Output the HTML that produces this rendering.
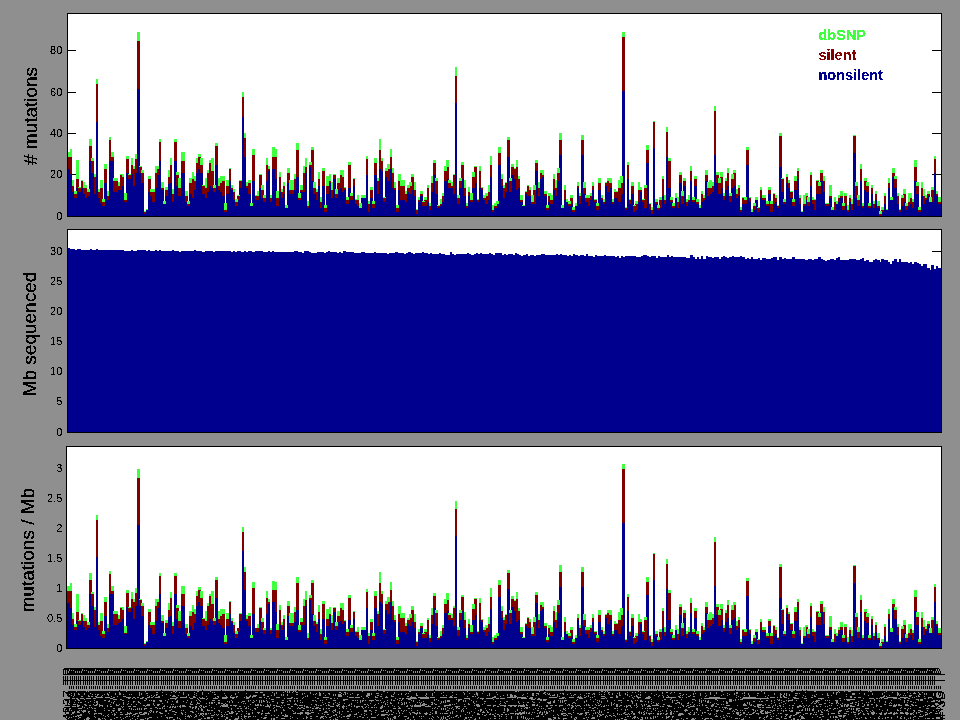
<!DOCTYPE html><html><head><meta charset="utf-8"><title>Mutation rates</title>
<style>html,body{margin:0;padding:0;background:#8f8f8f}svg{display:block}text{font-family:"Liberation Sans", sans-serif;fill:#000}</style></head><body>
<svg width="960" height="720" viewBox="0 0 960 720" shape-rendering="crispEdges">
<rect width="960" height="720" fill="#8f8f8f"/>
<defs><filter id="bin" filterUnits="userSpaceOnUse" x="0" y="0" width="960" height="720" color-interpolation-filters="sRGB"><feComponentTransfer><feFuncA type="discrete" tableValues="0 0 1 1 1"/></feComponentTransfer></filter><filter id="b5" filterUnits="userSpaceOnUse" x="0" y="0" width="70" height="720" color-interpolation-filters="sRGB"><feComponentTransfer><feFuncA type="discrete" tableValues="0 0 0 0 0 0 0 0 0 1 1 1 1 1 1 1 1 1 1 1"/></feComponentTransfer></filter><filter id="b2" filterUnits="userSpaceOnUse" x="0" y="656" width="960" height="64" color-interpolation-filters="sRGB"><feComponentTransfer><feFuncA type="discrete" tableValues="0 0 0 0 0 0 0 0 0 0 0 0 1 1 1 1 1 1 1 1"/></feComponentTransfer></filter></defs>
<rect x="67" y="13" width="875" height="204" fill="#fff"/>
<path fill="#000" d="M68 174h8v1h-8zM932 174h9v1h-9zM68 133h8v1h-8zM932 133h9v1h-9zM68 92h8v1h-8zM932 92h9v1h-9zM68 50h8v1h-8zM932 50h9v1h-9z"/>
<path fill="#00008f" d="M68 169h2V216h-2zM70 174h2V216h-2zM72 192h2V216h-2zM74 198h3V216h-3zM76 188h3V216h-3zM78 192h3V216h-3zM81 188h2V216h-2zM83 194h2V216h-2zM85 198h2V216h-2zM87 196h3V216h-3zM89 161h3V216h-3zM91 173h3V216h-3zM94 194h2V216h-2zM96 122h2V216h-2zM98 198h2V216h-2zM100 203h3V216h-3zM102 206h3V216h-3zM104 183h3V216h-3zM107 200h2V216h-2zM109 161h2V216h-2zM111 161h3V216h-3zM113 192h5V216h-5zM118 190h2V216h-2zM120 190h2V216h-2zM122 186h2V216h-2zM124 202h3V216h-3zM126 173h3V216h-3zM128 179h3V216h-3zM131 174h2V216h-2zM133 186h2V216h-2zM135 173h2V216h-2zM137 89h3V216h-3zM139 173h3V216h-3zM141 183h3V216h-3zM144 214h2V216h-2zM146 210h2V216h-2zM148 192h3V216h-3zM150 196h3V216h-3zM152 202h3V216h-3zM155 188h2V216h-2zM157 175h2V216h-2zM159 161h2V216h-2zM161 190h3V216h-3zM163 204h3V216h-3zM165 196h3V216h-3zM168 184h2V216h-2zM170 183h2V216h-2zM172 202h2V216h-2zM174 161h3V216h-3zM176 186h3V216h-3zM178 196h3V216h-3zM181 173h4V216h-4zM185 202h3V216h-3zM187 206h3V216h-3zM189 194h3V216h-3zM192 198h2V216h-2zM194 190h2V216h-2zM196 173h2V216h-2zM198 169h3V216h-3zM200 173h3V216h-3zM202 194h3V216h-3zM205 198h2V216h-2zM207 192h2V216h-2zM209 186h2V216h-2zM211 188h3V216h-3zM213 192h3V216h-3zM215 165h3V216h-3zM218 190h2V216h-2zM220 192h2V216h-2zM222 196h3V216h-3zM224 212h3V216h-3zM226 194h3V216h-3zM229 181h2V216h-2zM231 190h2V216h-2zM233 200h2V216h-2zM235 206h3V216h-3zM237 200h3V216h-3zM239 188h3V216h-3zM242 117h2V216h-2zM244 157h2V216h-2zM246 188h2V216h-2zM248 194h3V216h-3zM250 206h3V216h-3zM252 181h3V216h-3zM255 200h2V216h-2zM257 200h2V216h-2zM259 188h3V216h-3zM261 198h3V216h-3zM263 202h3V216h-3zM266 181h2V216h-2zM268 171h2V216h-2zM270 202h2V216h-2zM272 169h3V216h-3zM275 179h2V216h-2zM276 206h3V216h-3zM279 192h2V216h-2zM281 198h2V216h-2zM283 194h2V216h-2zM285 208h3V216h-3zM287 183h3V216h-3zM289 194h5V216h-5zM294 190h2V216h-2zM296 177h3V216h-3zM298 200h3V216h-3zM300 192h3V216h-3zM303 192h2V216h-2zM305 173h2V216h-2zM307 208h2V216h-2zM309 167h3V216h-3zM311 181h3V216h-3zM313 194h3V216h-3zM316 200h2V216h-2zM318 186h2V216h-2zM320 208h2V216h-2zM322 186h3V216h-3zM324 212h3V216h-3zM326 194h3V216h-3zM329 183h2V216h-2zM331 198h2V216h-2zM333 179h3V216h-3zM335 198h3V216h-3zM337 190h3V216h-3zM340 188h2V216h-2zM342 192h2V216h-2zM344 190h2V216h-2zM346 204h3V216h-3zM348 188h3V216h-3zM350 200h3V216h-3zM353 186h2V216h-2zM355 204h2V216h-2zM357 206h2V216h-2zM359 208h3V216h-3zM361 198h5V216h-5zM366 175h2V216h-2zM368 212h2V216h-2zM370 198h3V216h-3zM372 208h3V216h-3zM374 175h3V216h-3zM377 194h2V216h-2zM379 169h2V216h-2zM381 171h2V216h-2zM383 202h3V216h-3zM385 177h3V216h-3zM387 181h3V216h-3zM390 169h2V216h-2zM392 188h2V216h-2zM394 190h2V216h-2zM396 212h3V216h-3zM398 190h3V216h-3zM400 200h5V216h-5zM405 202h2V216h-2zM407 192h3V216h-3zM409 194h3V216h-3zM411 190h3V216h-3zM414 196h2V216h-2zM416 214h2V216h-2zM418 202h2V216h-2zM420 196h3V216h-3zM422 206h3V216h-3zM424 206h3V216h-3zM427 202h2V216h-2zM429 210h2V216h-2zM431 192h2V216h-2zM433 175h3V216h-3zM435 194h3V216h-3zM437 208h3V216h-3zM440 206h2V216h-2zM442 202h2V216h-2zM444 181h3V216h-3zM446 179h3V216h-3zM448 188h3V216h-3zM451 188h2V216h-2zM453 194h2V216h-2zM455 103h2V216h-2zM457 204h3V216h-3zM459 188h3V216h-3zM461 179h3V216h-3zM464 196h2V216h-2zM466 208h2V216h-2zM468 196h2V216h-2zM470 202h3V216h-3zM472 188h3V216h-3zM474 183h3V216h-3zM477 202h2V216h-2zM479 188h2V216h-2zM481 190h2V216h-2zM483 200h3V216h-3zM485 204h3V216h-3zM488 200h2V216h-2zM490 177h2V216h-2zM492 212h2V216h-2zM494 208h3V216h-3zM496 204h3V216h-3zM498 165h3V216h-3zM501 186h2V216h-2zM503 198h2V216h-2zM505 192h2V216h-2zM507 157h3V216h-3zM509 192h3V216h-3zM511 175h3V216h-3zM514 179h2V216h-2zM516 190h2V216h-2zM518 188h2V216h-2zM520 202h3V216h-3zM522 206h3V216h-3zM525 194h2V216h-2zM527 196h2V216h-2zM529 196h2V216h-2zM531 204h3V216h-3zM533 204h3V216h-3zM535 171h3V216h-3zM538 196h2V216h-2zM540 179h2V216h-2zM542 177h2V216h-2zM544 196h3V216h-3zM546 210h3V216h-3zM548 202h3V216h-3zM550 204h3V216h-3zM553 190h2V216h-2zM555 196h2V216h-2zM557 181h3V216h-3zM559 155h3V216h-3zM561 208h3V216h-3zM564 200h2V216h-2zM566 202h2V216h-2zM568 206h3V216h-3zM570 204h3V216h-3zM572 212h3V216h-3zM575 206h2V216h-2zM577 188h2V216h-2zM579 204h2V216h-2zM581 155h3V216h-3zM583 194h3V216h-3zM585 202h3V216h-3zM588 206h2V216h-2zM590 200h2V216h-2zM592 190h2V216h-2zM594 202h3V216h-3zM596 210h3V216h-3zM598 190h3V216h-3zM601 200h2V216h-2zM603 204h2V216h-2zM605 186h2V216h-2zM607 192h3V216h-3zM609 188h3V216h-3zM612 204h2V216h-2zM614 198h2V216h-2zM616 198h2V216h-2zM618 202h3V216h-3zM620 194h3V216h-3zM622 91h3V216h-3zM625 210h2V216h-2zM627 179h2V216h-2zM629 204h2V216h-2zM631 194h3V216h-3zM633 212h3V216h-3zM635 210h3V216h-3zM638 202h2V216h-2zM639 192h3V216h-3zM642 202h3V216h-3zM644 208h3V216h-3zM646 163h3V216h-3zM649 210h2V216h-2zM651 214h2V216h-2zM653 148h2V216h-2zM655 204h3V216h-3zM657 210h3V216h-3zM659 208h3V216h-3zM662 196h2V216h-2zM664 204h2V216h-2zM666 157h2V216h-2zM668 188h3V216h-3zM670 202h3V216h-3zM672 208h3V216h-3zM675 198h2V216h-2zM677 208h2V216h-2zM679 183h3V216h-3zM681 204h3V216h-3zM683 186h3V216h-3zM686 206h2V216h-2zM688 202h2V216h-2zM690 181h2V216h-2zM692 202h3V216h-3zM694 186h3V216h-3zM696 204h3V216h-3zM699 208h2V216h-2zM701 202h2V216h-2zM703 200h2V216h-2zM705 181h3V216h-3zM707 196h3V216h-3zM709 194h3V216h-3zM712 192h2V216h-2zM714 155h2V216h-2zM716 183h3V216h-3zM718 194h3V216h-3zM720 188h3V216h-3zM723 200h2V216h-2zM725 190h2V216h-2zM727 186h2V216h-2zM729 202h3V216h-3zM731 188h3V216h-3zM733 186h3V216h-3zM736 198h2V216h-2zM738 196h2V216h-2zM740 212h2V216h-2zM742 204h3V216h-3zM744 204h3V216h-3zM746 165h3V216h-3zM749 202h2V216h-2zM751 212h2V216h-2zM753 210h3V216h-3zM755 200h3V216h-3zM757 212h3V216h-3zM760 198h2V216h-2zM762 200h4V216h-4zM766 206h3V216h-3zM768 194h3V216h-3zM770 212h3V216h-3zM773 204h2V216h-2zM775 202h2V216h-2zM777 208h2V216h-2zM779 167h3V216h-3zM781 192h3V216h-3zM783 204h3V216h-3zM786 183h2V216h-2zM788 188h2V216h-2zM790 198h3V216h-3zM792 206h3V216h-3zM794 190h3V216h-3zM797 179h2V216h-2zM799 204h2V216h-2zM801 212h2V216h-2zM803 206h3V216h-3zM805 200h3V216h-3zM807 206h3V216h-3zM810 186h2V216h-2zM812 204h2V216h-2zM814 210h2V216h-2zM816 194h3V216h-3zM818 194h3V216h-3zM820 181h3V216h-3zM823 192h2V216h-2zM825 206h4V216h-4zM829 198h3V216h-3zM831 210h3V216h-3zM834 210h2V216h-2zM836 204h2V216h-2zM838 202h2V216h-2zM840 198h3V216h-3zM842 210h3V216h-3zM844 206h3V216h-3zM847 212h2V216h-2zM849 202h2V216h-2zM851 210h2V216h-2zM853 153h3V216h-3zM855 198h3V216h-3zM857 206h3V216h-3zM860 181h2V216h-2zM862 208h2V216h-2zM864 190h3V216h-3zM866 192h3V216h-3zM868 208h3V216h-3zM871 194h2V216h-2zM873 208h2V216h-2zM875 200h2V216h-2zM877 208h3V216h-3zM881 212h3V216h-3zM884 204h2V216h-2zM886 210h2V216h-2zM888 188h2V216h-2zM890 200h3V216h-3zM892 177h3V216h-3zM894 188h3V216h-3zM897 204h2V216h-2zM899 212h2V216h-2zM901 206h3V216h-3zM903 202h3V216h-3zM905 210h3V216h-3zM908 206h2V216h-2zM910 204h2V216h-2zM912 208h2V216h-2zM914 181h3V216h-3zM916 194h3V216h-3zM918 212h3V216h-3zM921 196h2V216h-2zM923 204h2V216h-2zM925 200h2V216h-2zM927 196h3V216h-3zM929 202h3V216h-3zM931 202h3V216h-3zM934 173h2V216h-2zM936 196h2V216h-2zM938 204h3V216h-3z"/>
<path fill="#800000" d="M68 157h2V169h-2zM70 157h2V174h-2zM72 186h2V192h-2zM74 194h3V198h-3zM76 179h3V188h-3zM78 188h3V192h-3zM81 181h2V188h-2zM83 188h2V194h-2zM85 188h2V198h-2zM87 192h3V196h-3zM89 146h3V161h-3zM91 161h3V173h-3zM94 177h2V194h-2zM96 84h2V122h-2zM98 192h2V198h-2zM100 188h3V203h-3zM102 202h3V206h-3zM104 169h3V183h-3zM107 196h2V200h-2zM109 140h2V161h-2zM111 157h3V161h-3zM113 181h5V192h-5zM118 186h2V190h-2zM120 175h2V190h-2zM122 177h2V186h-2zM124 200h3V202h-3zM126 159h3V173h-3zM128 175h3V179h-3zM131 165h2V174h-2zM133 169h2V186h-2zM135 159h2V173h-2zM137 41h3V89h-3zM139 167h3V173h-3zM141 173h3V183h-3zM144 212h2V214h-2zM148 179h3V192h-3zM150 192h3V196h-3zM152 192h3V202h-3zM155 173h2V188h-2zM157 169h2V175h-2zM159 142h2V161h-2zM161 188h3V190h-3zM165 190h3V196h-3zM168 177h2V184h-2zM170 165h2V183h-2zM172 194h2V202h-2zM174 142h3V161h-3zM176 175h3V186h-3zM178 188h3V196h-3zM181 161h4V173h-4zM185 196h3V202h-3zM187 204h3V206h-3zM189 183h3V194h-3zM192 179h2V198h-2zM194 181h2V190h-2zM196 163h2V173h-2zM198 157h3V169h-3zM200 165h3V173h-3zM202 186h3V194h-3zM205 188h2V198h-2zM207 173h2V192h-2zM209 163h2V186h-2zM211 171h3V188h-3zM213 188h3V192h-3zM215 146h3V165h-3zM218 186h2V190h-2zM220 183h2V192h-2zM222 181h3V196h-3zM224 210h3V212h-3zM226 186h3V194h-3zM229 169h2V181h-2zM231 188h2V190h-2zM233 192h2V200h-2zM235 202h3V206h-3zM237 196h3V200h-3zM239 181h3V188h-3zM242 97h2V117h-2zM244 138h2V157h-2zM246 186h2V188h-2zM248 183h3V194h-3zM252 155h3V181h-3zM255 196h2V200h-2zM257 196h2V200h-2zM259 175h3V188h-3zM261 190h3V198h-3zM263 198h3V202h-3zM266 165h2V181h-2zM268 169h2V171h-2zM270 198h2V202h-2zM272 157h3V169h-3zM275 157h2V179h-2zM276 198h3V206h-3zM279 177h2V192h-2zM281 192h2V198h-2zM283 186h2V194h-2zM287 173h3V183h-3zM289 190h5V194h-5zM294 179h2V190h-2zM296 150h3V177h-3zM298 198h3V200h-3zM300 190h3V192h-3zM303 173h2V192h-2zM305 167h2V173h-2zM307 206h2V208h-2zM309 165h3V167h-3zM311 150h3V181h-3zM313 188h3V194h-3zM316 192h2V200h-2zM318 179h2V186h-2zM320 202h2V208h-2zM322 171h3V186h-3zM324 208h3V212h-3zM326 186h3V194h-3zM329 181h2V183h-2zM331 190h2V198h-2zM333 175h3V179h-3zM335 194h3V198h-3zM337 183h3V190h-3zM340 175h2V188h-2zM342 177h2V192h-2zM344 188h2V190h-2zM346 200h3V204h-3zM348 165h3V188h-3zM350 196h3V200h-3zM353 179h2V186h-2zM355 200h2V204h-2zM357 200h2V206h-2zM366 159h2V175h-2zM368 204h2V212h-2zM370 190h3V198h-3zM372 204h3V208h-3zM374 163h3V175h-3zM377 181h2V194h-2zM379 150h2V169h-2zM381 161h2V171h-2zM383 198h3V202h-3zM385 171h3V177h-3zM387 169h3V181h-3zM390 157h2V169h-2zM392 173h2V188h-2zM394 188h2V190h-2zM396 208h3V212h-3zM398 181h3V190h-3zM400 186h5V200h-5zM405 194h2V202h-2zM407 188h3V192h-3zM409 186h3V194h-3zM411 177h3V190h-3zM414 190h2V196h-2zM416 210h2V214h-2zM418 200h2V202h-2zM420 194h3V196h-3zM422 202h3V206h-3zM424 200h3V206h-3zM427 188h2V202h-2zM429 206h2V210h-2zM431 183h2V192h-2zM433 163h3V175h-3zM435 181h3V194h-3zM437 206h3V208h-3zM440 204h2V206h-2zM442 196h2V202h-2zM444 171h3V181h-3zM446 167h3V179h-3zM448 183h3V188h-3zM451 186h2V188h-2zM453 175h2V194h-2zM455 76h2V103h-2zM457 198h3V204h-3zM459 181h3V188h-3zM461 165h3V179h-3zM464 188h2V196h-2zM466 206h2V208h-2zM468 192h2V196h-2zM470 200h3V202h-3zM472 177h3V188h-3zM474 167h3V183h-3zM477 200h2V202h-2zM479 171h2V188h-2zM481 188h2V190h-2zM483 198h3V200h-3zM485 196h3V204h-3zM488 192h2V200h-2zM490 165h2V177h-2zM492 210h2V212h-2zM494 206h3V208h-3zM498 153h3V165h-3zM501 179h2V186h-2zM503 188h2V198h-2zM505 183h2V192h-2zM507 140h3V157h-3zM509 181h3V192h-3zM511 167h3V175h-3zM514 169h2V179h-2zM516 167h2V190h-2zM518 179h2V188h-2zM520 200h3V202h-3zM525 192h2V194h-2zM527 186h2V196h-2zM529 190h2V196h-2zM531 202h3V204h-3zM533 190h3V204h-3zM535 163h3V171h-3zM538 188h2V196h-2zM540 173h2V179h-2zM542 175h2V177h-2zM544 194h3V196h-3zM546 208h3V210h-3zM548 196h3V202h-3zM550 200h3V204h-3zM553 179h2V190h-2zM555 188h2V196h-2zM557 173h3V181h-3zM559 140h3V155h-3zM564 190h2V200h-2zM568 204h3V206h-3zM570 198h3V204h-3zM572 210h3V212h-3zM577 186h2V188h-2zM579 196h2V204h-2zM581 140h3V155h-3zM583 188h3V194h-3zM585 198h3V202h-3zM588 198h2V206h-2zM590 196h2V200h-2zM592 186h2V190h-2zM594 200h3V202h-3zM596 206h3V210h-3zM598 183h3V190h-3zM601 198h2V200h-2zM603 202h2V204h-2zM605 183h2V186h-2zM607 181h3V192h-3zM609 183h3V188h-3zM612 202h2V204h-2zM614 192h2V198h-2zM616 192h2V198h-2zM618 188h3V202h-3zM620 183h3V194h-3zM622 37h3V91h-3zM625 208h2V210h-2zM627 165h2V179h-2zM629 200h2V204h-2zM631 186h3V194h-3zM633 206h3V212h-3zM635 204h3V210h-3zM638 190h2V202h-2zM639 190h3V192h-3zM642 200h3V202h-3zM644 188h3V208h-3zM646 150h3V163h-3zM649 204h2V210h-2zM651 210h2V214h-2zM653 122h2V148h-2zM655 202h3V204h-3zM657 208h3V210h-3zM659 200h3V208h-3zM662 179h2V196h-2zM664 200h2V204h-2zM666 132h2V157h-2zM668 161h3V188h-3zM670 200h3V202h-3zM672 206h3V208h-3zM677 202h2V208h-2zM679 175h3V183h-3zM681 196h3V204h-3zM683 181h3V186h-3zM686 202h2V206h-2zM688 200h2V202h-2zM690 171h2V181h-2zM692 200h3V202h-3zM694 179h3V186h-3zM696 202h3V204h-3zM701 194h2V202h-2zM703 198h2V200h-2zM705 175h3V181h-3zM707 188h3V196h-3zM709 188h3V194h-3zM712 186h2V192h-2zM714 111h2V155h-2zM716 175h3V183h-3zM718 183h3V194h-3zM720 177h3V188h-3zM723 196h2V200h-2zM725 181h2V190h-2zM727 173h2V186h-2zM729 196h3V202h-3zM731 179h3V188h-3zM733 173h3V186h-3zM736 194h2V198h-2zM738 188h2V196h-2zM740 210h2V212h-2zM742 198h3V204h-3zM744 200h3V204h-3zM746 150h3V165h-3zM749 198h2V202h-2zM753 206h3V210h-3zM757 208h3V212h-3zM760 190h2V198h-2zM762 198h4V200h-4zM766 204h3V206h-3zM768 190h3V194h-3zM770 204h3V212h-3zM773 194h2V204h-2zM775 198h2V202h-2zM777 206h2V208h-2zM779 136h3V167h-3zM781 179h3V192h-3zM783 202h3V204h-3zM786 177h2V183h-2zM788 183h2V188h-2zM790 192h3V198h-3zM792 202h3V206h-3zM794 181h3V190h-3zM797 171h2V179h-2zM799 198h2V204h-2zM803 204h3V206h-3zM805 196h3V200h-3zM807 202h3V206h-3zM810 175h2V186h-2zM812 200h2V204h-2zM814 200h2V210h-2zM816 181h3V194h-3zM818 186h3V194h-3zM820 173h3V181h-3zM823 181h2V192h-2zM825 204h4V206h-4zM829 196h3V198h-3zM834 202h2V210h-2zM838 198h2V202h-2zM840 196h3V198h-3zM842 206h3V210h-3zM844 196h3V206h-3zM847 210h2V212h-2zM849 198h2V202h-2zM851 204h2V210h-2zM853 136h3V153h-3zM855 186h3V198h-3zM857 200h3V206h-3zM860 169h2V181h-2zM862 206h2V208h-2zM864 181h3V190h-3zM866 186h3V192h-3zM868 206h3V208h-3zM871 188h2V194h-2zM873 204h2V208h-2zM875 194h2V200h-2zM877 206h3V208h-3zM879 214h3V216h-3zM881 210h3V212h-3zM884 196h2V204h-2zM888 183h2V188h-2zM892 173h3V177h-3zM894 179h3V188h-3zM897 196h2V204h-2zM899 210h2V212h-2zM901 198h3V206h-3zM903 194h3V202h-3zM905 206h3V210h-3zM908 202h2V206h-2zM910 198h2V204h-2zM912 202h2V208h-2zM914 167h3V181h-3zM916 186h3V194h-3zM918 210h3V212h-3zM921 188h2V196h-2zM923 196h2V204h-2zM925 198h2V200h-2zM927 194h3V196h-3zM931 190h3V202h-3zM934 159h2V173h-2zM936 194h2V196h-2zM938 202h3V204h-3z"/>
<path fill="#40ff40" d="M68 152h2V157h-2zM70 149h2V157h-2zM72 180h2V186h-2zM74 191h3V194h-3zM76 160h3V179h-3zM78 187h3V188h-3zM81 180h2V181h-2zM83 182h2V188h-2zM85 185h2V188h-2zM87 189h3V192h-3zM89 139h3V146h-3zM91 158h3V161h-3zM94 174h2V177h-2zM96 79h2V84h-2zM98 189h2V192h-2zM100 180h3V188h-3zM102 199h3V202h-3zM104 164h3V169h-3zM107 191h2V196h-2zM109 137h2V140h-2zM111 152h3V157h-3zM113 178h5V181h-5zM118 182h2V186h-2zM120 174h2V175h-2zM122 174h2V177h-2zM124 193h3V200h-3zM126 156h3V159h-3zM128 174h3V175h-3zM131 158h2V165h-2zM133 166h2V169h-2zM135 154h2V159h-2zM137 32h3V41h-3zM139 166h3V167h-3zM141 170h3V173h-3zM144 211h2V212h-2zM146 209h2V210h-2zM148 176h3V179h-3zM150 189h3V192h-3zM152 189h3V192h-3zM155 166h2V173h-2zM157 166h2V169h-2zM159 139h2V142h-2zM161 182h3V188h-3zM163 201h3V204h-3zM165 187h3V190h-3zM168 170h2V177h-2zM170 158h2V165h-2zM172 189h2V194h-2zM174 139h3V142h-3zM176 172h3V175h-3zM178 178h3V188h-3zM181 152h4V161h-4zM185 191h3V196h-3zM187 201h3V204h-3zM189 178h3V183h-3zM192 172h2V179h-2zM194 176h2V181h-2zM196 158h2V163h-2zM198 154h3V157h-3zM200 158h3V165h-3zM202 185h3V186h-3zM205 178h2V188h-2zM207 170h2V173h-2zM209 160h2V163h-2zM211 158h3V171h-3zM213 185h3V188h-3zM215 143h3V146h-3zM218 178h2V186h-2zM220 176h2V183h-2zM222 176h3V181h-3zM224 203h3V210h-3zM226 180h3V186h-3zM229 168h2V169h-2zM231 185h2V188h-2zM233 189h2V192h-2zM235 199h3V202h-3zM237 195h3V196h-3zM239 180h3V181h-3zM242 92h2V97h-2zM244 133h2V138h-2zM246 182h2V186h-2zM248 180h3V183h-3zM250 203h3V206h-3zM252 149h3V155h-3zM255 195h2V196h-2zM257 191h2V196h-2zM259 174h3V175h-3zM261 185h3V190h-3zM263 195h3V198h-3zM266 158h2V165h-2zM268 166h2V169h-2zM270 195h2V198h-2zM272 147h3V157h-3zM275 149h2V157h-2zM276 191h3V198h-3zM279 172h2V177h-2zM281 189h2V192h-2zM283 182h2V186h-2zM285 205h3V208h-3zM287 168h3V173h-3zM289 180h5V190h-5zM294 174h2V179h-2zM296 143h3V150h-3zM298 193h3V198h-3zM300 185h3V190h-3zM303 166h2V173h-2zM305 158h2V167h-2zM307 201h2V206h-2zM309 162h3V165h-3zM311 147h3V150h-3zM313 182h3V188h-3zM316 189h2V192h-2zM318 172h2V179h-2zM320 197h2V202h-2zM322 168h3V171h-3zM324 205h3V208h-3zM326 176h3V186h-3zM329 174h2V181h-2zM331 182h2V190h-2zM333 174h3V175h-3zM335 189h3V194h-3zM337 178h3V183h-3zM340 170h2V175h-2zM342 170h2V177h-2zM344 187h2V188h-2zM346 197h3V200h-3zM348 162h3V165h-3zM350 193h3V196h-3zM353 178h2V179h-2zM355 199h2V200h-2zM357 195h2V200h-2zM359 203h3V208h-3zM361 195h5V198h-5zM366 156h2V159h-2zM368 201h2V204h-2zM370 187h3V190h-3zM372 201h3V204h-3zM374 158h3V163h-3zM377 178h2V181h-2zM379 139h2V150h-2zM381 158h2V161h-2zM383 197h3V198h-3zM385 168h3V171h-3zM387 164h3V169h-3zM390 149h2V157h-2zM392 168h2V173h-2zM394 182h2V188h-2zM396 205h3V208h-3zM398 174h3V181h-3zM400 180h5V186h-5zM405 191h2V194h-2zM407 185h3V188h-3zM409 182h3V186h-3zM411 174h3V177h-3zM414 182h2V190h-2zM416 209h2V210h-2zM418 197h2V200h-2zM420 191h3V194h-3zM422 201h3V202h-3zM424 197h3V200h-3zM427 185h2V188h-2zM429 203h2V206h-2zM431 176h2V183h-2zM433 160h3V163h-3zM435 178h3V181h-3zM437 205h3V206h-3zM440 199h2V204h-2zM442 193h2V196h-2zM444 166h3V171h-3zM446 160h3V167h-3zM448 180h3V183h-3zM451 182h2V186h-2zM453 174h2V175h-2zM455 67h2V76h-2zM457 195h3V198h-3zM459 178h3V181h-3zM461 162h3V165h-3zM464 180h2V188h-2zM466 203h2V206h-2zM468 187h2V192h-2zM470 193h3V200h-3zM472 172h3V177h-3zM474 166h3V167h-3zM477 199h2V200h-2zM479 166h2V171h-2zM481 187h2V188h-2zM483 195h3V198h-3zM485 193h3V196h-3zM488 185h2V192h-2zM490 156h2V165h-2zM492 205h2V210h-2zM494 203h3V206h-3zM496 201h3V204h-3zM498 147h3V153h-3zM501 174h2V179h-2zM503 185h2V188h-2zM505 182h2V183h-2zM507 137h3V140h-3zM509 178h3V181h-3zM511 164h3V167h-3zM514 168h2V169h-2zM516 160h2V167h-2zM518 176h2V179h-2zM520 195h3V200h-3zM522 205h3V206h-3zM525 191h2V192h-2zM527 185h2V186h-2zM529 187h2V190h-2zM531 195h3V202h-3zM533 185h3V190h-3zM535 160h3V163h-3zM538 182h2V188h-2zM540 170h2V173h-2zM542 170h2V175h-2zM544 191h3V194h-3zM546 205h3V208h-3zM548 193h3V196h-3zM550 195h3V200h-3zM553 174h2V179h-2zM555 180h2V188h-2zM557 168h3V173h-3zM559 133h3V140h-3zM561 205h3V208h-3zM564 185h2V190h-2zM566 199h2V202h-2zM568 201h3V204h-3zM570 195h3V198h-3zM572 207h3V210h-3zM575 203h2V206h-2zM577 182h2V186h-2zM579 193h2V196h-2zM581 135h3V140h-3zM583 182h3V188h-3zM585 195h3V198h-3zM588 195h2V198h-2zM590 193h2V196h-2zM592 182h2V186h-2zM594 199h3V200h-3zM596 203h3V206h-3zM598 178h3V183h-3zM601 195h2V198h-2zM603 199h2V202h-2zM605 182h2V183h-2zM607 178h3V181h-3zM609 178h3V183h-3zM612 199h2V202h-2zM614 189h2V192h-2zM616 191h2V192h-2zM618 180h3V188h-3zM620 176h3V183h-3zM622 32h3V37h-3zM625 207h2V208h-2zM627 162h2V165h-2zM629 199h2V200h-2zM631 182h3V186h-3zM633 205h3V206h-3zM635 201h3V204h-3zM638 182h2V190h-2zM639 187h3V190h-3zM642 199h3V200h-3zM644 185h3V188h-3zM646 145h3V150h-3zM649 203h2V204h-2zM651 207h2V210h-2zM653 121h2V122h-2zM655 199h3V202h-3zM657 205h3V208h-3zM659 197h3V200h-3zM662 176h2V179h-2zM664 195h2V200h-2zM666 127h2V132h-2zM668 158h3V161h-3zM670 197h3V200h-3zM672 203h3V206h-3zM675 193h2V198h-2zM677 197h2V202h-2zM679 172h3V175h-3zM681 191h3V196h-3zM683 178h3V181h-3zM686 199h2V202h-2zM688 195h2V200h-2zM690 166h2V171h-2zM692 197h3V200h-3zM694 176h3V179h-3zM696 199h3V202h-3zM699 205h2V208h-2zM701 191h2V194h-2zM703 195h2V198h-2zM705 170h3V175h-3zM707 182h3V188h-3zM709 180h3V188h-3zM712 182h2V186h-2zM714 106h2V111h-2zM716 172h3V175h-3zM718 178h3V183h-3zM720 172h3V177h-3zM723 193h2V196h-2zM725 178h2V181h-2zM727 168h2V173h-2zM729 193h3V196h-3zM731 174h3V179h-3zM733 170h3V173h-3zM736 189h2V194h-2zM738 185h2V188h-2zM740 207h2V210h-2zM742 197h3V198h-3zM744 197h3V200h-3zM746 147h3V150h-3zM749 197h2V198h-2zM751 209h2V212h-2zM753 203h3V206h-3zM755 197h3V200h-3zM757 207h3V208h-3zM760 187h2V190h-2zM762 195h4V198h-4zM766 201h3V204h-3zM768 187h3V190h-3zM770 201h3V204h-3zM773 193h2V194h-2zM775 195h2V198h-2zM777 205h2V206h-2zM779 133h3V136h-3zM781 178h3V179h-3zM783 199h3V202h-3zM786 174h2V177h-2zM788 180h2V183h-2zM790 191h3V192h-3zM792 199h3V202h-3zM794 176h3V181h-3zM797 168h2V171h-2zM799 195h2V198h-2zM801 211h2V212h-2zM803 195h3V204h-3zM805 193h3V196h-3zM807 197h3V202h-3zM810 172h2V175h-2zM812 197h2V200h-2zM814 199h2V200h-2zM816 180h3V181h-3zM818 182h3V186h-3zM820 170h3V173h-3zM823 176h2V181h-2zM825 203h4V204h-4zM829 185h3V196h-3zM831 207h3V210h-3zM834 197h2V202h-2zM836 201h2V204h-2zM838 195h2V198h-2zM840 191h3V196h-3zM842 203h3V206h-3zM844 193h3V196h-3zM847 205h2V210h-2zM849 195h2V198h-2zM851 199h2V204h-2zM853 135h3V136h-3zM855 182h3V186h-3zM857 195h3V200h-3zM860 164h2V169h-2zM862 203h2V206h-2zM864 178h3V181h-3zM866 182h3V186h-3zM868 203h3V206h-3zM871 185h2V188h-2zM873 201h2V204h-2zM875 191h2V194h-2zM877 201h3V206h-3zM879 211h3V214h-3zM881 207h3V210h-3zM884 193h2V196h-2zM886 209h2V210h-2zM888 178h2V183h-2zM890 197h3V200h-3zM892 168h3V173h-3zM894 176h3V179h-3zM897 193h2V196h-2zM899 209h2V210h-2zM901 195h3V198h-3zM903 189h3V194h-3zM905 203h3V206h-3zM908 193h2V202h-2zM910 193h2V198h-2zM912 199h2V202h-2zM914 160h3V167h-3zM916 182h3V186h-3zM918 207h3V210h-3zM921 182h2V188h-2zM923 189h2V196h-2zM925 195h2V198h-2zM927 191h3V194h-3zM929 197h3V202h-3zM931 187h3V190h-3zM934 156h2V159h-2zM936 191h2V194h-2zM938 197h3V202h-3z"/>
<path fill="#000" d="M67 13h875v1h-875zM67 216h875v1h-875zM67 13h1v204h-1zM941 13h1v204h-1z"/>
<rect x="67" y="229" width="875" height="204" fill="#fff"/>
<path fill="#000" d="M68 401h8v1h-8zM932 401h9v1h-9zM68 371h8v1h-8zM932 371h9v1h-9zM68 341h8v1h-8zM932 341h9v1h-9zM68 311h8v1h-8zM932 311h9v1h-9zM68 281h8v1h-8zM932 281h9v1h-9zM68 251h8v1h-8zM932 251h9v1h-9z"/>
<path fill="#00008f" d="M68 248h2V432h-2zM70 249h5V432h-5zM75 250h2V432h-2zM77 249h4V432h-4zM81 250h9V432h-9zM90 249h2V432h-2zM92 250h4V432h-4zM96 249h2V432h-2zM98 250h26V432h-26zM124 251h7V432h-7zM131 250h2V432h-2zM133 251h4V432h-4zM137 250h9V432h-9zM146 251h2V432h-2zM148 250h2V432h-2zM150 251h5V432h-5zM155 250h2V432h-2zM157 251h2V432h-2zM159 250h2V432h-2zM161 251h11V432h-11zM172 250h2V432h-2zM174 251h5V432h-5zM179 252h2V432h-2zM181 251h13V432h-13zM194 250h2V432h-2zM196 251h6V432h-6zM202 252h3V432h-3zM205 251h8V432h-8zM213 252h2V432h-2zM215 251h16V432h-16zM231 252h2V432h-2zM233 251h2V432h-2zM235 252h2V432h-2zM237 251h4V432h-4zM241 252h3V432h-3zM244 251h2V432h-2zM246 252h2V432h-2zM248 251h4V432h-4zM252 252h3V432h-3zM255 251h8V432h-8zM263 252h5V432h-5zM268 251h2V432h-2zM270 252h2V432h-2zM272 251h2V432h-2zM274 252h20V432h-20zM294 251h4V432h-4zM298 252h4V432h-4zM302 253h2V432h-2zM304 251h5V432h-5zM309 252h2V432h-2zM311 253h6V432h-6zM317 252h7V432h-7zM324 253h2V432h-2zM326 252h2V432h-2zM328 251h2V432h-2zM330 252h7V432h-7zM337 253h2V432h-2zM339 252h2V432h-2zM341 253h2V432h-2zM343 251h3V432h-3zM346 252h8V432h-8zM354 253h7V432h-7zM361 252h4V432h-4zM365 253h9V432h-9zM374 252h2V432h-2zM376 253h11V432h-11zM387 254h2V432h-2zM389 253h6V432h-6zM395 252h3V432h-3zM398 253h6V432h-6zM404 254h2V432h-2zM406 253h2V432h-2zM408 252h3V432h-3zM411 253h2V432h-2zM413 254h2V432h-2zM415 253h7V432h-7zM422 252h2V432h-2zM424 253h4V432h-4zM428 254h2V432h-2zM430 253h2V432h-2zM432 254h7V432h-7zM439 253h2V432h-2zM441 254h4V432h-4zM445 255h5V432h-5zM450 252h2V432h-2zM452 254h2V432h-2zM454 255h2V432h-2zM456 254h11V432h-11zM467 253h2V432h-2zM469 254h2V432h-2zM471 255h3V432h-3zM474 254h2V432h-2zM476 253h2V432h-2zM478 254h2V432h-2zM480 253h2V432h-2zM482 254h7V432h-7zM489 253h2V432h-2zM491 254h2V432h-2zM493 255h2V432h-2zM495 253h7V432h-7zM502 255h2V432h-2zM504 254h2V432h-2zM506 255h2V432h-2zM508 254h5V432h-5zM513 255h2V432h-2zM515 253h2V432h-2zM517 254h2V432h-2zM519 255h2V432h-2zM521 256h2V432h-2zM523 255h3V432h-3zM526 254h2V432h-2zM528 256h2V432h-2zM530 255h4V432h-4zM534 256h2V432h-2zM536 255h5V432h-5zM541 254h4V432h-4zM545 255h11V432h-11zM556 254h2V432h-2zM558 255h2V432h-2zM560 254h2V432h-2zM562 255h5V432h-5zM567 256h2V432h-2zM569 255h2V432h-2zM571 256h2V432h-2zM573 254h2V432h-2zM575 255h3V432h-3zM578 256h2V432h-2zM580 255h4V432h-4zM584 256h2V432h-2zM586 254h2V432h-2zM588 256h5V432h-5zM593 257h2V432h-2zM595 255h2V432h-2zM597 256h7V432h-7zM604 255h2V432h-2zM606 256h9V432h-9zM615 257h2V432h-2zM617 256h2V432h-2zM619 258h2V432h-2zM621 256h2V432h-2zM623 257h2V432h-2zM625 256h11V432h-11zM636 257h5V432h-5zM641 256h2V432h-2zM643 255h4V432h-4zM647 256h2V432h-2zM649 257h2V432h-2zM651 256h5V432h-5zM656 258h2V432h-2zM658 256h2V432h-2zM660 257h7V432h-7zM667 255h2V432h-2zM669 257h2V432h-2zM671 256h2V432h-2zM673 257h13V432h-13zM686 258h4V432h-4zM690 255h3V432h-3zM693 257h2V432h-2zM695 259h2V432h-2zM697 257h2V432h-2zM699 259h2V432h-2zM701 256h2V432h-2zM703 259h3V432h-3zM706 256h2V432h-2zM708 257h4V432h-4zM712 258h2V432h-2zM714 257h5V432h-5zM719 259h2V432h-2zM721 257h2V432h-2zM723 256h2V432h-2zM725 257h2V432h-2zM727 258h2V432h-2zM729 257h3V432h-3zM732 256h2V432h-2zM734 257h6V432h-6zM740 256h2V432h-2zM742 257h3V432h-3zM745 259h2V432h-2zM747 258h2V432h-2zM749 259h2V432h-2zM751 257h2V432h-2zM753 259h5V432h-5zM758 258h2V432h-2zM760 260h2V432h-2zM762 258h4V432h-4zM766 259h5V432h-5zM771 258h2V432h-2zM773 257h4V432h-4zM777 260h2V432h-2zM779 257h3V432h-3zM782 259h2V432h-2zM784 258h2V432h-2zM786 259h6V432h-6zM792 257h3V432h-3zM795 259h10V432h-10zM805 260h3V432h-3zM808 259h4V432h-4zM812 260h2V432h-2zM814 259h4V432h-4zM818 257h3V432h-3zM821 259h2V432h-2zM823 260h2V432h-2zM825 261h2V432h-2zM827 260h3V432h-3zM830 259h4V432h-4zM834 260h2V432h-2zM836 258h2V432h-2zM838 257h2V432h-2zM840 260h9V432h-9zM849 259h7V432h-7zM856 260h4V432h-4zM860 259h2V432h-2zM862 258h2V432h-2zM864 261h2V432h-2zM866 260h3V432h-3zM869 262h4V432h-4zM873 260h2V432h-2zM875 259h2V432h-2zM877 260h3V432h-3zM880 262h1V432h-1zM881 259h3V432h-3zM884 260h4V432h-4zM888 262h2V432h-2zM890 264h2V432h-2zM892 261h2V432h-2zM894 259h3V432h-3zM897 262h2V432h-2zM899 259h2V432h-2zM901 262h7V432h-7zM908 263h2V432h-2zM910 262h2V432h-2zM912 264h2V432h-2zM914 262h3V432h-3zM917 263h2V432h-2zM919 264h2V432h-2zM921 266h2V432h-2zM923 264h4V432h-4zM927 268h3V432h-3zM930 270h1V432h-1zM931 265h3V432h-3zM934 269h2V432h-2zM936 266h2V432h-2zM938 268h3V432h-3z"/>
<path fill="#000" d="M67 229h875v1h-875zM67 432h875v1h-875zM67 229h1v204h-1zM941 229h1v204h-1z"/>
<rect x="66" y="446" width="876" height="203" fill="#fff"/>
<path fill="#00008f" d="M67 603h3V648h-3zM70 608h2V648h-2zM72 625h2V648h-2zM74 630h3V648h-3zM76 621h3V648h-3zM78 625h3V648h-3zM81 621h2V648h-2zM83 627h2V648h-2zM85 630h2V648h-2zM87 628h3V648h-3zM89 594h3V648h-3zM91 606h3V648h-3zM94 627h2V648h-2zM96 557h2V648h-2zM98 630h2V648h-2zM100 636h3V648h-3zM102 638h3V648h-3zM104 616h3V648h-3zM107 632h2V648h-2zM109 594h2V648h-2zM111 594h3V648h-3zM113 625h5V648h-5zM118 623h2V648h-2zM120 622h2V648h-2zM122 619h2V648h-2zM124 634h3V648h-3zM126 607h3V648h-3zM128 612h3V648h-3zM131 608h2V648h-2zM133 619h2V648h-2zM135 606h2V648h-2zM137 525h3V648h-3zM139 606h3V648h-3zM141 616h3V648h-3zM144 646h2V648h-2zM146 642h2V648h-2zM148 625h3V648h-3zM150 628h3V648h-3zM152 634h3V648h-3zM155 621h2V648h-2zM157 608h2V648h-2zM159 594h2V648h-2zM161 623h3V648h-3zM163 636h3V648h-3zM165 628h3V648h-3zM168 617h2V648h-2zM170 616h2V648h-2zM172 634h2V648h-2zM174 594h3V648h-3zM176 619h3V648h-3zM178 628h3V648h-3zM181 606h4V648h-4zM185 634h3V648h-3zM187 638h3V648h-3zM189 626h3V648h-3zM192 630h2V648h-2zM194 623h2V648h-2zM196 606h2V648h-2zM198 602h3V648h-3zM200 606h3V648h-3zM202 626h3V648h-3zM205 630h2V648h-2zM207 625h2V648h-2zM209 619h2V648h-2zM211 621h3V648h-3zM213 625h3V648h-3zM215 598h3V648h-3zM218 623h2V648h-2zM220 625h2V648h-2zM222 628h3V648h-3zM224 644h3V648h-3zM226 626h3V648h-3zM229 614h2V648h-2zM231 623h2V648h-2zM233 633h2V648h-2zM235 638h3V648h-3zM237 632h3V648h-3zM239 621h3V648h-3zM242 551h2V648h-2zM244 590h2V648h-2zM246 621h2V648h-2zM248 626h3V648h-3zM250 638h3V648h-3zM252 614h3V648h-3zM255 632h2V648h-2zM257 632h2V648h-2zM259 621h3V648h-3zM261 630h3V648h-3zM263 634h3V648h-3zM266 614h2V648h-2zM268 604h2V648h-2zM270 634h2V648h-2zM272 602h3V648h-3zM275 612h2V648h-2zM276 638h3V648h-3zM279 625h2V648h-2zM281 630h2V648h-2zM283 626h2V648h-2zM285 640h3V648h-3zM287 616h3V648h-3zM289 626h5V648h-5zM294 622h2V648h-2zM296 610h3V648h-3zM298 632h3V648h-3zM300 625h3V648h-3zM303 625h2V648h-2zM305 606h2V648h-2zM307 640h2V648h-2zM309 600h3V648h-3zM311 614h3V648h-3zM313 626h3V648h-3zM316 632h2V648h-2zM318 619h2V648h-2zM320 640h2V648h-2zM322 619h3V648h-3zM324 644h3V648h-3zM326 626h3V648h-3zM329 616h2V648h-2zM331 630h2V648h-2zM333 612h3V648h-3zM335 630h3V648h-3zM337 622h3V648h-3zM340 621h2V648h-2zM342 624h2V648h-2zM344 622h2V648h-2zM346 636h3V648h-3zM348 620h3V648h-3zM350 632h3V648h-3zM353 619h2V648h-2zM355 636h2V648h-2zM357 638h2V648h-2zM359 640h3V648h-3zM361 630h5V648h-5zM366 608h2V648h-2zM368 644h2V648h-2zM370 630h3V648h-3zM372 640h3V648h-3zM374 608h3V648h-3zM377 626h2V648h-2zM379 602h2V648h-2zM381 604h2V648h-2zM383 634h3V648h-3zM385 610h3V648h-3zM387 614h3V648h-3zM390 602h2V648h-2zM392 620h2V648h-2zM394 622h2V648h-2zM396 644h3V648h-3zM398 622h3V648h-3zM400 632h5V648h-5zM405 634h2V648h-2zM407 624h3V648h-3zM409 626h3V648h-3zM411 622h3V648h-3zM414 628h2V648h-2zM416 646h2V648h-2zM418 634h2V648h-2zM420 628h3V648h-3zM422 638h3V648h-3zM424 638h3V648h-3zM427 634h2V648h-2zM429 642h2V648h-2zM431 624h2V648h-2zM433 608h3V648h-3zM435 626h3V648h-3zM437 640h3V648h-3zM440 638h2V648h-2zM442 634h2V648h-2zM444 613h3V648h-3zM446 611h3V648h-3zM448 620h3V648h-3zM451 620h2V648h-2zM453 626h2V648h-2zM455 536h2V648h-2zM457 636h3V648h-3zM459 620h3V648h-3zM461 611h3V648h-3zM464 628h2V648h-2zM466 640h2V648h-2zM468 628h2V648h-2zM470 634h3V648h-3zM472 620h3V648h-3zM474 615h3V648h-3zM477 634h2V648h-2zM479 620h2V648h-2zM481 622h2V648h-2zM483 632h3V648h-3zM485 636h3V648h-3zM488 632h2V648h-2zM490 609h2V648h-2zM492 644h2V648h-2zM494 640h3V648h-3zM496 636h3V648h-3zM498 597h3V648h-3zM501 618h2V648h-2zM503 630h2V648h-2zM505 624h2V648h-2zM507 589h3V648h-3zM509 624h3V648h-3zM511 607h3V648h-3zM514 611h2V648h-2zM516 622h2V648h-2zM518 620h2V648h-2zM520 634h3V648h-3zM522 638h3V648h-3zM525 626h2V648h-2zM527 628h2V648h-2zM529 628h2V648h-2zM531 636h3V648h-3zM533 636h3V648h-3zM535 603h3V648h-3zM538 628h2V648h-2zM540 611h2V648h-2zM542 609h2V648h-2zM544 628h3V648h-3zM546 642h3V648h-3zM548 634h3V648h-3zM550 636h3V648h-3zM553 622h2V648h-2zM555 628h2V648h-2zM557 613h3V648h-3zM559 587h3V648h-3zM561 640h3V648h-3zM564 632h2V648h-2zM566 634h2V648h-2zM568 638h3V648h-3zM570 636h3V648h-3zM572 644h3V648h-3zM575 638h2V648h-2zM577 620h2V648h-2zM579 636h2V648h-2zM581 587h3V648h-3zM583 626h3V648h-3zM585 634h3V648h-3zM588 638h2V648h-2zM590 632h2V648h-2zM592 622h2V648h-2zM594 634h3V648h-3zM596 642h3V648h-3zM598 622h3V648h-3zM601 632h2V648h-2zM603 636h2V648h-2zM605 618h2V648h-2zM607 624h3V648h-3zM609 620h3V648h-3zM612 636h2V648h-2zM614 630h2V648h-2zM616 630h2V648h-2zM618 634h3V648h-3zM620 626h3V648h-3zM622 523h3V648h-3zM625 642h2V648h-2zM627 611h2V648h-2zM629 636h2V648h-2zM631 626h3V648h-3zM633 644h3V648h-3zM635 642h3V648h-3zM638 634h2V648h-2zM639 624h3V648h-3zM642 634h3V648h-3zM644 640h3V648h-3zM646 595h3V648h-3zM649 642h2V648h-2zM651 646h2V648h-2zM653 580h2V648h-2zM655 636h3V648h-3zM657 642h3V648h-3zM659 640h3V648h-3zM662 628h2V648h-2zM664 636h2V648h-2zM666 589h2V648h-2zM668 620h3V648h-3zM670 634h3V648h-3zM672 640h3V648h-3zM675 630h2V648h-2zM677 640h2V648h-2zM679 615h3V648h-3zM681 636h3V648h-3zM683 618h3V648h-3zM686 638h2V648h-2zM688 634h2V648h-2zM690 613h2V648h-2zM692 634h3V648h-3zM694 618h3V648h-3zM696 636h3V648h-3zM699 640h2V648h-2zM701 634h2V648h-2zM703 632h2V648h-2zM705 613h3V648h-3zM707 628h3V648h-3zM709 626h3V648h-3zM712 624h2V648h-2zM714 586h2V648h-2zM716 615h3V648h-3zM718 626h3V648h-3zM720 620h3V648h-3zM723 632h2V648h-2zM725 622h2V648h-2zM727 618h2V648h-2zM729 634h3V648h-3zM731 620h3V648h-3zM733 618h3V648h-3zM736 630h2V648h-2zM738 628h2V648h-2zM740 644h2V648h-2zM742 636h3V648h-3zM744 636h3V648h-3zM746 596h3V648h-3zM749 634h2V648h-2zM751 644h2V648h-2zM753 642h3V648h-3zM755 632h3V648h-3zM757 644h3V648h-3zM760 630h2V648h-2zM762 632h4V648h-4zM766 638h3V648h-3zM768 626h3V648h-3zM770 644h3V648h-3zM773 636h2V648h-2zM775 634h2V648h-2zM777 640h2V648h-2zM779 598h3V648h-3zM781 624h3V648h-3zM783 636h3V648h-3zM786 614h2V648h-2zM788 620h2V648h-2zM790 630h3V648h-3zM792 638h3V648h-3zM794 621h3V648h-3zM797 610h2V648h-2zM799 636h2V648h-2zM801 644h2V648h-2zM803 638h3V648h-3zM805 632h3V648h-3zM807 638h3V648h-3zM810 617h2V648h-2zM812 636h2V648h-2zM814 642h2V648h-2zM816 625h3V648h-3zM818 625h3V648h-3zM820 612h3V648h-3zM823 624h2V648h-2zM825 638h4V648h-4zM829 630h3V648h-3zM831 642h3V648h-3zM834 642h2V648h-2zM836 636h2V648h-2zM838 634h2V648h-2zM840 630h3V648h-3zM842 642h3V648h-3zM844 638h3V648h-3zM847 644h2V648h-2zM849 634h2V648h-2zM851 642h2V648h-2zM853 583h3V648h-3zM855 630h3V648h-3zM857 638h3V648h-3zM860 612h2V648h-2zM862 640h2V648h-2zM864 621h3V648h-3zM866 623h3V648h-3zM868 640h3V648h-3zM871 625h2V648h-2zM873 640h2V648h-2zM875 632h2V648h-2zM877 640h3V648h-3zM881 644h3V648h-3zM884 636h2V648h-2zM886 642h2V648h-2zM888 619h2V648h-2zM890 632h3V648h-3zM892 608h3V648h-3zM894 619h3V648h-3zM897 635h2V648h-2zM899 644h2V648h-2zM901 638h3V648h-3zM903 633h3V648h-3zM905 642h3V648h-3zM908 638h2V648h-2zM910 635h2V648h-2zM912 640h2V648h-2zM914 611h3V648h-3zM916 625h3V648h-3zM918 644h3V648h-3zM921 627h2V648h-2zM923 635h2V648h-2zM925 631h2V648h-2zM927 626h3V648h-3zM929 633h3V648h-3zM931 633h3V648h-3zM934 602h2V648h-2zM936 626h2V648h-2zM938 635h3V648h-3z"/>
<path fill="#800000" d="M67 591h3V603h-3zM70 591h2V608h-2zM72 619h2V625h-2zM74 627h3V630h-3zM76 612h3V621h-3zM78 621h3V625h-3zM81 614h2V621h-2zM83 621h2V627h-2zM85 621h2V630h-2zM87 625h3V628h-3zM89 580h3V594h-3zM91 594h3V606h-3zM94 610h2V627h-2zM96 520h2V557h-2zM98 625h2V630h-2zM100 621h3V636h-3zM102 634h3V638h-3zM104 602h3V616h-3zM107 628h2V632h-2zM109 574h2V594h-2zM111 591h3V594h-3zM113 614h5V625h-5zM118 619h2V623h-2zM120 608h2V622h-2zM122 610h2V619h-2zM124 633h3V634h-3zM126 593h3V607h-3zM128 608h3V612h-3zM131 599h2V608h-2zM133 602h2V619h-2zM135 593h2V606h-2zM137 478h3V525h-3zM139 600h3V606h-3zM141 606h3V616h-3zM144 644h2V646h-2zM148 612h3V625h-3zM150 625h3V628h-3zM152 625h3V634h-3zM155 606h2V621h-2zM157 602h2V608h-2zM159 576h2V594h-2zM161 621h3V623h-3zM165 623h3V628h-3zM168 610h2V617h-2zM170 598h2V616h-2zM172 626h2V634h-2zM174 576h3V594h-3zM176 608h3V619h-3zM178 621h3V628h-3zM181 594h4V606h-4zM185 628h3V634h-3zM187 636h3V638h-3zM189 616h3V626h-3zM192 612h2V630h-2zM194 614h2V623h-2zM196 596h2V606h-2zM198 590h3V602h-3zM200 598h3V606h-3zM202 619h3V626h-3zM205 621h2V630h-2zM207 606h2V625h-2zM209 596h2V619h-2zM211 604h3V621h-3zM213 621h3V625h-3zM215 580h3V598h-3zM218 619h2V623h-2zM220 616h2V625h-2zM222 614h3V628h-3zM224 642h3V644h-3zM226 619h3V626h-3zM229 602h2V614h-2zM231 621h2V623h-2zM233 625h2V633h-2zM235 634h3V638h-3zM237 628h3V632h-3zM239 614h3V621h-3zM242 532h2V551h-2zM244 572h2V590h-2zM246 619h2V621h-2zM248 616h3V626h-3zM252 588h3V614h-3zM255 628h2V632h-2zM257 628h2V632h-2zM259 608h3V621h-3zM261 622h3V630h-3zM263 630h3V634h-3zM266 598h2V614h-2zM268 602h2V604h-2zM270 630h2V634h-2zM272 590h3V602h-3zM275 590h2V612h-2zM276 630h3V638h-3zM279 610h2V625h-2zM281 625h2V630h-2zM283 619h2V626h-2zM287 606h3V616h-3zM289 623h5V626h-5zM294 612h2V622h-2zM296 583h3V610h-3zM298 630h3V632h-3zM300 622h3V625h-3zM303 606h2V625h-2zM305 600h2V606h-2zM307 638h2V640h-2zM309 598h3V600h-3zM311 583h3V614h-3zM313 621h3V626h-3zM316 624h2V632h-2zM318 612h2V619h-2zM320 634h2V640h-2zM322 604h3V619h-3zM324 640h3V644h-3zM326 619h3V626h-3zM329 614h2V616h-2zM331 623h2V630h-2zM333 608h3V612h-3zM335 626h3V630h-3zM337 616h3V622h-3zM340 608h2V621h-2zM342 610h2V624h-2zM344 621h2V622h-2zM346 632h3V636h-3zM348 598h3V620h-3zM350 628h3V632h-3zM353 612h2V619h-2zM355 632h2V636h-2zM357 632h2V638h-2zM366 592h2V608h-2zM368 636h2V644h-2zM370 622h3V630h-3zM372 636h3V640h-3zM374 596h3V608h-3zM377 614h2V626h-2zM379 583h2V602h-2zM381 594h2V604h-2zM383 630h3V634h-3zM385 604h3V610h-3zM387 602h3V614h-3zM390 590h2V602h-2zM392 606h2V620h-2zM394 620h2V622h-2zM396 640h3V644h-3zM398 614h3V622h-3zM400 618h5V632h-5zM405 626h2V634h-2zM407 620h3V624h-3zM409 618h3V626h-3zM411 610h3V622h-3zM414 622h2V628h-2zM416 642h2V646h-2zM418 632h2V634h-2zM420 626h3V628h-3zM422 634h3V638h-3zM424 632h3V638h-3zM427 620h2V634h-2zM429 638h2V642h-2zM431 615h2V624h-2zM433 596h3V608h-3zM435 613h3V626h-3zM437 638h3V640h-3zM440 636h2V638h-2zM442 628h2V634h-2zM444 604h3V613h-3zM446 600h3V611h-3zM448 615h3V620h-3zM451 618h2V620h-2zM453 608h2V626h-2zM455 509h2V536h-2zM457 630h3V636h-3zM459 613h3V620h-3zM461 597h3V611h-3zM464 620h2V628h-2zM466 638h2V640h-2zM468 624h2V628h-2zM470 632h3V634h-3zM472 609h3V620h-3zM474 599h3V615h-3zM477 632h2V634h-2zM479 603h2V620h-2zM481 620h2V622h-2zM483 630h3V632h-3zM485 628h3V636h-3zM488 624h2V632h-2zM490 597h2V609h-2zM492 642h2V644h-2zM494 638h3V640h-3zM498 585h3V597h-3zM501 611h2V618h-2zM503 620h2V630h-2zM505 615h2V624h-2zM507 573h3V589h-3zM509 613h3V624h-3zM511 599h3V607h-3zM514 601h2V611h-2zM516 599h2V622h-2zM518 611h2V620h-2zM520 632h3V634h-3zM525 624h2V626h-2zM527 618h2V628h-2zM529 622h2V628h-2zM531 634h3V636h-3zM533 622h3V636h-3zM535 595h3V603h-3zM538 620h2V628h-2zM540 605h2V611h-2zM542 607h2V609h-2zM544 626h3V628h-3zM546 640h3V642h-3zM548 628h3V634h-3zM550 632h3V636h-3zM553 611h2V622h-2zM555 620h2V628h-2zM557 605h3V613h-3zM559 572h3V587h-3zM564 622h2V632h-2zM568 636h3V638h-3zM570 630h3V636h-3zM572 642h3V644h-3zM577 618h2V620h-2zM579 628h2V636h-2zM581 572h3V587h-3zM583 620h3V626h-3zM585 630h3V634h-3zM588 630h2V638h-2zM590 628h2V632h-2zM592 618h2V622h-2zM594 632h3V634h-3zM596 638h3V642h-3zM598 615h3V622h-3zM601 630h2V632h-2zM603 634h2V636h-2zM605 615h2V618h-2zM607 613h3V624h-3zM609 615h3V620h-3zM612 634h2V636h-2zM614 624h2V630h-2zM616 624h2V630h-2zM618 620h3V634h-3zM620 615h3V626h-3zM622 469h3V523h-3zM625 640h2V642h-2zM627 597h2V611h-2zM629 632h2V636h-2zM631 618h3V626h-3zM633 638h3V644h-3zM635 636h3V642h-3zM638 622h2V634h-2zM639 622h3V624h-3zM642 632h3V634h-3zM644 620h3V640h-3zM646 582h3V595h-3zM649 636h2V642h-2zM651 642h2V646h-2zM653 554h2V580h-2zM655 634h3V636h-3zM657 640h3V642h-3zM659 632h3V640h-3zM662 611h2V628h-2zM664 632h2V636h-2zM666 564h2V589h-2zM668 593h3V620h-3zM670 632h3V634h-3zM672 638h3V640h-3zM677 634h2V640h-2zM679 607h3V615h-3zM681 628h3V636h-3zM683 613h3V618h-3zM686 634h2V638h-2zM688 632h2V634h-2zM690 603h2V613h-2zM692 632h3V634h-3zM694 611h3V618h-3zM696 634h3V636h-3zM701 626h2V634h-2zM703 630h2V632h-2zM705 607h3V613h-3zM707 620h3V628h-3zM709 620h3V626h-3zM712 618h2V624h-2zM714 542h2V586h-2zM716 607h3V615h-3zM718 615h3V626h-3zM720 609h3V620h-3zM723 628h2V632h-2zM725 613h2V622h-2zM727 605h2V618h-2zM729 628h3V634h-3zM731 610h3V620h-3zM733 605h3V618h-3zM736 626h2V630h-2zM738 620h2V628h-2zM740 642h2V644h-2zM742 630h3V636h-3zM744 632h3V636h-3zM746 581h3V596h-3zM749 630h2V634h-2zM753 638h3V642h-3zM757 640h3V644h-3zM760 622h2V630h-2zM762 630h4V632h-4zM766 636h3V638h-3zM768 621h3V626h-3zM770 636h3V644h-3zM773 626h2V636h-2zM775 630h2V634h-2zM777 638h2V640h-2zM779 567h3V598h-3zM781 610h3V624h-3zM783 634h3V636h-3zM786 608h2V614h-2zM788 614h2V620h-2zM790 624h3V630h-3zM792 634h3V638h-3zM794 612h3V621h-3zM797 602h2V610h-2zM799 630h2V636h-2zM803 636h3V638h-3zM805 627h3V632h-3zM807 634h3V638h-3zM810 606h2V617h-2zM812 632h2V636h-2zM814 632h2V642h-2zM816 612h3V625h-3zM818 617h3V625h-3zM820 604h3V612h-3zM823 612h2V624h-2zM825 636h4V638h-4zM829 627h3V630h-3zM834 634h2V642h-2zM838 630h2V634h-2zM840 627h3V630h-3zM842 638h3V642h-3zM844 627h3V638h-3zM847 642h2V644h-2zM849 630h2V634h-2zM851 636h2V642h-2zM853 566h3V583h-3zM855 617h3V630h-3zM857 632h3V638h-3zM860 600h2V612h-2zM862 638h2V640h-2zM864 612h3V621h-3zM866 617h3V623h-3zM868 638h3V640h-3zM871 619h2V625h-2zM873 636h2V640h-2zM875 625h2V632h-2zM877 638h3V640h-3zM879 646h3V648h-3zM881 642h3V644h-3zM884 627h2V636h-2zM888 614h2V619h-2zM892 604h3V608h-3zM894 610h3V619h-3zM897 627h2V635h-2zM899 642h2V644h-2zM901 629h3V638h-3zM903 625h3V633h-3zM905 638h3V642h-3zM908 633h2V638h-2zM910 629h2V635h-2zM912 633h2V640h-2zM914 597h3V611h-3zM916 617h3V625h-3zM918 642h3V644h-3zM921 618h2V627h-2zM923 627h2V635h-2zM925 629h2V631h-2zM927 624h3V626h-3zM931 620h3V633h-3zM934 587h2V602h-2zM936 624h2V626h-2zM938 633h3V635h-3z"/>
<path fill="#40ff40" d="M67 586h3V591h-3zM70 583h2V591h-2zM72 613h2V619h-2zM74 624h3V627h-3zM76 594h3V612h-3zM78 620h3V621h-3zM81 613h2V614h-2zM83 615h2V621h-2zM85 618h2V621h-2zM87 622h3V625h-3zM89 573h3V580h-3zM91 592h3V594h-3zM94 607h2V610h-2zM96 515h2V520h-2zM98 622h2V625h-2zM100 613h3V621h-3zM102 631h3V634h-3zM104 597h3V602h-3zM107 624h2V628h-2zM109 571h2V574h-2zM111 586h3V591h-3zM113 611h5V614h-5zM118 615h2V619h-2zM120 607h2V608h-2zM122 607h2V610h-2zM124 626h3V633h-3zM126 590h3V593h-3zM128 607h3V608h-3zM131 592h2V599h-2zM133 599h2V602h-2zM135 588h2V593h-2zM137 469h3V478h-3zM139 599h3V600h-3zM141 603h3V606h-3zM144 643h2V644h-2zM146 641h2V642h-2zM148 609h3V612h-3zM150 622h3V625h-3zM152 622h3V625h-3zM155 599h2V606h-2zM157 599h2V602h-2zM159 573h2V576h-2zM161 615h3V621h-3zM163 633h3V636h-3zM165 620h3V623h-3zM168 603h2V610h-2zM170 592h2V598h-2zM172 622h2V626h-2zM174 573h3V576h-3zM176 605h3V608h-3zM178 611h3V621h-3zM181 586h4V594h-4zM185 624h3V628h-3zM187 633h3V636h-3zM189 611h3V616h-3zM192 605h2V612h-2zM194 609h2V614h-2zM196 591h2V596h-2zM198 587h3V590h-3zM200 591h3V598h-3zM202 618h3V619h-3zM205 611h2V621h-2zM207 603h2V606h-2zM209 594h2V596h-2zM211 591h3V604h-3zM213 618h3V621h-3zM215 577h3V580h-3zM218 611h2V619h-2zM220 609h2V616h-2zM222 609h3V614h-3zM224 635h3V642h-3zM226 613h3V619h-3zM229 601h2V602h-2zM231 618h2V621h-2zM233 622h2V625h-2zM235 631h3V634h-3zM239 613h3V614h-3zM242 527h2V532h-2zM244 567h2V572h-2zM246 615h2V619h-2zM248 613h3V616h-3zM250 635h3V638h-3zM252 582h3V588h-3zM257 624h2V628h-2zM259 607h3V608h-3zM261 618h3V622h-3zM263 628h3V630h-3zM266 591h2V598h-2zM268 599h2V602h-2zM270 628h2V630h-2zM272 581h3V590h-3zM275 582h2V590h-2zM276 624h3V630h-3zM279 605h2V610h-2zM281 622h2V625h-2zM283 615h2V619h-2zM285 637h3V640h-3zM287 601h3V606h-3zM289 613h5V623h-5zM294 607h2V612h-2zM296 577h3V583h-3zM298 625h3V630h-3zM300 618h3V622h-3zM303 599h2V606h-2zM305 591h2V600h-2zM307 633h2V638h-2zM309 595h3V598h-3zM311 580h3V583h-3zM313 615h3V621h-3zM316 622h2V624h-2zM318 605h2V612h-2zM320 629h2V634h-2zM322 601h3V604h-3zM324 637h3V640h-3zM326 609h3V619h-3zM329 607h2V614h-2zM331 615h2V623h-2zM333 607h3V608h-3zM335 622h3V626h-3zM337 611h3V616h-3zM340 603h2V608h-2zM342 603h2V610h-2zM344 620h2V621h-2zM346 629h3V632h-3zM348 595h3V598h-3zM350 625h3V628h-3zM353 611h2V612h-2zM355 631h2V632h-2zM357 627h2V632h-2zM359 635h3V640h-3zM361 627h5V630h-5zM366 589h2V592h-2zM368 633h2V636h-2zM370 619h3V622h-3zM372 633h3V636h-3zM374 591h3V596h-3zM377 611h2V614h-2zM379 572h2V583h-2zM381 591h2V594h-2zM383 629h3V630h-3zM385 601h3V604h-3zM387 597h3V602h-3zM390 582h2V590h-2zM392 601h2V606h-2zM394 615h2V620h-2zM396 637h3V640h-3zM398 606h3V614h-3zM400 613h5V618h-5zM405 623h2V626h-2zM407 618h3V620h-3zM409 614h3V618h-3zM411 606h3V610h-3zM414 614h2V622h-2zM416 641h2V642h-2zM418 629h2V632h-2zM420 623h3V626h-3zM422 633h3V634h-3zM424 629h3V632h-3zM427 618h2V620h-2zM429 635h2V638h-2zM431 608h2V615h-2zM433 593h3V596h-3zM435 610h3V613h-3zM437 637h3V638h-3zM440 631h2V636h-2zM442 625h2V628h-2zM444 599h3V604h-3zM446 593h3V600h-3zM448 613h3V615h-3zM451 614h2V618h-2zM453 606h2V608h-2zM455 501h2V509h-2zM457 627h3V630h-3zM459 610h3V613h-3zM461 595h3V597h-3zM464 612h2V620h-2zM466 635h2V638h-2zM468 619h2V624h-2zM470 625h3V632h-3zM472 604h3V609h-3zM474 598h3V599h-3zM477 631h2V632h-2zM479 598h2V603h-2zM481 619h2V620h-2zM483 627h3V630h-3zM485 625h3V628h-3zM488 617h2V624h-2zM490 588h2V597h-2zM492 637h2V642h-2zM494 635h3V638h-3zM496 633h3V636h-3zM498 580h3V585h-3zM501 606h2V611h-2zM503 617h2V620h-2zM505 614h2V615h-2zM507 570h3V573h-3zM509 610h3V613h-3zM511 596h3V599h-3zM514 600h2V601h-2zM516 592h2V599h-2zM518 608h2V611h-2zM520 627h3V632h-3zM522 637h3V638h-3zM525 623h2V624h-2zM527 617h2V618h-2zM529 619h2V622h-2zM531 627h3V634h-3zM533 617h3V622h-3zM535 592h3V595h-3zM538 614h2V620h-2zM540 602h2V605h-2zM542 602h2V607h-2zM544 623h3V626h-3zM546 637h3V640h-3zM548 625h3V628h-3zM550 627h3V632h-3zM553 606h2V611h-2zM555 612h2V620h-2zM557 600h3V605h-3zM559 565h3V572h-3zM561 637h3V640h-3zM564 617h2V622h-2zM566 631h2V634h-2zM568 633h3V636h-3zM570 627h3V630h-3zM572 639h3V642h-3zM575 635h2V638h-2zM577 614h2V618h-2zM579 625h2V628h-2zM581 567h3V572h-3zM583 614h3V620h-3zM585 627h3V630h-3zM588 627h2V630h-2zM590 625h2V628h-2zM592 614h2V618h-2zM594 631h3V632h-3zM596 635h3V638h-3zM598 610h3V615h-3zM601 627h2V630h-2zM603 631h2V634h-2zM605 614h2V615h-2zM607 610h3V613h-3zM609 610h3V615h-3zM612 631h2V634h-2zM614 621h2V624h-2zM616 623h2V624h-2zM618 612h3V620h-3zM620 608h3V615h-3zM622 464h3V469h-3zM625 639h2V640h-2zM627 594h2V597h-2zM629 631h2V632h-2zM631 614h3V618h-3zM633 637h3V638h-3zM635 633h3V636h-3zM638 614h2V622h-2zM639 619h3V622h-3zM642 631h3V632h-3zM644 617h3V620h-3zM646 577h3V582h-3zM649 635h2V636h-2zM651 639h2V642h-2zM653 553h2V554h-2zM655 631h3V634h-3zM657 637h3V640h-3zM659 629h3V632h-3zM662 608h2V611h-2zM664 627h2V632h-2zM666 559h2V564h-2zM668 590h3V593h-3zM670 629h3V632h-3zM672 635h3V638h-3zM675 625h2V630h-2zM677 629h2V634h-2zM679 604h3V607h-3zM681 623h3V628h-3zM683 610h3V613h-3zM686 631h2V634h-2zM688 627h2V632h-2zM690 598h2V603h-2zM692 629h3V632h-3zM694 608h3V611h-3zM696 631h3V634h-3zM699 637h2V640h-2zM701 623h2V626h-2zM703 627h2V630h-2zM705 602h3V607h-3zM707 614h3V620h-3zM709 612h3V620h-3zM712 614h2V618h-2zM714 537h2V542h-2zM716 604h3V607h-3zM718 610h3V615h-3zM720 604h3V609h-3zM723 625h2V628h-2zM725 610h2V613h-2zM727 600h2V605h-2zM729 625h3V628h-3zM731 605h3V610h-3zM733 602h3V605h-3zM736 621h2V626h-2zM738 617h2V620h-2zM740 639h2V642h-2zM742 629h3V630h-3zM744 629h3V632h-3zM746 578h3V581h-3zM749 629h2V630h-2zM751 641h2V644h-2zM753 635h3V638h-3zM755 629h3V632h-3zM757 639h3V640h-3zM760 619h2V622h-2zM762 627h4V630h-4zM766 633h3V636h-3zM768 619h3V621h-3zM770 633h3V636h-3zM773 625h2V626h-2zM775 627h2V630h-2zM777 637h2V638h-2zM779 564h3V567h-3zM781 609h3V610h-3zM783 631h3V634h-3zM786 605h2V608h-2zM788 612h2V614h-2zM790 623h3V624h-3zM792 631h3V634h-3zM794 607h3V612h-3zM797 599h2V602h-2zM799 627h2V630h-2zM801 643h2V644h-2zM803 627h3V636h-3zM805 625h3V627h-3zM807 629h3V634h-3zM810 603h2V606h-2zM812 629h2V632h-2zM814 631h2V632h-2zM816 611h3V612h-3zM818 613h3V617h-3zM820 601h3V604h-3zM823 607h2V612h-2zM825 635h4V636h-4zM829 616h3V627h-3zM831 639h3V642h-3zM834 629h2V634h-2zM836 633h2V636h-2zM838 627h2V630h-2zM840 622h3V627h-3zM842 635h3V638h-3zM844 624h3V627h-3zM847 637h2V642h-2zM849 627h2V630h-2zM851 630h2V636h-2zM853 565h3V566h-3zM855 613h3V617h-3zM857 627h3V632h-3zM860 595h2V600h-2zM862 635h2V638h-2zM864 609h3V612h-3zM866 613h3V617h-3zM868 635h3V638h-3zM871 616h2V619h-2zM873 633h2V636h-2zM875 622h2V625h-2zM877 633h3V638h-3zM879 643h3V646h-3zM881 639h3V642h-3zM884 624h2V627h-2zM886 641h2V642h-2zM888 609h2V614h-2zM890 628h3V632h-3zM892 599h3V604h-3zM894 607h3V610h-3zM897 624h2V627h-2zM899 641h2V642h-2zM901 626h3V629h-3zM903 620h3V625h-3zM905 634h3V638h-3zM908 624h2V633h-2zM910 624h2V629h-2zM912 630h2V633h-2zM914 590h3V597h-3zM916 612h3V617h-3zM918 639h3V642h-3zM921 612h2V618h-2zM923 620h2V627h-2zM925 626h2V629h-2zM927 621h3V624h-3zM929 628h3V633h-3zM931 617h3V620h-3zM934 584h2V587h-2zM936 621h2V624h-2zM938 628h3V633h-3z"/>
<path fill="#000" d="M66 446h876v1h-876zM66 648h876v1h-876zM66 446h1v203h-1zM941 446h1v203h-1z"/>
<g filter="url(#b5)">
<text x="62.3" y="220" font-size="11" text-anchor="end">0</text><text x="62.3" y="178" font-size="11" text-anchor="end">20</text><text x="62.3" y="137" font-size="11" text-anchor="end">40</text><text x="62.3" y="96" font-size="11" text-anchor="end">60</text><text x="62.3" y="54" font-size="11" text-anchor="end">80</text><text x="62.3" y="436" font-size="11" text-anchor="end">0</text><text x="62.3" y="405" font-size="11" text-anchor="end">5</text><text x="62.3" y="375" font-size="11" text-anchor="end">10</text><text x="62.3" y="345" font-size="11" text-anchor="end">15</text><text x="62.3" y="315" font-size="11" text-anchor="end">20</text><text x="62.3" y="285" font-size="11" text-anchor="end">25</text><text x="62.3" y="255" font-size="11" text-anchor="end">30</text><text x="62.3" y="652" font-size="11" text-anchor="end">0</text><text x="62.3" y="622" font-size="11" text-anchor="end">0.5</text><text x="62.3" y="592" font-size="11" text-anchor="end">1</text><text x="62.3" y="562" font-size="11" text-anchor="end">1.5</text><text x="62.3" y="532" font-size="11" text-anchor="end">2</text><text x="62.3" y="502" font-size="11" text-anchor="end">2.5</text><text x="62.3" y="472" font-size="11" text-anchor="end">3</text>
</g>
<g filter="url(#bin)">
<text transform="translate(37 116) rotate(-90)" font-size="19" text-anchor="middle" stroke="#000" stroke-width="0.12"># mutations</text>
<text transform="translate(36.4 334) rotate(-90)" font-size="19" text-anchor="middle" stroke="#000" stroke-width="0.12">Mb sequenced</text>
<text transform="translate(33.8 550.2) rotate(-90)" font-size="19" text-anchor="middle" stroke="#000" stroke-width="0.12">mutations / Mb</text>
<text x="818.5" y="40" font-size="14.5" font-weight="bold" style="fill:#40ff40">dbSNP</text>
<text x="818.5" y="60" font-size="14.5" font-weight="bold" style="fill:#800000">silent</text>
<text x="818.5" y="80" font-size="14.5" font-weight="bold" style="fill:#00008f">nonsilent</text>
</g>
<g font-size="14" text-anchor="end" text-rendering="geometricPrecision">
<g filter="url(#b2)">
<text transform="translate(74 666.9) rotate(-90) scale(1 1.16)">LUAD-G7-4837<tspan font-size="12" dx="0.5" dy="-0.7">-</tspan><tspan dy="0.7" textLength="10.05" lengthAdjust="spacingAndGlyphs">T</tspan><tspan dx="-0.75">P</tspan></text>
<text transform="translate(87 666.9) rotate(-90) scale(1 1.16)">LUAD-2B-AZTS<tspan font-size="12" dx="0.5" dy="-0.7">-</tspan><tspan dy="0.7" textLength="10.05" lengthAdjust="spacingAndGlyphs">T</tspan><tspan dx="-0.75">P</tspan></text>
<text transform="translate(100 666.9) rotate(-90) scale(1 1.16)">LUAD-80-4193<tspan font-size="12" dx="0.5" dy="-0.7">-</tspan><tspan dy="0.7" textLength="10.05" lengthAdjust="spacingAndGlyphs">T</tspan><tspan dx="-0.75">P</tspan></text>
<text transform="translate(113 666.9) rotate(-90) scale(1 1.16)">LUAD-H6-AFS6<tspan font-size="12" dx="0.5" dy="-0.7">-</tspan><tspan dy="0.7" textLength="10.05" lengthAdjust="spacingAndGlyphs">T</tspan><tspan dx="-0.75">P</tspan></text>
<text transform="translate(126 666.9) rotate(-90) scale(1 1.16)">LUAD-E0-ALZK<tspan font-size="12" dx="0.5" dy="-0.7">-</tspan><tspan dy="0.7" textLength="10.05" lengthAdjust="spacingAndGlyphs">T</tspan><tspan dx="-0.75">P</tspan></text>
<text transform="translate(139 666.9) rotate(-90) scale(1 1.16)">LUAD-JC-7249<tspan font-size="12" dx="0.5" dy="-0.7">-</tspan><tspan dy="0.7" textLength="10.05" lengthAdjust="spacingAndGlyphs">T</tspan><tspan dx="-0.75">P</tspan></text>
<text transform="translate(152 666.9) rotate(-90) scale(1 1.16)">LUAD-2G-AUG4<tspan font-size="12" dx="0.5" dy="-0.7">-</tspan><tspan dy="0.7" textLength="10.05" lengthAdjust="spacingAndGlyphs">T</tspan><tspan dx="-0.75">P</tspan></text>
<text transform="translate(165 666.9) rotate(-90) scale(1 1.16)">LUAD-3H-A5U1<tspan font-size="12" dx="0.5" dy="-0.7">-</tspan><tspan dy="0.7" textLength="10.05" lengthAdjust="spacingAndGlyphs">T</tspan><tspan dx="-0.75">P</tspan></text>
<text transform="translate(178 666.9) rotate(-90) scale(1 1.16)">LUAD-94-AOK7<tspan font-size="12" dx="0.5" dy="-0.7">-</tspan><tspan dy="0.7" textLength="10.05" lengthAdjust="spacingAndGlyphs">T</tspan><tspan dx="-0.75">P</tspan></text>
<text transform="translate(191 666.9) rotate(-90) scale(1 1.16)">LUAD-D0-6883<tspan font-size="12" dx="0.5" dy="-0.7">-</tspan><tspan dy="0.7" textLength="10.05" lengthAdjust="spacingAndGlyphs">T</tspan><tspan dx="-0.75">P</tspan></text>
<text transform="translate(204 666.9) rotate(-90) scale(1 1.16)">LUAD-7E-7628<tspan font-size="12" dx="0.5" dy="-0.7">-</tspan><tspan dy="0.7" textLength="10.05" lengthAdjust="spacingAndGlyphs">T</tspan><tspan dx="-0.75">P</tspan></text>
<text transform="translate(217 666.9) rotate(-90) scale(1 1.16)">LUAD-ED-0206<tspan font-size="12" dx="0.5" dy="-0.7">-</tspan><tspan dy="0.7" textLength="10.05" lengthAdjust="spacingAndGlyphs">T</tspan><tspan dx="-0.75">P</tspan></text>
<text transform="translate(230 666.9) rotate(-90) scale(1 1.16)">LUAD-29-ACOG<tspan font-size="12" dx="0.5" dy="-0.7">-</tspan><tspan dy="0.7" textLength="10.05" lengthAdjust="spacingAndGlyphs">T</tspan><tspan dx="-0.75">P</tspan></text>
<text transform="translate(243 666.9) rotate(-90) scale(1 1.16)">LUAD-DB-3048<tspan font-size="12" dx="0.5" dy="-0.7">-</tspan><tspan dy="0.7" textLength="10.05" lengthAdjust="spacingAndGlyphs">T</tspan><tspan dx="-0.75">P</tspan></text>
<text transform="translate(256 666.9) rotate(-90) scale(1 1.16)">LUAD-25-ABXT<tspan font-size="12" dx="0.5" dy="-0.7">-</tspan><tspan dy="0.7" textLength="10.05" lengthAdjust="spacingAndGlyphs">T</tspan><tspan dx="-0.75">P</tspan></text>
<text transform="translate(269 666.9) rotate(-90) scale(1 1.16)">LUAD-D7-6060<tspan font-size="12" dx="0.5" dy="-0.7">-</tspan><tspan dy="0.7" textLength="10.05" lengthAdjust="spacingAndGlyphs">T</tspan><tspan dx="-0.75">P</tspan></text>
<text transform="translate(282 666.9) rotate(-90) scale(1 1.16)">LUAD-J7-AKTN<tspan font-size="12" dx="0.5" dy="-0.7">-</tspan><tspan dy="0.7" textLength="10.05" lengthAdjust="spacingAndGlyphs">T</tspan><tspan dx="-0.75">P</tspan></text>
<text transform="translate(295 666.9) rotate(-90) scale(1 1.16)">LUAD-99-AHNG<tspan font-size="12" dx="0.5" dy="-0.7">-</tspan><tspan dy="0.7" textLength="10.05" lengthAdjust="spacingAndGlyphs">T</tspan><tspan dx="-0.75">P</tspan></text>
<text transform="translate(308 666.9) rotate(-90) scale(1 1.16)">LUAD-JI-A4NW<tspan font-size="12" dx="0.5" dy="-0.7">-</tspan><tspan dy="0.7" textLength="10.05" lengthAdjust="spacingAndGlyphs">T</tspan><tspan dx="-0.75">P</tspan></text>
<text transform="translate(321 666.9) rotate(-90) scale(1 1.16)">LUAD-CH-AY5A<tspan font-size="12" dx="0.5" dy="-0.7">-</tspan><tspan dy="0.7" textLength="10.05" lengthAdjust="spacingAndGlyphs">T</tspan><tspan dx="-0.75">P</tspan></text>
<text transform="translate(334 666.9) rotate(-90) scale(1 1.16)">LUAD-C2-ANWA<tspan font-size="12" dx="0.5" dy="-0.7">-</tspan><tspan dy="0.7" textLength="10.05" lengthAdjust="spacingAndGlyphs">T</tspan><tspan dx="-0.75">P</tspan></text>
<text transform="translate(347 666.9) rotate(-90) scale(1 1.16)">LUAD-B3-AC2Z<tspan font-size="12" dx="0.5" dy="-0.7">-</tspan><tspan dy="0.7" textLength="10.05" lengthAdjust="spacingAndGlyphs">T</tspan><tspan dx="-0.75">P</tspan></text>
<text transform="translate(360 666.9) rotate(-90) scale(1 1.16)">LUAD-2E-A228<tspan font-size="12" dx="0.5" dy="-0.7">-</tspan><tspan dy="0.7" textLength="10.05" lengthAdjust="spacingAndGlyphs">T</tspan><tspan dx="-0.75">P</tspan></text>
<text transform="translate(373 666.9) rotate(-90) scale(1 1.16)">LUAD-JG-AN2C<tspan font-size="12" dx="0.5" dy="-0.7">-</tspan><tspan dy="0.7" textLength="10.05" lengthAdjust="spacingAndGlyphs">T</tspan><tspan dx="-0.75">P</tspan></text>
<text transform="translate(386 666.9) rotate(-90) scale(1 1.16)">LUAD-G8-AK02<tspan font-size="12" dx="0.5" dy="-0.7">-</tspan><tspan dy="0.7" textLength="10.05" lengthAdjust="spacingAndGlyphs">T</tspan><tspan dx="-0.75">P</tspan></text>
<text transform="translate(399 666.9) rotate(-90) scale(1 1.16)">LUAD-4E-A9HP<tspan font-size="12" dx="0.5" dy="-0.7">-</tspan><tspan dy="0.7" textLength="10.05" lengthAdjust="spacingAndGlyphs">T</tspan><tspan dx="-0.75">P</tspan></text>
<text transform="translate(412 666.9) rotate(-90) scale(1 1.16)">LUAD-G9-A3UY<tspan font-size="12" dx="0.5" dy="-0.7">-</tspan><tspan dy="0.7" textLength="10.05" lengthAdjust="spacingAndGlyphs">T</tspan><tspan dx="-0.75">P</tspan></text>
<text transform="translate(425 666.9) rotate(-90) scale(1 1.16)">LUAD-CA-6877<tspan font-size="12" dx="0.5" dy="-0.7">-</tspan><tspan dy="0.7" textLength="10.05" lengthAdjust="spacingAndGlyphs">T</tspan><tspan dx="-0.75">P</tspan></text>
<text transform="translate(438 666.9) rotate(-90) scale(1 1.16)">LUAD-37-A722<tspan font-size="12" dx="0.5" dy="-0.7">-</tspan><tspan dy="0.7" textLength="10.05" lengthAdjust="spacingAndGlyphs">T</tspan><tspan dx="-0.75">P</tspan></text>
<text transform="translate(451 666.9) rotate(-90) scale(1 1.16)">LUAD-2I-2608<tspan font-size="12" dx="0.5" dy="-0.7">-</tspan><tspan dy="0.7" textLength="10.05" lengthAdjust="spacingAndGlyphs">T</tspan><tspan dx="-0.75">P</tspan></text>
<text transform="translate(464 666.9) rotate(-90) scale(1 1.16)">LUAD-D0-AJGR<tspan font-size="12" dx="0.5" dy="-0.7">-</tspan><tspan dy="0.7" textLength="10.05" lengthAdjust="spacingAndGlyphs">T</tspan><tspan dx="-0.75">P</tspan></text>
<text transform="translate(477 666.9) rotate(-90) scale(1 1.16)">LUAD-9J-A9FK<tspan font-size="12" dx="0.5" dy="-0.7">-</tspan><tspan dy="0.7" textLength="10.05" lengthAdjust="spacingAndGlyphs">T</tspan><tspan dx="-0.75">P</tspan></text>
<text transform="translate(490 666.9) rotate(-90) scale(1 1.16)">LUAD-E0-AP0F<tspan font-size="12" dx="0.5" dy="-0.7">-</tspan><tspan dy="0.7" textLength="10.05" lengthAdjust="spacingAndGlyphs">T</tspan><tspan dx="-0.75">P</tspan></text>
<text transform="translate(503 666.9) rotate(-90) scale(1 1.16)">LUAD-65-3851<tspan font-size="12" dx="0.5" dy="-0.7">-</tspan><tspan dy="0.7" textLength="10.05" lengthAdjust="spacingAndGlyphs">T</tspan><tspan dx="-0.75">P</tspan></text>
<text transform="translate(516 666.9) rotate(-90) scale(1 1.16)">LUAD-79-8367<tspan font-size="12" dx="0.5" dy="-0.7">-</tspan><tspan dy="0.7" textLength="10.05" lengthAdjust="spacingAndGlyphs">T</tspan><tspan dx="-0.75">P</tspan></text>
<text transform="translate(529 666.9) rotate(-90) scale(1 1.16)">LUAD-J2-5246<tspan font-size="12" dx="0.5" dy="-0.7">-</tspan><tspan dy="0.7" textLength="10.05" lengthAdjust="spacingAndGlyphs">T</tspan><tspan dx="-0.75">P</tspan></text>
<text transform="translate(542 666.9) rotate(-90) scale(1 1.16)">LUAD-F6-AS7Z<tspan font-size="12" dx="0.5" dy="-0.7">-</tspan><tspan dy="0.7" textLength="10.05" lengthAdjust="spacingAndGlyphs">T</tspan><tspan dx="-0.75">P</tspan></text>
<text transform="translate(555 666.9) rotate(-90) scale(1 1.16)">LUAD-0J-AL6W<tspan font-size="12" dx="0.5" dy="-0.7">-</tspan><tspan dy="0.7" textLength="10.05" lengthAdjust="spacingAndGlyphs">T</tspan><tspan dx="-0.75">P</tspan></text>
<text transform="translate(568 666.9) rotate(-90) scale(1 1.16)">LUAD-6F-5354<tspan font-size="12" dx="0.5" dy="-0.7">-</tspan><tspan dy="0.7" textLength="10.05" lengthAdjust="spacingAndGlyphs">T</tspan><tspan dx="-0.75">P</tspan></text>
<text transform="translate(581 666.9) rotate(-90) scale(1 1.16)">LUAD-D3-0524<tspan font-size="12" dx="0.5" dy="-0.7">-</tspan><tspan dy="0.7" textLength="10.05" lengthAdjust="spacingAndGlyphs">T</tspan><tspan dx="-0.75">P</tspan></text>
<text transform="translate(594 666.9) rotate(-90) scale(1 1.16)">LUAD-0D-A75D<tspan font-size="12" dx="0.5" dy="-0.7">-</tspan><tspan dy="0.7" textLength="10.05" lengthAdjust="spacingAndGlyphs">T</tspan><tspan dx="-0.75">P</tspan></text>
<text transform="translate(607 666.9) rotate(-90) scale(1 1.16)">LUAD-BI-7221<tspan font-size="12" dx="0.5" dy="-0.7">-</tspan><tspan dy="0.7" textLength="10.05" lengthAdjust="spacingAndGlyphs">T</tspan><tspan dx="-0.75">P</tspan></text>
<text transform="translate(620 666.9) rotate(-90) scale(1 1.16)">LUAD-I1-A99H<tspan font-size="12" dx="0.5" dy="-0.7">-</tspan><tspan dy="0.7" textLength="10.05" lengthAdjust="spacingAndGlyphs">T</tspan><tspan dx="-0.75">P</tspan></text>
<text transform="translate(633 666.9) rotate(-90) scale(1 1.16)">LUAD-FG-ACDC<tspan font-size="12" dx="0.5" dy="-0.7">-</tspan><tspan dy="0.7" textLength="10.05" lengthAdjust="spacingAndGlyphs">T</tspan><tspan dx="-0.75">P</tspan></text>
<text transform="translate(646 666.9) rotate(-90) scale(1 1.16)">LUAD-8D-AS8G<tspan font-size="12" dx="0.5" dy="-0.7">-</tspan><tspan dy="0.7" textLength="10.05" lengthAdjust="spacingAndGlyphs">T</tspan><tspan dx="-0.75">P</tspan></text>
<text transform="translate(659 666.9) rotate(-90) scale(1 1.16)">LUAD-B1-0048<tspan font-size="12" dx="0.5" dy="-0.7">-</tspan><tspan dy="0.7" textLength="10.05" lengthAdjust="spacingAndGlyphs">T</tspan><tspan dx="-0.75">P</tspan></text>
<text transform="translate(672 666.9) rotate(-90) scale(1 1.16)">LUAD-4E-6017<tspan font-size="12" dx="0.5" dy="-0.7">-</tspan><tspan dy="0.7" textLength="10.05" lengthAdjust="spacingAndGlyphs">T</tspan><tspan dx="-0.75">P</tspan></text>
<text transform="translate(685 666.9) rotate(-90) scale(1 1.16)">LUAD-4G-ADZU<tspan font-size="12" dx="0.5" dy="-0.7">-</tspan><tspan dy="0.7" textLength="10.05" lengthAdjust="spacingAndGlyphs">T</tspan><tspan dx="-0.75">P</tspan></text>
<text transform="translate(698 666.9) rotate(-90) scale(1 1.16)">LUAD-8I-ABXE<tspan font-size="12" dx="0.5" dy="-0.7">-</tspan><tspan dy="0.7" textLength="10.05" lengthAdjust="spacingAndGlyphs">T</tspan><tspan dx="-0.75">P</tspan></text>
<text transform="translate(711 666.9) rotate(-90) scale(1 1.16)">LUAD-IB-AN0M<tspan font-size="12" dx="0.5" dy="-0.7">-</tspan><tspan dy="0.7" textLength="10.05" lengthAdjust="spacingAndGlyphs">T</tspan><tspan dx="-0.75">P</tspan></text>
<text transform="translate(724 666.9) rotate(-90) scale(1 1.16)">LUAD-68-ATXF<tspan font-size="12" dx="0.5" dy="-0.7">-</tspan><tspan dy="0.7" textLength="10.05" lengthAdjust="spacingAndGlyphs">T</tspan><tspan dx="-0.75">P</tspan></text>
<text transform="translate(737 666.9) rotate(-90) scale(1 1.16)">LUAD-1B-AFLR<tspan font-size="12" dx="0.5" dy="-0.7">-</tspan><tspan dy="0.7" textLength="10.05" lengthAdjust="spacingAndGlyphs">T</tspan><tspan dx="-0.75">P</tspan></text>
<text transform="translate(750 666.9) rotate(-90) scale(1 1.16)">LUAD-1J-A7X0<tspan font-size="12" dx="0.5" dy="-0.7">-</tspan><tspan dy="0.7" textLength="10.05" lengthAdjust="spacingAndGlyphs">T</tspan><tspan dx="-0.75">P</tspan></text>
<text transform="translate(763 666.9) rotate(-90) scale(1 1.16)">LUAD-7C-ANTZ<tspan font-size="12" dx="0.5" dy="-0.7">-</tspan><tspan dy="0.7" textLength="10.05" lengthAdjust="spacingAndGlyphs">T</tspan><tspan dx="-0.75">P</tspan></text>
<text transform="translate(776 666.9) rotate(-90) scale(1 1.16)">LUAD-GC-5183<tspan font-size="12" dx="0.5" dy="-0.7">-</tspan><tspan dy="0.7" textLength="10.05" lengthAdjust="spacingAndGlyphs">T</tspan><tspan dx="-0.75">P</tspan></text>
<text transform="translate(789 666.9) rotate(-90) scale(1 1.16)">LUAD-B9-AXZO<tspan font-size="12" dx="0.5" dy="-0.7">-</tspan><tspan dy="0.7" textLength="10.05" lengthAdjust="spacingAndGlyphs">T</tspan><tspan dx="-0.75">P</tspan></text>
<text transform="translate(802 666.9) rotate(-90) scale(1 1.16)">LUAD-JD-AXRO<tspan font-size="12" dx="0.5" dy="-0.7">-</tspan><tspan dy="0.7" textLength="10.05" lengthAdjust="spacingAndGlyphs">T</tspan><tspan dx="-0.75">P</tspan></text>
<text transform="translate(815 666.9) rotate(-90) scale(1 1.16)">LUAD-53-4586<tspan font-size="12" dx="0.5" dy="-0.7">-</tspan><tspan dy="0.7" textLength="10.05" lengthAdjust="spacingAndGlyphs">T</tspan><tspan dx="-0.75">P</tspan></text>
<text transform="translate(828 666.9) rotate(-90) scale(1 1.16)">LUAD-I6-A79A<tspan font-size="12" dx="0.5" dy="-0.7">-</tspan><tspan dy="0.7" textLength="10.05" lengthAdjust="spacingAndGlyphs">T</tspan><tspan dx="-0.75">P</tspan></text>
<text transform="translate(841 666.9) rotate(-90) scale(1 1.16)">LUAD-I1-AFFE<tspan font-size="12" dx="0.5" dy="-0.7">-</tspan><tspan dy="0.7" textLength="10.05" lengthAdjust="spacingAndGlyphs">T</tspan><tspan dx="-0.75">P</tspan></text>
<text transform="translate(854 666.9) rotate(-90) scale(1 1.16)">LUAD-HC-A47R<tspan font-size="12" dx="0.5" dy="-0.7">-</tspan><tspan dy="0.7" textLength="10.05" lengthAdjust="spacingAndGlyphs">T</tspan><tspan dx="-0.75">P</tspan></text>
<text transform="translate(867 666.9) rotate(-90) scale(1 1.16)">LUAD-FG-AS8G<tspan font-size="12" dx="0.5" dy="-0.7">-</tspan><tspan dy="0.7" textLength="10.05" lengthAdjust="spacingAndGlyphs">T</tspan><tspan dx="-0.75">P</tspan></text>
<text transform="translate(880 666.9) rotate(-90) scale(1 1.16)">LUAD-G9-AJ5E<tspan font-size="12" dx="0.5" dy="-0.7">-</tspan><tspan dy="0.7" textLength="10.05" lengthAdjust="spacingAndGlyphs">T</tspan><tspan dx="-0.75">P</tspan></text>
<text transform="translate(893 666.9) rotate(-90) scale(1 1.16)">LUAD-C1-ABEV<tspan font-size="12" dx="0.5" dy="-0.7">-</tspan><tspan dy="0.7" textLength="10.05" lengthAdjust="spacingAndGlyphs">T</tspan><tspan dx="-0.75">P</tspan></text>
<text transform="translate(906 666.9) rotate(-90) scale(1 1.16)">LUAD-6D-2730<tspan font-size="12" dx="0.5" dy="-0.7">-</tspan><tspan dy="0.7" textLength="10.05" lengthAdjust="spacingAndGlyphs">T</tspan><tspan dx="-0.75">P</tspan></text>
<text transform="translate(919 666.9) rotate(-90) scale(1 1.16)">LUAD-A3-AA9T<tspan font-size="12" dx="0.5" dy="-0.7">-</tspan><tspan dy="0.7" textLength="10.05" lengthAdjust="spacingAndGlyphs">T</tspan><tspan dx="-0.75">P</tspan></text>
<text transform="translate(932 666.9) rotate(-90) scale(1 1.16)">LUAD-I8-AVRV<tspan font-size="12" dx="0.5" dy="-0.7">-</tspan><tspan dy="0.7" textLength="10.05" lengthAdjust="spacingAndGlyphs">T</tspan><tspan dx="-0.75">P</tspan></text>
<text transform="translate(945 666.9) rotate(-90) scale(1 1.16)">LUAD-71-AP3D<tspan font-size="12" dx="0.5" dy="-0.7">-</tspan><tspan dy="0.7" textLength="10.05" lengthAdjust="spacingAndGlyphs">T</tspan><tspan dx="-0.75">P</tspan></text>
</g>
<g filter="url(#b2)">
<text transform="translate(76 666.9) rotate(-90) scale(1 1.16)">LUAD-4D-ASK4<tspan font-size="12" dx="0.5" dy="-0.7">-</tspan><tspan dy="0.7" textLength="10.05" lengthAdjust="spacingAndGlyphs">T</tspan><tspan dx="-0.75">P</tspan></text>
<text transform="translate(89 666.9) rotate(-90) scale(1 1.16)">LUAD-0C-AIW4<tspan font-size="12" dx="0.5" dy="-0.7">-</tspan><tspan dy="0.7" textLength="10.05" lengthAdjust="spacingAndGlyphs">T</tspan><tspan dx="-0.75">P</tspan></text>
<text transform="translate(102 666.9) rotate(-90) scale(1 1.16)">LUAD-28-7058<tspan font-size="12" dx="0.5" dy="-0.7">-</tspan><tspan dy="0.7" textLength="10.05" lengthAdjust="spacingAndGlyphs">T</tspan><tspan dx="-0.75">P</tspan></text>
<text transform="translate(115 666.9) rotate(-90) scale(1 1.16)">LUAD-DF-APWJ<tspan font-size="12" dx="0.5" dy="-0.7">-</tspan><tspan dy="0.7" textLength="10.05" lengthAdjust="spacingAndGlyphs">T</tspan><tspan dx="-0.75">P</tspan></text>
<text transform="translate(128 666.9) rotate(-90) scale(1 1.16)">LUAD-71-4352<tspan font-size="12" dx="0.5" dy="-0.7">-</tspan><tspan dy="0.7" textLength="10.05" lengthAdjust="spacingAndGlyphs">T</tspan><tspan dx="-0.75">P</tspan></text>
<text transform="translate(141 666.9) rotate(-90) scale(1 1.16)">LUAD-41-8682<tspan font-size="12" dx="0.5" dy="-0.7">-</tspan><tspan dy="0.7" textLength="10.05" lengthAdjust="spacingAndGlyphs">T</tspan><tspan dx="-0.75">P</tspan></text>
<text transform="translate(154 666.9) rotate(-90) scale(1 1.16)">LUAD-87-3377<tspan font-size="12" dx="0.5" dy="-0.7">-</tspan><tspan dy="0.7" textLength="10.05" lengthAdjust="spacingAndGlyphs">T</tspan><tspan dx="-0.75">P</tspan></text>
<text transform="translate(167 666.9) rotate(-90) scale(1 1.16)">LUAD-9E-AWSH<tspan font-size="12" dx="0.5" dy="-0.7">-</tspan><tspan dy="0.7" textLength="10.05" lengthAdjust="spacingAndGlyphs">T</tspan><tspan dx="-0.75">P</tspan></text>
<text transform="translate(180 666.9) rotate(-90) scale(1 1.16)">LUAD-A0-ALP7<tspan font-size="12" dx="0.5" dy="-0.7">-</tspan><tspan dy="0.7" textLength="10.05" lengthAdjust="spacingAndGlyphs">T</tspan><tspan dx="-0.75">P</tspan></text>
<text transform="translate(193 666.9) rotate(-90) scale(1 1.16)">LUAD-21-6792<tspan font-size="12" dx="0.5" dy="-0.7">-</tspan><tspan dy="0.7" textLength="10.05" lengthAdjust="spacingAndGlyphs">T</tspan><tspan dx="-0.75">P</tspan></text>
<text transform="translate(206 666.9) rotate(-90) scale(1 1.16)">LUAD-67-ALZ5<tspan font-size="12" dx="0.5" dy="-0.7">-</tspan><tspan dy="0.7" textLength="10.05" lengthAdjust="spacingAndGlyphs">T</tspan><tspan dx="-0.75">P</tspan></text>
<text transform="translate(219 666.9) rotate(-90) scale(1 1.16)">LUAD-FI-A4PX<tspan font-size="12" dx="0.5" dy="-0.7">-</tspan><tspan dy="0.7" textLength="10.05" lengthAdjust="spacingAndGlyphs">T</tspan><tspan dx="-0.75">P</tspan></text>
<text transform="translate(232 666.9) rotate(-90) scale(1 1.16)">LUAD-7J-AYJT<tspan font-size="12" dx="0.5" dy="-0.7">-</tspan><tspan dy="0.7" textLength="10.05" lengthAdjust="spacingAndGlyphs">T</tspan><tspan dx="-0.75">P</tspan></text>
<text transform="translate(245 666.9) rotate(-90) scale(1 1.16)">LUAD-26-ACJC<tspan font-size="12" dx="0.5" dy="-0.7">-</tspan><tspan dy="0.7" textLength="10.05" lengthAdjust="spacingAndGlyphs">T</tspan><tspan dx="-0.75">P</tspan></text>
<text transform="translate(258 666.9) rotate(-90) scale(1 1.16)">LUAD-19-6557<tspan font-size="12" dx="0.5" dy="-0.7">-</tspan><tspan dy="0.7" textLength="10.05" lengthAdjust="spacingAndGlyphs">T</tspan><tspan dx="-0.75">P</tspan></text>
<text transform="translate(271 666.9) rotate(-90) scale(1 1.16)">LUAD-E2-0431<tspan font-size="12" dx="0.5" dy="-0.7">-</tspan><tspan dy="0.7" textLength="10.05" lengthAdjust="spacingAndGlyphs">T</tspan><tspan dx="-0.75">P</tspan></text>
<text transform="translate(284 666.9) rotate(-90) scale(1 1.16)">LUAD-J2-APAF<tspan font-size="12" dx="0.5" dy="-0.7">-</tspan><tspan dy="0.7" textLength="10.05" lengthAdjust="spacingAndGlyphs">T</tspan><tspan dx="-0.75">P</tspan></text>
<text transform="translate(297 666.9) rotate(-90) scale(1 1.16)">LUAD-86-ABFF<tspan font-size="12" dx="0.5" dy="-0.7">-</tspan><tspan dy="0.7" textLength="10.05" lengthAdjust="spacingAndGlyphs">T</tspan><tspan dx="-0.75">P</tspan></text>
<text transform="translate(310 666.9) rotate(-90) scale(1 1.16)">LUAD-5E-0199<tspan font-size="12" dx="0.5" dy="-0.7">-</tspan><tspan dy="0.7" textLength="10.05" lengthAdjust="spacingAndGlyphs">T</tspan><tspan dx="-0.75">P</tspan></text>
<text transform="translate(323 666.9) rotate(-90) scale(1 1.16)">LUAD-C8-AIJQ<tspan font-size="12" dx="0.5" dy="-0.7">-</tspan><tspan dy="0.7" textLength="10.05" lengthAdjust="spacingAndGlyphs">T</tspan><tspan dx="-0.75">P</tspan></text>
<text transform="translate(336 666.9) rotate(-90) scale(1 1.16)">LUAD-4B-AXA4<tspan font-size="12" dx="0.5" dy="-0.7">-</tspan><tspan dy="0.7" textLength="10.05" lengthAdjust="spacingAndGlyphs">T</tspan><tspan dx="-0.75">P</tspan></text>
<text transform="translate(349 666.9) rotate(-90) scale(1 1.16)">LUAD-1A-ATZJ<tspan font-size="12" dx="0.5" dy="-0.7">-</tspan><tspan dy="0.7" textLength="10.05" lengthAdjust="spacingAndGlyphs">T</tspan><tspan dx="-0.75">P</tspan></text>
<text transform="translate(362 666.9) rotate(-90) scale(1 1.16)">LUAD-2A-8108<tspan font-size="12" dx="0.5" dy="-0.7">-</tspan><tspan dy="0.7" textLength="10.05" lengthAdjust="spacingAndGlyphs">T</tspan><tspan dx="-0.75">P</tspan></text>
<text transform="translate(375 666.9) rotate(-90) scale(1 1.16)">LUAD-5C-AHKO<tspan font-size="12" dx="0.5" dy="-0.7">-</tspan><tspan dy="0.7" textLength="10.05" lengthAdjust="spacingAndGlyphs">T</tspan><tspan dx="-0.75">P</tspan></text>
<text transform="translate(388 666.9) rotate(-90) scale(1 1.16)">LUAD-74-ARQW<tspan font-size="12" dx="0.5" dy="-0.7">-</tspan><tspan dy="0.7" textLength="10.05" lengthAdjust="spacingAndGlyphs">T</tspan><tspan dx="-0.75">P</tspan></text>
<text transform="translate(401 666.9) rotate(-90) scale(1 1.16)">LUAD-80-AZMS<tspan font-size="12" dx="0.5" dy="-0.7">-</tspan><tspan dy="0.7" textLength="10.05" lengthAdjust="spacingAndGlyphs">T</tspan><tspan dx="-0.75">P</tspan></text>
<text transform="translate(414 666.9) rotate(-90) scale(1 1.16)">LUAD-0C-7172<tspan font-size="12" dx="0.5" dy="-0.7">-</tspan><tspan dy="0.7" textLength="10.05" lengthAdjust="spacingAndGlyphs">T</tspan><tspan dx="-0.75">P</tspan></text>
<text transform="translate(427 666.9) rotate(-90) scale(1 1.16)">LUAD-G0-6394<tspan font-size="12" dx="0.5" dy="-0.7">-</tspan><tspan dy="0.7" textLength="10.05" lengthAdjust="spacingAndGlyphs">T</tspan><tspan dx="-0.75">P</tspan></text>
<text transform="translate(440 666.9) rotate(-90) scale(1 1.16)">LUAD-29-A86D<tspan font-size="12" dx="0.5" dy="-0.7">-</tspan><tspan dy="0.7" textLength="10.05" lengthAdjust="spacingAndGlyphs">T</tspan><tspan dx="-0.75">P</tspan></text>
<text transform="translate(453 666.9) rotate(-90) scale(1 1.16)">LUAD-69-0057<tspan font-size="12" dx="0.5" dy="-0.7">-</tspan><tspan dy="0.7" textLength="10.05" lengthAdjust="spacingAndGlyphs">T</tspan><tspan dx="-0.75">P</tspan></text>
<text transform="translate(466 666.9) rotate(-90) scale(1 1.16)">LUAD-HG-AET8<tspan font-size="12" dx="0.5" dy="-0.7">-</tspan><tspan dy="0.7" textLength="10.05" lengthAdjust="spacingAndGlyphs">T</tspan><tspan dx="-0.75">P</tspan></text>
<text transform="translate(479 666.9) rotate(-90) scale(1 1.16)">LUAD-JG-AFKC<tspan font-size="12" dx="0.5" dy="-0.7">-</tspan><tspan dy="0.7" textLength="10.05" lengthAdjust="spacingAndGlyphs">T</tspan><tspan dx="-0.75">P</tspan></text>
<text transform="translate(492 666.9) rotate(-90) scale(1 1.16)">LUAD-DI-AQEE<tspan font-size="12" dx="0.5" dy="-0.7">-</tspan><tspan dy="0.7" textLength="10.05" lengthAdjust="spacingAndGlyphs">T</tspan><tspan dx="-0.75">P</tspan></text>
<text transform="translate(505 666.9) rotate(-90) scale(1 1.16)">LUAD-IE-AUW1<tspan font-size="12" dx="0.5" dy="-0.7">-</tspan><tspan dy="0.7" textLength="10.05" lengthAdjust="spacingAndGlyphs">T</tspan><tspan dx="-0.75">P</tspan></text>
<text transform="translate(518 666.9) rotate(-90) scale(1 1.16)">LUAD-65-A4CU<tspan font-size="12" dx="0.5" dy="-0.7">-</tspan><tspan dy="0.7" textLength="10.05" lengthAdjust="spacingAndGlyphs">T</tspan><tspan dx="-0.75">P</tspan></text>
<text transform="translate(531 666.9) rotate(-90) scale(1 1.16)">LUAD-12-5285<tspan font-size="12" dx="0.5" dy="-0.7">-</tspan><tspan dy="0.7" textLength="10.05" lengthAdjust="spacingAndGlyphs">T</tspan><tspan dx="-0.75">P</tspan></text>
<text transform="translate(544 666.9) rotate(-90) scale(1 1.16)">LUAD-38-A8UV<tspan font-size="12" dx="0.5" dy="-0.7">-</tspan><tspan dy="0.7" textLength="10.05" lengthAdjust="spacingAndGlyphs">T</tspan><tspan dx="-0.75">P</tspan></text>
<text transform="translate(557 666.9) rotate(-90) scale(1 1.16)">LUAD-FF-2036<tspan font-size="12" dx="0.5" dy="-0.7">-</tspan><tspan dy="0.7" textLength="10.05" lengthAdjust="spacingAndGlyphs">T</tspan><tspan dx="-0.75">P</tspan></text>
<text transform="translate(570 666.9) rotate(-90) scale(1 1.16)">LUAD-4I-1068<tspan font-size="12" dx="0.5" dy="-0.7">-</tspan><tspan dy="0.7" textLength="10.05" lengthAdjust="spacingAndGlyphs">T</tspan><tspan dx="-0.75">P</tspan></text>
<text transform="translate(583 666.9) rotate(-90) scale(1 1.16)">LUAD-H8-2605<tspan font-size="12" dx="0.5" dy="-0.7">-</tspan><tspan dy="0.7" textLength="10.05" lengthAdjust="spacingAndGlyphs">T</tspan><tspan dx="-0.75">P</tspan></text>
<text transform="translate(596 666.9) rotate(-90) scale(1 1.16)">LUAD-34-AHFS<tspan font-size="12" dx="0.5" dy="-0.7">-</tspan><tspan dy="0.7" textLength="10.05" lengthAdjust="spacingAndGlyphs">T</tspan><tspan dx="-0.75">P</tspan></text>
<text transform="translate(609 666.9) rotate(-90) scale(1 1.16)">LUAD-B5-6767<tspan font-size="12" dx="0.5" dy="-0.7">-</tspan><tspan dy="0.7" textLength="10.05" lengthAdjust="spacingAndGlyphs">T</tspan><tspan dx="-0.75">P</tspan></text>
<text transform="translate(622 666.9) rotate(-90) scale(1 1.16)">LUAD-HF-A5YZ<tspan font-size="12" dx="0.5" dy="-0.7">-</tspan><tspan dy="0.7" textLength="10.05" lengthAdjust="spacingAndGlyphs">T</tspan><tspan dx="-0.75">P</tspan></text>
<text transform="translate(635 666.9) rotate(-90) scale(1 1.16)">LUAD-25-4599<tspan font-size="12" dx="0.5" dy="-0.7">-</tspan><tspan dy="0.7" textLength="10.05" lengthAdjust="spacingAndGlyphs">T</tspan><tspan dx="-0.75">P</tspan></text>
<text transform="translate(648 666.9) rotate(-90) scale(1 1.16)">LUAD-1A-ABO5<tspan font-size="12" dx="0.5" dy="-0.7">-</tspan><tspan dy="0.7" textLength="10.05" lengthAdjust="spacingAndGlyphs">T</tspan><tspan dx="-0.75">P</tspan></text>
<text transform="translate(661 666.9) rotate(-90) scale(1 1.16)">LUAD-F1-AK0C<tspan font-size="12" dx="0.5" dy="-0.7">-</tspan><tspan dy="0.7" textLength="10.05" lengthAdjust="spacingAndGlyphs">T</tspan><tspan dx="-0.75">P</tspan></text>
<text transform="translate(674 666.9) rotate(-90) scale(1 1.16)">LUAD-AA-7152<tspan font-size="12" dx="0.5" dy="-0.7">-</tspan><tspan dy="0.7" textLength="10.05" lengthAdjust="spacingAndGlyphs">T</tspan><tspan dx="-0.75">P</tspan></text>
<text transform="translate(687 666.9) rotate(-90) scale(1 1.16)">LUAD-93-ACNR<tspan font-size="12" dx="0.5" dy="-0.7">-</tspan><tspan dy="0.7" textLength="10.05" lengthAdjust="spacingAndGlyphs">T</tspan><tspan dx="-0.75">P</tspan></text>
<text transform="translate(700 666.9) rotate(-90) scale(1 1.16)">LUAD-56-1974<tspan font-size="12" dx="0.5" dy="-0.7">-</tspan><tspan dy="0.7" textLength="10.05" lengthAdjust="spacingAndGlyphs">T</tspan><tspan dx="-0.75">P</tspan></text>
<text transform="translate(713 666.9) rotate(-90) scale(1 1.16)">LUAD-GE-1153<tspan font-size="12" dx="0.5" dy="-0.7">-</tspan><tspan dy="0.7" textLength="10.05" lengthAdjust="spacingAndGlyphs">T</tspan><tspan dx="-0.75">P</tspan></text>
<text transform="translate(726 666.9) rotate(-90) scale(1 1.16)">LUAD-E3-A6B2<tspan font-size="12" dx="0.5" dy="-0.7">-</tspan><tspan dy="0.7" textLength="10.05" lengthAdjust="spacingAndGlyphs">T</tspan><tspan dx="-0.75">P</tspan></text>
<text transform="translate(739 666.9) rotate(-90) scale(1 1.16)">LUAD-IA-8058<tspan font-size="12" dx="0.5" dy="-0.7">-</tspan><tspan dy="0.7" textLength="10.05" lengthAdjust="spacingAndGlyphs">T</tspan><tspan dx="-0.75">P</tspan></text>
<text transform="translate(752 666.9) rotate(-90) scale(1 1.16)">LUAD-D7-4145<tspan font-size="12" dx="0.5" dy="-0.7">-</tspan><tspan dy="0.7" textLength="10.05" lengthAdjust="spacingAndGlyphs">T</tspan><tspan dx="-0.75">P</tspan></text>
<text transform="translate(765 666.9) rotate(-90) scale(1 1.16)">LUAD-9J-AJ1F<tspan font-size="12" dx="0.5" dy="-0.7">-</tspan><tspan dy="0.7" textLength="10.05" lengthAdjust="spacingAndGlyphs">T</tspan><tspan dx="-0.75">P</tspan></text>
<text transform="translate(778 666.9) rotate(-90) scale(1 1.16)">LUAD-4D-AM8C<tspan font-size="12" dx="0.5" dy="-0.7">-</tspan><tspan dy="0.7" textLength="10.05" lengthAdjust="spacingAndGlyphs">T</tspan><tspan dx="-0.75">P</tspan></text>
<text transform="translate(791 666.9) rotate(-90) scale(1 1.16)">LUAD-A0-7674<tspan font-size="12" dx="0.5" dy="-0.7">-</tspan><tspan dy="0.7" textLength="10.05" lengthAdjust="spacingAndGlyphs">T</tspan><tspan dx="-0.75">P</tspan></text>
<text transform="translate(804 666.9) rotate(-90) scale(1 1.16)">LUAD-EB-AMS0<tspan font-size="12" dx="0.5" dy="-0.7">-</tspan><tspan dy="0.7" textLength="10.05" lengthAdjust="spacingAndGlyphs">T</tspan><tspan dx="-0.75">P</tspan></text>
<text transform="translate(817 666.9) rotate(-90) scale(1 1.16)">LUAD-5G-AWDW<tspan font-size="12" dx="0.5" dy="-0.7">-</tspan><tspan dy="0.7" textLength="10.05" lengthAdjust="spacingAndGlyphs">T</tspan><tspan dx="-0.75">P</tspan></text>
<text transform="translate(830 666.9) rotate(-90) scale(1 1.16)">LUAD-GG-A64A<tspan font-size="12" dx="0.5" dy="-0.7">-</tspan><tspan dy="0.7" textLength="10.05" lengthAdjust="spacingAndGlyphs">T</tspan><tspan dx="-0.75">P</tspan></text>
<text transform="translate(843 666.9) rotate(-90) scale(1 1.16)">LUAD-15-2507<tspan font-size="12" dx="0.5" dy="-0.7">-</tspan><tspan dy="0.7" textLength="10.05" lengthAdjust="spacingAndGlyphs">T</tspan><tspan dx="-0.75">P</tspan></text>
<text transform="translate(856 666.9) rotate(-90) scale(1 1.16)">LUAD-BH-ACTI<tspan font-size="12" dx="0.5" dy="-0.7">-</tspan><tspan dy="0.7" textLength="10.05" lengthAdjust="spacingAndGlyphs">T</tspan><tspan dx="-0.75">P</tspan></text>
<text transform="translate(869 666.9) rotate(-90) scale(1 1.16)">LUAD-JE-ANYF<tspan font-size="12" dx="0.5" dy="-0.7">-</tspan><tspan dy="0.7" textLength="10.05" lengthAdjust="spacingAndGlyphs">T</tspan><tspan dx="-0.75">P</tspan></text>
<text transform="translate(882 666.9) rotate(-90) scale(1 1.16)">LUAD-94-6456<tspan font-size="12" dx="0.5" dy="-0.7">-</tspan><tspan dy="0.7" textLength="10.05" lengthAdjust="spacingAndGlyphs">T</tspan><tspan dx="-0.75">P</tspan></text>
<text transform="translate(895 666.9) rotate(-90) scale(1 1.16)">LUAD-G8-9501<tspan font-size="12" dx="0.5" dy="-0.7">-</tspan><tspan dy="0.7" textLength="10.05" lengthAdjust="spacingAndGlyphs">T</tspan><tspan dx="-0.75">P</tspan></text>
<text transform="translate(908 666.9) rotate(-90) scale(1 1.16)">LUAD-H8-AAFY<tspan font-size="12" dx="0.5" dy="-0.7">-</tspan><tspan dy="0.7" textLength="10.05" lengthAdjust="spacingAndGlyphs">T</tspan><tspan dx="-0.75">P</tspan></text>
<text transform="translate(921 666.9) rotate(-90) scale(1 1.16)">LUAD-C6-AI0N<tspan font-size="12" dx="0.5" dy="-0.7">-</tspan><tspan dy="0.7" textLength="10.05" lengthAdjust="spacingAndGlyphs">T</tspan><tspan dx="-0.75">P</tspan></text>
<text transform="translate(934 666.9) rotate(-90) scale(1 1.16)">LUAD-6H-AM5I<tspan font-size="12" dx="0.5" dy="-0.7">-</tspan><tspan dy="0.7" textLength="10.05" lengthAdjust="spacingAndGlyphs">T</tspan><tspan dx="-0.75">P</tspan></text>
</g>
<g filter="url(#b2)">
<text transform="translate(78 666.9) rotate(-90) scale(1 1.16)">LUAD-7D-AJ79<tspan font-size="12" dx="0.5" dy="-0.7">-</tspan><tspan dy="0.7" textLength="10.05" lengthAdjust="spacingAndGlyphs">T</tspan><tspan dx="-0.75">P</tspan></text>
<text transform="translate(91 666.9) rotate(-90) scale(1 1.16)">LUAD-37-1144<tspan font-size="12" dx="0.5" dy="-0.7">-</tspan><tspan dy="0.7" textLength="10.05" lengthAdjust="spacingAndGlyphs">T</tspan><tspan dx="-0.75">P</tspan></text>
<text transform="translate(104 666.9) rotate(-90) scale(1 1.16)">LUAD-D8-0831<tspan font-size="12" dx="0.5" dy="-0.7">-</tspan><tspan dy="0.7" textLength="10.05" lengthAdjust="spacingAndGlyphs">T</tspan><tspan dx="-0.75">P</tspan></text>
<text transform="translate(117 666.9) rotate(-90) scale(1 1.16)">LUAD-67-A8PM<tspan font-size="12" dx="0.5" dy="-0.7">-</tspan><tspan dy="0.7" textLength="10.05" lengthAdjust="spacingAndGlyphs">T</tspan><tspan dx="-0.75">P</tspan></text>
<text transform="translate(130 666.9) rotate(-90) scale(1 1.16)">LUAD-0A-AUHW<tspan font-size="12" dx="0.5" dy="-0.7">-</tspan><tspan dy="0.7" textLength="10.05" lengthAdjust="spacingAndGlyphs">T</tspan><tspan dx="-0.75">P</tspan></text>
<text transform="translate(143 666.9) rotate(-90) scale(1 1.16)">LUAD-GG-A1E5<tspan font-size="12" dx="0.5" dy="-0.7">-</tspan><tspan dy="0.7" textLength="10.05" lengthAdjust="spacingAndGlyphs">T</tspan><tspan dx="-0.75">P</tspan></text>
<text transform="translate(156 666.9) rotate(-90) scale(1 1.16)">LUAD-C2-AI2C<tspan font-size="12" dx="0.5" dy="-0.7">-</tspan><tspan dy="0.7" textLength="10.05" lengthAdjust="spacingAndGlyphs">T</tspan><tspan dx="-0.75">P</tspan></text>
<text transform="translate(169 666.9) rotate(-90) scale(1 1.16)">LUAD-C6-3191<tspan font-size="12" dx="0.5" dy="-0.7">-</tspan><tspan dy="0.7" textLength="10.05" lengthAdjust="spacingAndGlyphs">T</tspan><tspan dx="-0.75">P</tspan></text>
<text transform="translate(182 666.9) rotate(-90) scale(1 1.16)">LUAD-60-4451<tspan font-size="12" dx="0.5" dy="-0.7">-</tspan><tspan dy="0.7" textLength="10.05" lengthAdjust="spacingAndGlyphs">T</tspan><tspan dx="-0.75">P</tspan></text>
<text transform="translate(195 666.9) rotate(-90) scale(1 1.16)">LUAD-9F-AZ8A<tspan font-size="12" dx="0.5" dy="-0.7">-</tspan><tspan dy="0.7" textLength="10.05" lengthAdjust="spacingAndGlyphs">T</tspan><tspan dx="-0.75">P</tspan></text>
<text transform="translate(208 666.9) rotate(-90) scale(1 1.16)">LUAD-A7-AC1Q<tspan font-size="12" dx="0.5" dy="-0.7">-</tspan><tspan dy="0.7" textLength="10.05" lengthAdjust="spacingAndGlyphs">T</tspan><tspan dx="-0.75">P</tspan></text>
<text transform="translate(221 666.9) rotate(-90) scale(1 1.16)">LUAD-EE-A6E9<tspan font-size="12" dx="0.5" dy="-0.7">-</tspan><tspan dy="0.7" textLength="10.05" lengthAdjust="spacingAndGlyphs">T</tspan><tspan dx="-0.75">P</tspan></text>
<text transform="translate(234 666.9) rotate(-90) scale(1 1.16)">LUAD-8A-3783<tspan font-size="12" dx="0.5" dy="-0.7">-</tspan><tspan dy="0.7" textLength="10.05" lengthAdjust="spacingAndGlyphs">T</tspan><tspan dx="-0.75">P</tspan></text>
<text transform="translate(247 666.9) rotate(-90) scale(1 1.16)">LUAD-7E-AI6V<tspan font-size="12" dx="0.5" dy="-0.7">-</tspan><tspan dy="0.7" textLength="10.05" lengthAdjust="spacingAndGlyphs">T</tspan><tspan dx="-0.75">P</tspan></text>
<text transform="translate(260 666.9) rotate(-90) scale(1 1.16)">LUAD-53-AH5M<tspan font-size="12" dx="0.5" dy="-0.7">-</tspan><tspan dy="0.7" textLength="10.05" lengthAdjust="spacingAndGlyphs">T</tspan><tspan dx="-0.75">P</tspan></text>
<text transform="translate(273 666.9) rotate(-90) scale(1 1.16)">LUAD-JA-AL2G<tspan font-size="12" dx="0.5" dy="-0.7">-</tspan><tspan dy="0.7" textLength="10.05" lengthAdjust="spacingAndGlyphs">T</tspan><tspan dx="-0.75">P</tspan></text>
<text transform="translate(286 666.9) rotate(-90) scale(1 1.16)">LUAD-D2-7885<tspan font-size="12" dx="0.5" dy="-0.7">-</tspan><tspan dy="0.7" textLength="10.05" lengthAdjust="spacingAndGlyphs">T</tspan><tspan dx="-0.75">P</tspan></text>
<text transform="translate(299 666.9) rotate(-90) scale(1 1.16)">LUAD-49-9351<tspan font-size="12" dx="0.5" dy="-0.7">-</tspan><tspan dy="0.7" textLength="10.05" lengthAdjust="spacingAndGlyphs">T</tspan><tspan dx="-0.75">P</tspan></text>
<text transform="translate(312 666.9) rotate(-90) scale(1 1.16)">LUAD-B6-AL92<tspan font-size="12" dx="0.5" dy="-0.7">-</tspan><tspan dy="0.7" textLength="10.05" lengthAdjust="spacingAndGlyphs">T</tspan><tspan dx="-0.75">P</tspan></text>
<text transform="translate(325 666.9) rotate(-90) scale(1 1.16)">LUAD-19-5660<tspan font-size="12" dx="0.5" dy="-0.7">-</tspan><tspan dy="0.7" textLength="10.05" lengthAdjust="spacingAndGlyphs">T</tspan><tspan dx="-0.75">P</tspan></text>
<text transform="translate(338 666.9) rotate(-90) scale(1 1.16)">LUAD-3C-ACJ8<tspan font-size="12" dx="0.5" dy="-0.7">-</tspan><tspan dy="0.7" textLength="10.05" lengthAdjust="spacingAndGlyphs">T</tspan><tspan dx="-0.75">P</tspan></text>
<text transform="translate(351 666.9) rotate(-90) scale(1 1.16)">LUAD-D9-ARON<tspan font-size="12" dx="0.5" dy="-0.7">-</tspan><tspan dy="0.7" textLength="10.05" lengthAdjust="spacingAndGlyphs">T</tspan><tspan dx="-0.75">P</tspan></text>
<text transform="translate(364 666.9) rotate(-90) scale(1 1.16)">LUAD-C4-A47C<tspan font-size="12" dx="0.5" dy="-0.7">-</tspan><tspan dy="0.7" textLength="10.05" lengthAdjust="spacingAndGlyphs">T</tspan><tspan dx="-0.75">P</tspan></text>
<text transform="translate(377 666.9) rotate(-90) scale(1 1.16)">LUAD-58-AX3N<tspan font-size="12" dx="0.5" dy="-0.7">-</tspan><tspan dy="0.7" textLength="10.05" lengthAdjust="spacingAndGlyphs">T</tspan><tspan dx="-0.75">P</tspan></text>
<text transform="translate(390 666.9) rotate(-90) scale(1 1.16)">LUAD-B1-AE21<tspan font-size="12" dx="0.5" dy="-0.7">-</tspan><tspan dy="0.7" textLength="10.05" lengthAdjust="spacingAndGlyphs">T</tspan><tspan dx="-0.75">P</tspan></text>
<text transform="translate(403 666.9) rotate(-90) scale(1 1.16)">LUAD-JG-3200<tspan font-size="12" dx="0.5" dy="-0.7">-</tspan><tspan dy="0.7" textLength="10.05" lengthAdjust="spacingAndGlyphs">T</tspan><tspan dx="-0.75">P</tspan></text>
<text transform="translate(416 666.9) rotate(-90) scale(1 1.16)">LUAD-73-A27L<tspan font-size="12" dx="0.5" dy="-0.7">-</tspan><tspan dy="0.7" textLength="10.05" lengthAdjust="spacingAndGlyphs">T</tspan><tspan dx="-0.75">P</tspan></text>
<text transform="translate(429 666.9) rotate(-90) scale(1 1.16)">LUAD-6C-1922<tspan font-size="12" dx="0.5" dy="-0.7">-</tspan><tspan dy="0.7" textLength="10.05" lengthAdjust="spacingAndGlyphs">T</tspan><tspan dx="-0.75">P</tspan></text>
<text transform="translate(442 666.9) rotate(-90) scale(1 1.16)">LUAD-9A-AG1M<tspan font-size="12" dx="0.5" dy="-0.7">-</tspan><tspan dy="0.7" textLength="10.05" lengthAdjust="spacingAndGlyphs">T</tspan><tspan dx="-0.75">P</tspan></text>
<text transform="translate(455 666.9) rotate(-90) scale(1 1.16)">LUAD-3F-2795<tspan font-size="12" dx="0.5" dy="-0.7">-</tspan><tspan dy="0.7" textLength="10.05" lengthAdjust="spacingAndGlyphs">T</tspan><tspan dx="-0.75">P</tspan></text>
<text transform="translate(468 666.9) rotate(-90) scale(1 1.16)">LUAD-HJ-9059<tspan font-size="12" dx="0.5" dy="-0.7">-</tspan><tspan dy="0.7" textLength="10.05" lengthAdjust="spacingAndGlyphs">T</tspan><tspan dx="-0.75">P</tspan></text>
<text transform="translate(481 666.9) rotate(-90) scale(1 1.16)">LUAD-83-A6CO<tspan font-size="12" dx="0.5" dy="-0.7">-</tspan><tspan dy="0.7" textLength="10.05" lengthAdjust="spacingAndGlyphs">T</tspan><tspan dx="-0.75">P</tspan></text>
<text transform="translate(494 666.9) rotate(-90) scale(1 1.16)">LUAD-53-AKG6<tspan font-size="12" dx="0.5" dy="-0.7">-</tspan><tspan dy="0.7" textLength="10.05" lengthAdjust="spacingAndGlyphs">T</tspan><tspan dx="-0.75">P</tspan></text>
<text transform="translate(507 666.9) rotate(-90) scale(1 1.16)">LUAD-BG-ATDB<tspan font-size="12" dx="0.5" dy="-0.7">-</tspan><tspan dy="0.7" textLength="10.05" lengthAdjust="spacingAndGlyphs">T</tspan><tspan dx="-0.75">P</tspan></text>
<text transform="translate(520 666.9) rotate(-90) scale(1 1.16)">LUAD-H7-2567<tspan font-size="12" dx="0.5" dy="-0.7">-</tspan><tspan dy="0.7" textLength="10.05" lengthAdjust="spacingAndGlyphs">T</tspan><tspan dx="-0.75">P</tspan></text>
<text transform="translate(533 666.9) rotate(-90) scale(1 1.16)">LUAD-I0-3144<tspan font-size="12" dx="0.5" dy="-0.7">-</tspan><tspan dy="0.7" textLength="10.05" lengthAdjust="spacingAndGlyphs">T</tspan><tspan dx="-0.75">P</tspan></text>
<text transform="translate(546 666.9) rotate(-90) scale(1 1.16)">LUAD-H1-A9VF<tspan font-size="12" dx="0.5" dy="-0.7">-</tspan><tspan dy="0.7" textLength="10.05" lengthAdjust="spacingAndGlyphs">T</tspan><tspan dx="-0.75">P</tspan></text>
<text transform="translate(559 666.9) rotate(-90) scale(1 1.16)">LUAD-4A-ANLU<tspan font-size="12" dx="0.5" dy="-0.7">-</tspan><tspan dy="0.7" textLength="10.05" lengthAdjust="spacingAndGlyphs">T</tspan><tspan dx="-0.75">P</tspan></text>
<text transform="translate(572 666.9) rotate(-90) scale(1 1.16)">LUAD-CH-APJ6<tspan font-size="12" dx="0.5" dy="-0.7">-</tspan><tspan dy="0.7" textLength="10.05" lengthAdjust="spacingAndGlyphs">T</tspan><tspan dx="-0.75">P</tspan></text>
<text transform="translate(585 666.9) rotate(-90) scale(1 1.16)">LUAD-0D-A3VX<tspan font-size="12" dx="0.5" dy="-0.7">-</tspan><tspan dy="0.7" textLength="10.05" lengthAdjust="spacingAndGlyphs">T</tspan><tspan dx="-0.75">P</tspan></text>
<text transform="translate(598 666.9) rotate(-90) scale(1 1.16)">LUAD-51-A95I<tspan font-size="12" dx="0.5" dy="-0.7">-</tspan><tspan dy="0.7" textLength="10.05" lengthAdjust="spacingAndGlyphs">T</tspan><tspan dx="-0.75">P</tspan></text>
<text transform="translate(611 666.9) rotate(-90) scale(1 1.16)">LUAD-8I-AH3L<tspan font-size="12" dx="0.5" dy="-0.7">-</tspan><tspan dy="0.7" textLength="10.05" lengthAdjust="spacingAndGlyphs">T</tspan><tspan dx="-0.75">P</tspan></text>
<text transform="translate(624 666.9) rotate(-90) scale(1 1.16)">LUAD-FC-AEJ3<tspan font-size="12" dx="0.5" dy="-0.7">-</tspan><tspan dy="0.7" textLength="10.05" lengthAdjust="spacingAndGlyphs">T</tspan><tspan dx="-0.75">P</tspan></text>
<text transform="translate(637 666.9) rotate(-90) scale(1 1.16)">LUAD-BC-2307<tspan font-size="12" dx="0.5" dy="-0.7">-</tspan><tspan dy="0.7" textLength="10.05" lengthAdjust="spacingAndGlyphs">T</tspan><tspan dx="-0.75">P</tspan></text>
<text transform="translate(650 666.9) rotate(-90) scale(1 1.16)">LUAD-01-ANTV<tspan font-size="12" dx="0.5" dy="-0.7">-</tspan><tspan dy="0.7" textLength="10.05" lengthAdjust="spacingAndGlyphs">T</tspan><tspan dx="-0.75">P</tspan></text>
<text transform="translate(663 666.9) rotate(-90) scale(1 1.16)">LUAD-9I-A6UK<tspan font-size="12" dx="0.5" dy="-0.7">-</tspan><tspan dy="0.7" textLength="10.05" lengthAdjust="spacingAndGlyphs">T</tspan><tspan dx="-0.75">P</tspan></text>
<text transform="translate(676 666.9) rotate(-90) scale(1 1.16)">LUAD-A7-2782<tspan font-size="12" dx="0.5" dy="-0.7">-</tspan><tspan dy="0.7" textLength="10.05" lengthAdjust="spacingAndGlyphs">T</tspan><tspan dx="-0.75">P</tspan></text>
<text transform="translate(689 666.9) rotate(-90) scale(1 1.16)">LUAD-87-1646<tspan font-size="12" dx="0.5" dy="-0.7">-</tspan><tspan dy="0.7" textLength="10.05" lengthAdjust="spacingAndGlyphs">T</tspan><tspan dx="-0.75">P</tspan></text>
<text transform="translate(702 666.9) rotate(-90) scale(1 1.16)">LUAD-56-ACJC<tspan font-size="12" dx="0.5" dy="-0.7">-</tspan><tspan dy="0.7" textLength="10.05" lengthAdjust="spacingAndGlyphs">T</tspan><tspan dx="-0.75">P</tspan></text>
<text transform="translate(715 666.9) rotate(-90) scale(1 1.16)">LUAD-AC-A3I6<tspan font-size="12" dx="0.5" dy="-0.7">-</tspan><tspan dy="0.7" textLength="10.05" lengthAdjust="spacingAndGlyphs">T</tspan><tspan dx="-0.75">P</tspan></text>
<text transform="translate(728 666.9) rotate(-90) scale(1 1.16)">LUAD-83-AWH7<tspan font-size="12" dx="0.5" dy="-0.7">-</tspan><tspan dy="0.7" textLength="10.05" lengthAdjust="spacingAndGlyphs">T</tspan><tspan dx="-0.75">P</tspan></text>
<text transform="translate(741 666.9) rotate(-90) scale(1 1.16)">LUAD-4B-AR0N<tspan font-size="12" dx="0.5" dy="-0.7">-</tspan><tspan dy="0.7" textLength="10.05" lengthAdjust="spacingAndGlyphs">T</tspan><tspan dx="-0.75">P</tspan></text>
<text transform="translate(754 666.9) rotate(-90) scale(1 1.16)">LUAD-53-AWH5<tspan font-size="12" dx="0.5" dy="-0.7">-</tspan><tspan dy="0.7" textLength="10.05" lengthAdjust="spacingAndGlyphs">T</tspan><tspan dx="-0.75">P</tspan></text>
<text transform="translate(767 666.9) rotate(-90) scale(1 1.16)">LUAD-A7-AYOP<tspan font-size="12" dx="0.5" dy="-0.7">-</tspan><tspan dy="0.7" textLength="10.05" lengthAdjust="spacingAndGlyphs">T</tspan><tspan dx="-0.75">P</tspan></text>
<text transform="translate(780 666.9) rotate(-90) scale(1 1.16)">LUAD-JJ-8174<tspan font-size="12" dx="0.5" dy="-0.7">-</tspan><tspan dy="0.7" textLength="10.05" lengthAdjust="spacingAndGlyphs">T</tspan><tspan dx="-0.75">P</tspan></text>
<text transform="translate(793 666.9) rotate(-90) scale(1 1.16)">LUAD-5H-A9RO<tspan font-size="12" dx="0.5" dy="-0.7">-</tspan><tspan dy="0.7" textLength="10.05" lengthAdjust="spacingAndGlyphs">T</tspan><tspan dx="-0.75">P</tspan></text>
<text transform="translate(806 666.9) rotate(-90) scale(1 1.16)">LUAD-2G-AQNW<tspan font-size="12" dx="0.5" dy="-0.7">-</tspan><tspan dy="0.7" textLength="10.05" lengthAdjust="spacingAndGlyphs">T</tspan><tspan dx="-0.75">P</tspan></text>
<text transform="translate(819 666.9) rotate(-90) scale(1 1.16)">LUAD-6D-A6M2<tspan font-size="12" dx="0.5" dy="-0.7">-</tspan><tspan dy="0.7" textLength="10.05" lengthAdjust="spacingAndGlyphs">T</tspan><tspan dx="-0.75">P</tspan></text>
<text transform="translate(832 666.9) rotate(-90) scale(1 1.16)">LUAD-GF-9600<tspan font-size="12" dx="0.5" dy="-0.7">-</tspan><tspan dy="0.7" textLength="10.05" lengthAdjust="spacingAndGlyphs">T</tspan><tspan dx="-0.75">P</tspan></text>
<text transform="translate(845 666.9) rotate(-90) scale(1 1.16)">LUAD-9D-7136<tspan font-size="12" dx="0.5" dy="-0.7">-</tspan><tspan dy="0.7" textLength="10.05" lengthAdjust="spacingAndGlyphs">T</tspan><tspan dx="-0.75">P</tspan></text>
<text transform="translate(858 666.9) rotate(-90) scale(1 1.16)">LUAD-B7-AH1L<tspan font-size="12" dx="0.5" dy="-0.7">-</tspan><tspan dy="0.7" textLength="10.05" lengthAdjust="spacingAndGlyphs">T</tspan><tspan dx="-0.75">P</tspan></text>
<text transform="translate(871 666.9) rotate(-90) scale(1 1.16)">LUAD-CJ-A87W<tspan font-size="12" dx="0.5" dy="-0.7">-</tspan><tspan dy="0.7" textLength="10.05" lengthAdjust="spacingAndGlyphs">T</tspan><tspan dx="-0.75">P</tspan></text>
<text transform="translate(884 666.9) rotate(-90) scale(1 1.16)">LUAD-E4-2055<tspan font-size="12" dx="0.5" dy="-0.7">-</tspan><tspan dy="0.7" textLength="10.05" lengthAdjust="spacingAndGlyphs">T</tspan><tspan dx="-0.75">P</tspan></text>
<text transform="translate(897 666.9) rotate(-90) scale(1 1.16)">LUAD-91-9903<tspan font-size="12" dx="0.5" dy="-0.7">-</tspan><tspan dy="0.7" textLength="10.05" lengthAdjust="spacingAndGlyphs">T</tspan><tspan dx="-0.75">P</tspan></text>
<text transform="translate(910 666.9) rotate(-90) scale(1 1.16)">LUAD-87-2556<tspan font-size="12" dx="0.5" dy="-0.7">-</tspan><tspan dy="0.7" textLength="10.05" lengthAdjust="spacingAndGlyphs">T</tspan><tspan dx="-0.75">P</tspan></text>
<text transform="translate(923 666.9) rotate(-90) scale(1 1.16)">LUAD-F6-AHJC<tspan font-size="12" dx="0.5" dy="-0.7">-</tspan><tspan dy="0.7" textLength="10.05" lengthAdjust="spacingAndGlyphs">T</tspan><tspan dx="-0.75">P</tspan></text>
<text transform="translate(936 666.9) rotate(-90) scale(1 1.16)">LUAD-J8-1200<tspan font-size="12" dx="0.5" dy="-0.7">-</tspan><tspan dy="0.7" textLength="10.05" lengthAdjust="spacingAndGlyphs">T</tspan><tspan dx="-0.75">P</tspan></text>
</g>
<g filter="url(#b2)">
<text transform="translate(81 666.9) rotate(-90) scale(1 1.16)">LUAD-B4-A8TE<tspan font-size="12" dx="0.5" dy="-0.7">-</tspan><tspan dy="0.7" textLength="10.05" lengthAdjust="spacingAndGlyphs">T</tspan><tspan dx="-0.75">P</tspan></text>
<text transform="translate(94 666.9) rotate(-90) scale(1 1.16)">LUAD-15-A8RG<tspan font-size="12" dx="0.5" dy="-0.7">-</tspan><tspan dy="0.7" textLength="10.05" lengthAdjust="spacingAndGlyphs">T</tspan><tspan dx="-0.75">P</tspan></text>
<text transform="translate(107 666.9) rotate(-90) scale(1 1.16)">LUAD-58-ACJJ<tspan font-size="12" dx="0.5" dy="-0.7">-</tspan><tspan dy="0.7" textLength="10.05" lengthAdjust="spacingAndGlyphs">T</tspan><tspan dx="-0.75">P</tspan></text>
<text transform="translate(120 666.9) rotate(-90) scale(1 1.16)">LUAD-14-AGRA<tspan font-size="12" dx="0.5" dy="-0.7">-</tspan><tspan dy="0.7" textLength="10.05" lengthAdjust="spacingAndGlyphs">T</tspan><tspan dx="-0.75">P</tspan></text>
<text transform="translate(133 666.9) rotate(-90) scale(1 1.16)">LUAD-67-A05G<tspan font-size="12" dx="0.5" dy="-0.7">-</tspan><tspan dy="0.7" textLength="10.05" lengthAdjust="spacingAndGlyphs">T</tspan><tspan dx="-0.75">P</tspan></text>
<text transform="translate(146 666.9) rotate(-90) scale(1 1.16)">LUAD-01-AN6O<tspan font-size="12" dx="0.5" dy="-0.7">-</tspan><tspan dy="0.7" textLength="10.05" lengthAdjust="spacingAndGlyphs">T</tspan><tspan dx="-0.75">P</tspan></text>
<text transform="translate(159 666.9) rotate(-90) scale(1 1.16)">LUAD-2J-AGJ8<tspan font-size="12" dx="0.5" dy="-0.7">-</tspan><tspan dy="0.7" textLength="10.05" lengthAdjust="spacingAndGlyphs">T</tspan><tspan dx="-0.75">P</tspan></text>
<text transform="translate(172 666.9) rotate(-90) scale(1 1.16)">LUAD-4G-AN8W<tspan font-size="12" dx="0.5" dy="-0.7">-</tspan><tspan dy="0.7" textLength="10.05" lengthAdjust="spacingAndGlyphs">T</tspan><tspan dx="-0.75">P</tspan></text>
<text transform="translate(185 666.9) rotate(-90) scale(1 1.16)">LUAD-CC-9156<tspan font-size="12" dx="0.5" dy="-0.7">-</tspan><tspan dy="0.7" textLength="10.05" lengthAdjust="spacingAndGlyphs">T</tspan><tspan dx="-0.75">P</tspan></text>
<text transform="translate(198 666.9) rotate(-90) scale(1 1.16)">LUAD-FD-AJGG<tspan font-size="12" dx="0.5" dy="-0.7">-</tspan><tspan dy="0.7" textLength="10.05" lengthAdjust="spacingAndGlyphs">T</tspan><tspan dx="-0.75">P</tspan></text>
<text transform="translate(211 666.9) rotate(-90) scale(1 1.16)">LUAD-CD-3645<tspan font-size="12" dx="0.5" dy="-0.7">-</tspan><tspan dy="0.7" textLength="10.05" lengthAdjust="spacingAndGlyphs">T</tspan><tspan dx="-0.75">P</tspan></text>
<text transform="translate(224 666.9) rotate(-90) scale(1 1.16)">LUAD-4G-1718<tspan font-size="12" dx="0.5" dy="-0.7">-</tspan><tspan dy="0.7" textLength="10.05" lengthAdjust="spacingAndGlyphs">T</tspan><tspan dx="-0.75">P</tspan></text>
<text transform="translate(237 666.9) rotate(-90) scale(1 1.16)">LUAD-H7-AQJ3<tspan font-size="12" dx="0.5" dy="-0.7">-</tspan><tspan dy="0.7" textLength="10.05" lengthAdjust="spacingAndGlyphs">T</tspan><tspan dx="-0.75">P</tspan></text>
<text transform="translate(250 666.9) rotate(-90) scale(1 1.16)">LUAD-J5-7609<tspan font-size="12" dx="0.5" dy="-0.7">-</tspan><tspan dy="0.7" textLength="10.05" lengthAdjust="spacingAndGlyphs">T</tspan><tspan dx="-0.75">P</tspan></text>
<text transform="translate(263 666.9) rotate(-90) scale(1 1.16)">LUAD-D3-ADOM<tspan font-size="12" dx="0.5" dy="-0.7">-</tspan><tspan dy="0.7" textLength="10.05" lengthAdjust="spacingAndGlyphs">T</tspan><tspan dx="-0.75">P</tspan></text>
<text transform="translate(276 666.9) rotate(-90) scale(1 1.16)">LUAD-A8-A41E<tspan font-size="12" dx="0.5" dy="-0.7">-</tspan><tspan dy="0.7" textLength="10.05" lengthAdjust="spacingAndGlyphs">T</tspan><tspan dx="-0.75">P</tspan></text>
<text transform="translate(289 666.9) rotate(-90) scale(1 1.16)">LUAD-5D-1491<tspan font-size="12" dx="0.5" dy="-0.7">-</tspan><tspan dy="0.7" textLength="10.05" lengthAdjust="spacingAndGlyphs">T</tspan><tspan dx="-0.75">P</tspan></text>
<text transform="translate(302 666.9) rotate(-90) scale(1 1.16)">LUAD-C8-8831<tspan font-size="12" dx="0.5" dy="-0.7">-</tspan><tspan dy="0.7" textLength="10.05" lengthAdjust="spacingAndGlyphs">T</tspan><tspan dx="-0.75">P</tspan></text>
<text transform="translate(315 666.9) rotate(-90) scale(1 1.16)">LUAD-68-AD0K<tspan font-size="12" dx="0.5" dy="-0.7">-</tspan><tspan dy="0.7" textLength="10.05" lengthAdjust="spacingAndGlyphs">T</tspan><tspan dx="-0.75">P</tspan></text>
<text transform="translate(328 666.9) rotate(-90) scale(1 1.16)">LUAD-B6-APD0<tspan font-size="12" dx="0.5" dy="-0.7">-</tspan><tspan dy="0.7" textLength="10.05" lengthAdjust="spacingAndGlyphs">T</tspan><tspan dx="-0.75">P</tspan></text>
<text transform="translate(341 666.9) rotate(-90) scale(1 1.16)">LUAD-1F-AO5A<tspan font-size="12" dx="0.5" dy="-0.7">-</tspan><tspan dy="0.7" textLength="10.05" lengthAdjust="spacingAndGlyphs">T</tspan><tspan dx="-0.75">P</tspan></text>
<text transform="translate(354 666.9) rotate(-90) scale(1 1.16)">LUAD-EG-A10V<tspan font-size="12" dx="0.5" dy="-0.7">-</tspan><tspan dy="0.7" textLength="10.05" lengthAdjust="spacingAndGlyphs">T</tspan><tspan dx="-0.75">P</tspan></text>
<text transform="translate(367 666.9) rotate(-90) scale(1 1.16)">LUAD-4F-AAE4<tspan font-size="12" dx="0.5" dy="-0.7">-</tspan><tspan dy="0.7" textLength="10.05" lengthAdjust="spacingAndGlyphs">T</tspan><tspan dx="-0.75">P</tspan></text>
<text transform="translate(380 666.9) rotate(-90) scale(1 1.16)">LUAD-EH-A6GY<tspan font-size="12" dx="0.5" dy="-0.7">-</tspan><tspan dy="0.7" textLength="10.05" lengthAdjust="spacingAndGlyphs">T</tspan><tspan dx="-0.75">P</tspan></text>
<text transform="translate(393 666.9) rotate(-90) scale(1 1.16)">LUAD-10-AJ6X<tspan font-size="12" dx="0.5" dy="-0.7">-</tspan><tspan dy="0.7" textLength="10.05" lengthAdjust="spacingAndGlyphs">T</tspan><tspan dx="-0.75">P</tspan></text>
<text transform="translate(406 666.9) rotate(-90) scale(1 1.16)">LUAD-1H-ABFA<tspan font-size="12" dx="0.5" dy="-0.7">-</tspan><tspan dy="0.7" textLength="10.05" lengthAdjust="spacingAndGlyphs">T</tspan><tspan dx="-0.75">P</tspan></text>
<text transform="translate(419 666.9) rotate(-90) scale(1 1.16)">LUAD-81-AZRX<tspan font-size="12" dx="0.5" dy="-0.7">-</tspan><tspan dy="0.7" textLength="10.05" lengthAdjust="spacingAndGlyphs">T</tspan><tspan dx="-0.75">P</tspan></text>
<text transform="translate(432 666.9) rotate(-90) scale(1 1.16)">LUAD-10-AAM9<tspan font-size="12" dx="0.5" dy="-0.7">-</tspan><tspan dy="0.7" textLength="10.05" lengthAdjust="spacingAndGlyphs">T</tspan><tspan dx="-0.75">P</tspan></text>
<text transform="translate(445 666.9) rotate(-90) scale(1 1.16)">LUAD-89-ANKW<tspan font-size="12" dx="0.5" dy="-0.7">-</tspan><tspan dy="0.7" textLength="10.05" lengthAdjust="spacingAndGlyphs">T</tspan><tspan dx="-0.75">P</tspan></text>
<text transform="translate(458 666.9) rotate(-90) scale(1 1.16)">LUAD-G8-AAID<tspan font-size="12" dx="0.5" dy="-0.7">-</tspan><tspan dy="0.7" textLength="10.05" lengthAdjust="spacingAndGlyphs">T</tspan><tspan dx="-0.75">P</tspan></text>
<text transform="translate(471 666.9) rotate(-90) scale(1 1.16)">LUAD-AG-ASZK<tspan font-size="12" dx="0.5" dy="-0.7">-</tspan><tspan dy="0.7" textLength="10.05" lengthAdjust="spacingAndGlyphs">T</tspan><tspan dx="-0.75">P</tspan></text>
<text transform="translate(484 666.9) rotate(-90) scale(1 1.16)">LUAD-44-4643<tspan font-size="12" dx="0.5" dy="-0.7">-</tspan><tspan dy="0.7" textLength="10.05" lengthAdjust="spacingAndGlyphs">T</tspan><tspan dx="-0.75">P</tspan></text>
<text transform="translate(497 666.9) rotate(-90) scale(1 1.16)">LUAD-D7-2467<tspan font-size="12" dx="0.5" dy="-0.7">-</tspan><tspan dy="0.7" textLength="10.05" lengthAdjust="spacingAndGlyphs">T</tspan><tspan dx="-0.75">P</tspan></text>
<text transform="translate(510 666.9) rotate(-90) scale(1 1.16)">LUAD-CG-1950<tspan font-size="12" dx="0.5" dy="-0.7">-</tspan><tspan dy="0.7" textLength="10.05" lengthAdjust="spacingAndGlyphs">T</tspan><tspan dx="-0.75">P</tspan></text>
<text transform="translate(523 666.9) rotate(-90) scale(1 1.16)">LUAD-9H-7534<tspan font-size="12" dx="0.5" dy="-0.7">-</tspan><tspan dy="0.7" textLength="10.05" lengthAdjust="spacingAndGlyphs">T</tspan><tspan dx="-0.75">P</tspan></text>
<text transform="translate(536 666.9) rotate(-90) scale(1 1.16)">LUAD-J3-AEBS<tspan font-size="12" dx="0.5" dy="-0.7">-</tspan><tspan dy="0.7" textLength="10.05" lengthAdjust="spacingAndGlyphs">T</tspan><tspan dx="-0.75">P</tspan></text>
<text transform="translate(549 666.9) rotate(-90) scale(1 1.16)">LUAD-F5-A0AK<tspan font-size="12" dx="0.5" dy="-0.7">-</tspan><tspan dy="0.7" textLength="10.05" lengthAdjust="spacingAndGlyphs">T</tspan><tspan dx="-0.75">P</tspan></text>
<text transform="translate(562 666.9) rotate(-90) scale(1 1.16)">LUAD-GH-3465<tspan font-size="12" dx="0.5" dy="-0.7">-</tspan><tspan dy="0.7" textLength="10.05" lengthAdjust="spacingAndGlyphs">T</tspan><tspan dx="-0.75">P</tspan></text>
<text transform="translate(575 666.9) rotate(-90) scale(1 1.16)">LUAD-01-AU3W<tspan font-size="12" dx="0.5" dy="-0.7">-</tspan><tspan dy="0.7" textLength="10.05" lengthAdjust="spacingAndGlyphs">T</tspan><tspan dx="-0.75">P</tspan></text>
<text transform="translate(588 666.9) rotate(-90) scale(1 1.16)">LUAD-13-6967<tspan font-size="12" dx="0.5" dy="-0.7">-</tspan><tspan dy="0.7" textLength="10.05" lengthAdjust="spacingAndGlyphs">T</tspan><tspan dx="-0.75">P</tspan></text>
<text transform="translate(601 666.9) rotate(-90) scale(1 1.16)">LUAD-HF-AG32<tspan font-size="12" dx="0.5" dy="-0.7">-</tspan><tspan dy="0.7" textLength="10.05" lengthAdjust="spacingAndGlyphs">T</tspan><tspan dx="-0.75">P</tspan></text>
<text transform="translate(614 666.9) rotate(-90) scale(1 1.16)">LUAD-J0-9496<tspan font-size="12" dx="0.5" dy="-0.7">-</tspan><tspan dy="0.7" textLength="10.05" lengthAdjust="spacingAndGlyphs">T</tspan><tspan dx="-0.75">P</tspan></text>
<text transform="translate(627 666.9) rotate(-90) scale(1 1.16)">LUAD-CE-4906<tspan font-size="12" dx="0.5" dy="-0.7">-</tspan><tspan dy="0.7" textLength="10.05" lengthAdjust="spacingAndGlyphs">T</tspan><tspan dx="-0.75">P</tspan></text>
<text transform="translate(640 666.9) rotate(-90) scale(1 1.16)">LUAD-B3-AT59<tspan font-size="12" dx="0.5" dy="-0.7">-</tspan><tspan dy="0.7" textLength="10.05" lengthAdjust="spacingAndGlyphs">T</tspan><tspan dx="-0.75">P</tspan></text>
<text transform="translate(653 666.9) rotate(-90) scale(1 1.16)">LUAD-2J-1145<tspan font-size="12" dx="0.5" dy="-0.7">-</tspan><tspan dy="0.7" textLength="10.05" lengthAdjust="spacingAndGlyphs">T</tspan><tspan dx="-0.75">P</tspan></text>
<text transform="translate(666 666.9) rotate(-90) scale(1 1.16)">LUAD-B8-ANUO<tspan font-size="12" dx="0.5" dy="-0.7">-</tspan><tspan dy="0.7" textLength="10.05" lengthAdjust="spacingAndGlyphs">T</tspan><tspan dx="-0.75">P</tspan></text>
<text transform="translate(679 666.9) rotate(-90) scale(1 1.16)">LUAD-E4-AQF9<tspan font-size="12" dx="0.5" dy="-0.7">-</tspan><tspan dy="0.7" textLength="10.05" lengthAdjust="spacingAndGlyphs">T</tspan><tspan dx="-0.75">P</tspan></text>
<text transform="translate(692 666.9) rotate(-90) scale(1 1.16)">LUAD-51-4207<tspan font-size="12" dx="0.5" dy="-0.7">-</tspan><tspan dy="0.7" textLength="10.05" lengthAdjust="spacingAndGlyphs">T</tspan><tspan dx="-0.75">P</tspan></text>
<text transform="translate(705 666.9) rotate(-90) scale(1 1.16)">LUAD-02-8608<tspan font-size="12" dx="0.5" dy="-0.7">-</tspan><tspan dy="0.7" textLength="10.05" lengthAdjust="spacingAndGlyphs">T</tspan><tspan dx="-0.75">P</tspan></text>
<text transform="translate(718 666.9) rotate(-90) scale(1 1.16)">LUAD-FE-AXY8<tspan font-size="12" dx="0.5" dy="-0.7">-</tspan><tspan dy="0.7" textLength="10.05" lengthAdjust="spacingAndGlyphs">T</tspan><tspan dx="-0.75">P</tspan></text>
<text transform="translate(731 666.9) rotate(-90) scale(1 1.16)">LUAD-33-A8YE<tspan font-size="12" dx="0.5" dy="-0.7">-</tspan><tspan dy="0.7" textLength="10.05" lengthAdjust="spacingAndGlyphs">T</tspan><tspan dx="-0.75">P</tspan></text>
<text transform="translate(744 666.9) rotate(-90) scale(1 1.16)">LUAD-3G-AKRC<tspan font-size="12" dx="0.5" dy="-0.7">-</tspan><tspan dy="0.7" textLength="10.05" lengthAdjust="spacingAndGlyphs">T</tspan><tspan dx="-0.75">P</tspan></text>
<text transform="translate(757 666.9) rotate(-90) scale(1 1.16)">LUAD-EI-A9S7<tspan font-size="12" dx="0.5" dy="-0.7">-</tspan><tspan dy="0.7" textLength="10.05" lengthAdjust="spacingAndGlyphs">T</tspan><tspan dx="-0.75">P</tspan></text>
<text transform="translate(770 666.9) rotate(-90) scale(1 1.16)">LUAD-0B-AFKZ<tspan font-size="12" dx="0.5" dy="-0.7">-</tspan><tspan dy="0.7" textLength="10.05" lengthAdjust="spacingAndGlyphs">T</tspan><tspan dx="-0.75">P</tspan></text>
<text transform="translate(783 666.9) rotate(-90) scale(1 1.16)">LUAD-4D-0689<tspan font-size="12" dx="0.5" dy="-0.7">-</tspan><tspan dy="0.7" textLength="10.05" lengthAdjust="spacingAndGlyphs">T</tspan><tspan dx="-0.75">P</tspan></text>
<text transform="translate(796 666.9) rotate(-90) scale(1 1.16)">LUAD-I7-ALKF<tspan font-size="12" dx="0.5" dy="-0.7">-</tspan><tspan dy="0.7" textLength="10.05" lengthAdjust="spacingAndGlyphs">T</tspan><tspan dx="-0.75">P</tspan></text>
<text transform="translate(809 666.9) rotate(-90) scale(1 1.16)">LUAD-CH-2367<tspan font-size="12" dx="0.5" dy="-0.7">-</tspan><tspan dy="0.7" textLength="10.05" lengthAdjust="spacingAndGlyphs">T</tspan><tspan dx="-0.75">P</tspan></text>
<text transform="translate(822 666.9) rotate(-90) scale(1 1.16)">LUAD-D0-4804<tspan font-size="12" dx="0.5" dy="-0.7">-</tspan><tspan dy="0.7" textLength="10.05" lengthAdjust="spacingAndGlyphs">T</tspan><tspan dx="-0.75">P</tspan></text>
<text transform="translate(835 666.9) rotate(-90) scale(1 1.16)">LUAD-IA-AFMH<tspan font-size="12" dx="0.5" dy="-0.7">-</tspan><tspan dy="0.7" textLength="10.05" lengthAdjust="spacingAndGlyphs">T</tspan><tspan dx="-0.75">P</tspan></text>
<text transform="translate(848 666.9) rotate(-90) scale(1 1.16)">LUAD-I7-APV1<tspan font-size="12" dx="0.5" dy="-0.7">-</tspan><tspan dy="0.7" textLength="10.05" lengthAdjust="spacingAndGlyphs">T</tspan><tspan dx="-0.75">P</tspan></text>
<text transform="translate(861 666.9) rotate(-90) scale(1 1.16)">LUAD-47-1348<tspan font-size="12" dx="0.5" dy="-0.7">-</tspan><tspan dy="0.7" textLength="10.05" lengthAdjust="spacingAndGlyphs">T</tspan><tspan dx="-0.75">P</tspan></text>
<text transform="translate(874 666.9) rotate(-90) scale(1 1.16)">LUAD-2H-6092<tspan font-size="12" dx="0.5" dy="-0.7">-</tspan><tspan dy="0.7" textLength="10.05" lengthAdjust="spacingAndGlyphs">T</tspan><tspan dx="-0.75">P</tspan></text>
<text transform="translate(887 666.9) rotate(-90) scale(1 1.16)">LUAD-D0-7365<tspan font-size="12" dx="0.5" dy="-0.7">-</tspan><tspan dy="0.7" textLength="10.05" lengthAdjust="spacingAndGlyphs">T</tspan><tspan dx="-0.75">P</tspan></text>
<text transform="translate(900 666.9) rotate(-90) scale(1 1.16)">LUAD-31-3516<tspan font-size="12" dx="0.5" dy="-0.7">-</tspan><tspan dy="0.7" textLength="10.05" lengthAdjust="spacingAndGlyphs">T</tspan><tspan dx="-0.75">P</tspan></text>
<text transform="translate(913 666.9) rotate(-90) scale(1 1.16)">LUAD-26-2277<tspan font-size="12" dx="0.5" dy="-0.7">-</tspan><tspan dy="0.7" textLength="10.05" lengthAdjust="spacingAndGlyphs">T</tspan><tspan dx="-0.75">P</tspan></text>
<text transform="translate(926 666.9) rotate(-90) scale(1 1.16)">LUAD-39-A7AK<tspan font-size="12" dx="0.5" dy="-0.7">-</tspan><tspan dy="0.7" textLength="10.05" lengthAdjust="spacingAndGlyphs">T</tspan><tspan dx="-0.75">P</tspan></text>
<text transform="translate(939 666.9) rotate(-90) scale(1 1.16)">LUAD-C4-ABXA<tspan font-size="12" dx="0.5" dy="-0.7">-</tspan><tspan dy="0.7" textLength="10.05" lengthAdjust="spacingAndGlyphs">T</tspan><tspan dx="-0.75">P</tspan></text>
</g>
<g filter="url(#b2)">
<text transform="translate(83 666.9) rotate(-90) scale(1 1.16)">LUAD-3C-2326<tspan font-size="12" dx="0.5" dy="-0.7">-</tspan><tspan dy="0.7" textLength="10.05" lengthAdjust="spacingAndGlyphs">T</tspan><tspan dx="-0.75">P</tspan></text>
<text transform="translate(96 666.9) rotate(-90) scale(1 1.16)">LUAD-C4-AWVK<tspan font-size="12" dx="0.5" dy="-0.7">-</tspan><tspan dy="0.7" textLength="10.05" lengthAdjust="spacingAndGlyphs">T</tspan><tspan dx="-0.75">P</tspan></text>
<text transform="translate(109 666.9) rotate(-90) scale(1 1.16)">LUAD-G6-AWBH<tspan font-size="12" dx="0.5" dy="-0.7">-</tspan><tspan dy="0.7" textLength="10.05" lengthAdjust="spacingAndGlyphs">T</tspan><tspan dx="-0.75">P</tspan></text>
<text transform="translate(122 666.9) rotate(-90) scale(1 1.16)">LUAD-12-6849<tspan font-size="12" dx="0.5" dy="-0.7">-</tspan><tspan dy="0.7" textLength="10.05" lengthAdjust="spacingAndGlyphs">T</tspan><tspan dx="-0.75">P</tspan></text>
<text transform="translate(135 666.9) rotate(-90) scale(1 1.16)">LUAD-24-A2P1<tspan font-size="12" dx="0.5" dy="-0.7">-</tspan><tspan dy="0.7" textLength="10.05" lengthAdjust="spacingAndGlyphs">T</tspan><tspan dx="-0.75">P</tspan></text>
<text transform="translate(148 666.9) rotate(-90) scale(1 1.16)">LUAD-EH-A1YF<tspan font-size="12" dx="0.5" dy="-0.7">-</tspan><tspan dy="0.7" textLength="10.05" lengthAdjust="spacingAndGlyphs">T</tspan><tspan dx="-0.75">P</tspan></text>
<text transform="translate(161 666.9) rotate(-90) scale(1 1.16)">LUAD-0F-AH6D<tspan font-size="12" dx="0.5" dy="-0.7">-</tspan><tspan dy="0.7" textLength="10.05" lengthAdjust="spacingAndGlyphs">T</tspan><tspan dx="-0.75">P</tspan></text>
<text transform="translate(174 666.9) rotate(-90) scale(1 1.16)">LUAD-83-3776<tspan font-size="12" dx="0.5" dy="-0.7">-</tspan><tspan dy="0.7" textLength="10.05" lengthAdjust="spacingAndGlyphs">T</tspan><tspan dx="-0.75">P</tspan></text>
<text transform="translate(187 666.9) rotate(-90) scale(1 1.16)">LUAD-81-A3I9<tspan font-size="12" dx="0.5" dy="-0.7">-</tspan><tspan dy="0.7" textLength="10.05" lengthAdjust="spacingAndGlyphs">T</tspan><tspan dx="-0.75">P</tspan></text>
<text transform="translate(200 666.9) rotate(-90) scale(1 1.16)">LUAD-C7-AZP7<tspan font-size="12" dx="0.5" dy="-0.7">-</tspan><tspan dy="0.7" textLength="10.05" lengthAdjust="spacingAndGlyphs">T</tspan><tspan dx="-0.75">P</tspan></text>
<text transform="translate(213 666.9) rotate(-90) scale(1 1.16)">LUAD-1F-AN8W<tspan font-size="12" dx="0.5" dy="-0.7">-</tspan><tspan dy="0.7" textLength="10.05" lengthAdjust="spacingAndGlyphs">T</tspan><tspan dx="-0.75">P</tspan></text>
<text transform="translate(226 666.9) rotate(-90) scale(1 1.16)">LUAD-10-3904<tspan font-size="12" dx="0.5" dy="-0.7">-</tspan><tspan dy="0.7" textLength="10.05" lengthAdjust="spacingAndGlyphs">T</tspan><tspan dx="-0.75">P</tspan></text>
<text transform="translate(239 666.9) rotate(-90) scale(1 1.16)">LUAD-06-AQ5G<tspan font-size="12" dx="0.5" dy="-0.7">-</tspan><tspan dy="0.7" textLength="10.05" lengthAdjust="spacingAndGlyphs">T</tspan><tspan dx="-0.75">P</tspan></text>
<text transform="translate(252 666.9) rotate(-90) scale(1 1.16)">LUAD-4C-A19Q<tspan font-size="12" dx="0.5" dy="-0.7">-</tspan><tspan dy="0.7" textLength="10.05" lengthAdjust="spacingAndGlyphs">T</tspan><tspan dx="-0.75">P</tspan></text>
<text transform="translate(265 666.9) rotate(-90) scale(1 1.16)">LUAD-9D-AUCN<tspan font-size="12" dx="0.5" dy="-0.7">-</tspan><tspan dy="0.7" textLength="10.05" lengthAdjust="spacingAndGlyphs">T</tspan><tspan dx="-0.75">P</tspan></text>
<text transform="translate(278 666.9) rotate(-90) scale(1 1.16)">LUAD-3F-7646<tspan font-size="12" dx="0.5" dy="-0.7">-</tspan><tspan dy="0.7" textLength="10.05" lengthAdjust="spacingAndGlyphs">T</tspan><tspan dx="-0.75">P</tspan></text>
<text transform="translate(291 666.9) rotate(-90) scale(1 1.16)">LUAD-63-ASBE<tspan font-size="12" dx="0.5" dy="-0.7">-</tspan><tspan dy="0.7" textLength="10.05" lengthAdjust="spacingAndGlyphs">T</tspan><tspan dx="-0.75">P</tspan></text>
<text transform="translate(304 666.9) rotate(-90) scale(1 1.16)">LUAD-E1-AUES<tspan font-size="12" dx="0.5" dy="-0.7">-</tspan><tspan dy="0.7" textLength="10.05" lengthAdjust="spacingAndGlyphs">T</tspan><tspan dx="-0.75">P</tspan></text>
<text transform="translate(317 666.9) rotate(-90) scale(1 1.16)">LUAD-DB-AJ4D<tspan font-size="12" dx="0.5" dy="-0.7">-</tspan><tspan dy="0.7" textLength="10.05" lengthAdjust="spacingAndGlyphs">T</tspan><tspan dx="-0.75">P</tspan></text>
<text transform="translate(330 666.9) rotate(-90) scale(1 1.16)">LUAD-D5-A5PN<tspan font-size="12" dx="0.5" dy="-0.7">-</tspan><tspan dy="0.7" textLength="10.05" lengthAdjust="spacingAndGlyphs">T</tspan><tspan dx="-0.75">P</tspan></text>
<text transform="translate(343 666.9) rotate(-90) scale(1 1.16)">LUAD-7J-ACUB<tspan font-size="12" dx="0.5" dy="-0.7">-</tspan><tspan dy="0.7" textLength="10.05" lengthAdjust="spacingAndGlyphs">T</tspan><tspan dx="-0.75">P</tspan></text>
<text transform="translate(356 666.9) rotate(-90) scale(1 1.16)">LUAD-E7-ATBU<tspan font-size="12" dx="0.5" dy="-0.7">-</tspan><tspan dy="0.7" textLength="10.05" lengthAdjust="spacingAndGlyphs">T</tspan><tspan dx="-0.75">P</tspan></text>
<text transform="translate(369 666.9) rotate(-90) scale(1 1.16)">LUAD-BJ-2594<tspan font-size="12" dx="0.5" dy="-0.7">-</tspan><tspan dy="0.7" textLength="10.05" lengthAdjust="spacingAndGlyphs">T</tspan><tspan dx="-0.75">P</tspan></text>
<text transform="translate(382 666.9) rotate(-90) scale(1 1.16)">LUAD-CB-AN9N<tspan font-size="12" dx="0.5" dy="-0.7">-</tspan><tspan dy="0.7" textLength="10.05" lengthAdjust="spacingAndGlyphs">T</tspan><tspan dx="-0.75">P</tspan></text>
<text transform="translate(395 666.9) rotate(-90) scale(1 1.16)">LUAD-BH-AJ8D<tspan font-size="12" dx="0.5" dy="-0.7">-</tspan><tspan dy="0.7" textLength="10.05" lengthAdjust="spacingAndGlyphs">T</tspan><tspan dx="-0.75">P</tspan></text>
<text transform="translate(408 666.9) rotate(-90) scale(1 1.16)">LUAD-13-AZC9<tspan font-size="12" dx="0.5" dy="-0.7">-</tspan><tspan dy="0.7" textLength="10.05" lengthAdjust="spacingAndGlyphs">T</tspan><tspan dx="-0.75">P</tspan></text>
<text transform="translate(421 666.9) rotate(-90) scale(1 1.16)">LUAD-89-3180<tspan font-size="12" dx="0.5" dy="-0.7">-</tspan><tspan dy="0.7" textLength="10.05" lengthAdjust="spacingAndGlyphs">T</tspan><tspan dx="-0.75">P</tspan></text>
<text transform="translate(434 666.9) rotate(-90) scale(1 1.16)">LUAD-00-A242<tspan font-size="12" dx="0.5" dy="-0.7">-</tspan><tspan dy="0.7" textLength="10.05" lengthAdjust="spacingAndGlyphs">T</tspan><tspan dx="-0.75">P</tspan></text>
<text transform="translate(447 666.9) rotate(-90) scale(1 1.16)">LUAD-F9-0606<tspan font-size="12" dx="0.5" dy="-0.7">-</tspan><tspan dy="0.7" textLength="10.05" lengthAdjust="spacingAndGlyphs">T</tspan><tspan dx="-0.75">P</tspan></text>
<text transform="translate(460 666.9) rotate(-90) scale(1 1.16)">LUAD-7F-A5VZ<tspan font-size="12" dx="0.5" dy="-0.7">-</tspan><tspan dy="0.7" textLength="10.05" lengthAdjust="spacingAndGlyphs">T</tspan><tspan dx="-0.75">P</tspan></text>
<text transform="translate(473 666.9) rotate(-90) scale(1 1.16)">LUAD-5E-AGE8<tspan font-size="12" dx="0.5" dy="-0.7">-</tspan><tspan dy="0.7" textLength="10.05" lengthAdjust="spacingAndGlyphs">T</tspan><tspan dx="-0.75">P</tspan></text>
<text transform="translate(486 666.9) rotate(-90) scale(1 1.16)">LUAD-33-AOT2<tspan font-size="12" dx="0.5" dy="-0.7">-</tspan><tspan dy="0.7" textLength="10.05" lengthAdjust="spacingAndGlyphs">T</tspan><tspan dx="-0.75">P</tspan></text>
<text transform="translate(499 666.9) rotate(-90) scale(1 1.16)">LUAD-E0-6825<tspan font-size="12" dx="0.5" dy="-0.7">-</tspan><tspan dy="0.7" textLength="10.05" lengthAdjust="spacingAndGlyphs">T</tspan><tspan dx="-0.75">P</tspan></text>
<text transform="translate(512 666.9) rotate(-90) scale(1 1.16)">LUAD-88-A304<tspan font-size="12" dx="0.5" dy="-0.7">-</tspan><tspan dy="0.7" textLength="10.05" lengthAdjust="spacingAndGlyphs">T</tspan><tspan dx="-0.75">P</tspan></text>
<text transform="translate(525 666.9) rotate(-90) scale(1 1.16)">LUAD-C8-2704<tspan font-size="12" dx="0.5" dy="-0.7">-</tspan><tspan dy="0.7" textLength="10.05" lengthAdjust="spacingAndGlyphs">T</tspan><tspan dx="-0.75">P</tspan></text>
<text transform="translate(538 666.9) rotate(-90) scale(1 1.16)">LUAD-B4-APYA<tspan font-size="12" dx="0.5" dy="-0.7">-</tspan><tspan dy="0.7" textLength="10.05" lengthAdjust="spacingAndGlyphs">T</tspan><tspan dx="-0.75">P</tspan></text>
<text transform="translate(551 666.9) rotate(-90) scale(1 1.16)">LUAD-EI-AITN<tspan font-size="12" dx="0.5" dy="-0.7">-</tspan><tspan dy="0.7" textLength="10.05" lengthAdjust="spacingAndGlyphs">T</tspan><tspan dx="-0.75">P</tspan></text>
<text transform="translate(564 666.9) rotate(-90) scale(1 1.16)">LUAD-D8-AIIM<tspan font-size="12" dx="0.5" dy="-0.7">-</tspan><tspan dy="0.7" textLength="10.05" lengthAdjust="spacingAndGlyphs">T</tspan><tspan dx="-0.75">P</tspan></text>
<text transform="translate(577 666.9) rotate(-90) scale(1 1.16)">LUAD-HJ-A95D<tspan font-size="12" dx="0.5" dy="-0.7">-</tspan><tspan dy="0.7" textLength="10.05" lengthAdjust="spacingAndGlyphs">T</tspan><tspan dx="-0.75">P</tspan></text>
<text transform="translate(590 666.9) rotate(-90) scale(1 1.16)">LUAD-20-9927<tspan font-size="12" dx="0.5" dy="-0.7">-</tspan><tspan dy="0.7" textLength="10.05" lengthAdjust="spacingAndGlyphs">T</tspan><tspan dx="-0.75">P</tspan></text>
<text transform="translate(603 666.9) rotate(-90) scale(1 1.16)">LUAD-01-A5OJ<tspan font-size="12" dx="0.5" dy="-0.7">-</tspan><tspan dy="0.7" textLength="10.05" lengthAdjust="spacingAndGlyphs">T</tspan><tspan dx="-0.75">P</tspan></text>
<text transform="translate(616 666.9) rotate(-90) scale(1 1.16)">LUAD-7C-AOES<tspan font-size="12" dx="0.5" dy="-0.7">-</tspan><tspan dy="0.7" textLength="10.05" lengthAdjust="spacingAndGlyphs">T</tspan><tspan dx="-0.75">P</tspan></text>
<text transform="translate(629 666.9) rotate(-90) scale(1 1.16)">LUAD-EH-AM4E<tspan font-size="12" dx="0.5" dy="-0.7">-</tspan><tspan dy="0.7" textLength="10.05" lengthAdjust="spacingAndGlyphs">T</tspan><tspan dx="-0.75">P</tspan></text>
<text transform="translate(642 666.9) rotate(-90) scale(1 1.16)">LUAD-AJ-AHX1<tspan font-size="12" dx="0.5" dy="-0.7">-</tspan><tspan dy="0.7" textLength="10.05" lengthAdjust="spacingAndGlyphs">T</tspan><tspan dx="-0.75">P</tspan></text>
<text transform="translate(655 666.9) rotate(-90) scale(1 1.16)">LUAD-I7-8627<tspan font-size="12" dx="0.5" dy="-0.7">-</tspan><tspan dy="0.7" textLength="10.05" lengthAdjust="spacingAndGlyphs">T</tspan><tspan dx="-0.75">P</tspan></text>
<text transform="translate(668 666.9) rotate(-90) scale(1 1.16)">LUAD-5E-A90T<tspan font-size="12" dx="0.5" dy="-0.7">-</tspan><tspan dy="0.7" textLength="10.05" lengthAdjust="spacingAndGlyphs">T</tspan><tspan dx="-0.75">P</tspan></text>
<text transform="translate(681 666.9) rotate(-90) scale(1 1.16)">LUAD-08-AILA<tspan font-size="12" dx="0.5" dy="-0.7">-</tspan><tspan dy="0.7" textLength="10.05" lengthAdjust="spacingAndGlyphs">T</tspan><tspan dx="-0.75">P</tspan></text>
<text transform="translate(694 666.9) rotate(-90) scale(1 1.16)">LUAD-GA-AS0X<tspan font-size="12" dx="0.5" dy="-0.7">-</tspan><tspan dy="0.7" textLength="10.05" lengthAdjust="spacingAndGlyphs">T</tspan><tspan dx="-0.75">P</tspan></text>
<text transform="translate(707 666.9) rotate(-90) scale(1 1.16)">LUAD-BA-AV50<tspan font-size="12" dx="0.5" dy="-0.7">-</tspan><tspan dy="0.7" textLength="10.05" lengthAdjust="spacingAndGlyphs">T</tspan><tspan dx="-0.75">P</tspan></text>
<text transform="translate(720 666.9) rotate(-90) scale(1 1.16)">LUAD-07-3922<tspan font-size="12" dx="0.5" dy="-0.7">-</tspan><tspan dy="0.7" textLength="10.05" lengthAdjust="spacingAndGlyphs">T</tspan><tspan dx="-0.75">P</tspan></text>
<text transform="translate(733 666.9) rotate(-90) scale(1 1.16)">LUAD-74-7620<tspan font-size="12" dx="0.5" dy="-0.7">-</tspan><tspan dy="0.7" textLength="10.05" lengthAdjust="spacingAndGlyphs">T</tspan><tspan dx="-0.75">P</tspan></text>
<text transform="translate(746 666.9) rotate(-90) scale(1 1.16)">LUAD-G0-AQPT<tspan font-size="12" dx="0.5" dy="-0.7">-</tspan><tspan dy="0.7" textLength="10.05" lengthAdjust="spacingAndGlyphs">T</tspan><tspan dx="-0.75">P</tspan></text>
<text transform="translate(759 666.9) rotate(-90) scale(1 1.16)">LUAD-G4-6944<tspan font-size="12" dx="0.5" dy="-0.7">-</tspan><tspan dy="0.7" textLength="10.05" lengthAdjust="spacingAndGlyphs">T</tspan><tspan dx="-0.75">P</tspan></text>
<text transform="translate(772 666.9) rotate(-90) scale(1 1.16)">LUAD-AF-ADI3<tspan font-size="12" dx="0.5" dy="-0.7">-</tspan><tspan dy="0.7" textLength="10.05" lengthAdjust="spacingAndGlyphs">T</tspan><tspan dx="-0.75">P</tspan></text>
<text transform="translate(785 666.9) rotate(-90) scale(1 1.16)">LUAD-3F-A9QH<tspan font-size="12" dx="0.5" dy="-0.7">-</tspan><tspan dy="0.7" textLength="10.05" lengthAdjust="spacingAndGlyphs">T</tspan><tspan dx="-0.75">P</tspan></text>
<text transform="translate(798 666.9) rotate(-90) scale(1 1.16)">LUAD-A6-0004<tspan font-size="12" dx="0.5" dy="-0.7">-</tspan><tspan dy="0.7" textLength="10.05" lengthAdjust="spacingAndGlyphs">T</tspan><tspan dx="-0.75">P</tspan></text>
<text transform="translate(811 666.9) rotate(-90) scale(1 1.16)">LUAD-CE-9581<tspan font-size="12" dx="0.5" dy="-0.7">-</tspan><tspan dy="0.7" textLength="10.05" lengthAdjust="spacingAndGlyphs">T</tspan><tspan dx="-0.75">P</tspan></text>
<text transform="translate(824 666.9) rotate(-90) scale(1 1.16)">LUAD-C3-A1CB<tspan font-size="12" dx="0.5" dy="-0.7">-</tspan><tspan dy="0.7" textLength="10.05" lengthAdjust="spacingAndGlyphs">T</tspan><tspan dx="-0.75">P</tspan></text>
<text transform="translate(837 666.9) rotate(-90) scale(1 1.16)">LUAD-51-A64M<tspan font-size="12" dx="0.5" dy="-0.7">-</tspan><tspan dy="0.7" textLength="10.05" lengthAdjust="spacingAndGlyphs">T</tspan><tspan dx="-0.75">P</tspan></text>
<text transform="translate(850 666.9) rotate(-90) scale(1 1.16)">LUAD-72-AMOB<tspan font-size="12" dx="0.5" dy="-0.7">-</tspan><tspan dy="0.7" textLength="10.05" lengthAdjust="spacingAndGlyphs">T</tspan><tspan dx="-0.75">P</tspan></text>
<text transform="translate(863 666.9) rotate(-90) scale(1 1.16)">LUAD-4H-AFAN<tspan font-size="12" dx="0.5" dy="-0.7">-</tspan><tspan dy="0.7" textLength="10.05" lengthAdjust="spacingAndGlyphs">T</tspan><tspan dx="-0.75">P</tspan></text>
<text transform="translate(876 666.9) rotate(-90) scale(1 1.16)">LUAD-90-A5BE<tspan font-size="12" dx="0.5" dy="-0.7">-</tspan><tspan dy="0.7" textLength="10.05" lengthAdjust="spacingAndGlyphs">T</tspan><tspan dx="-0.75">P</tspan></text>
<text transform="translate(889 666.9) rotate(-90) scale(1 1.16)">LUAD-35-AHE2<tspan font-size="12" dx="0.5" dy="-0.7">-</tspan><tspan dy="0.7" textLength="10.05" lengthAdjust="spacingAndGlyphs">T</tspan><tspan dx="-0.75">P</tspan></text>
<text transform="translate(902 666.9) rotate(-90) scale(1 1.16)">LUAD-CJ-4815<tspan font-size="12" dx="0.5" dy="-0.7">-</tspan><tspan dy="0.7" textLength="10.05" lengthAdjust="spacingAndGlyphs">T</tspan><tspan dx="-0.75">P</tspan></text>
<text transform="translate(915 666.9) rotate(-90) scale(1 1.16)">LUAD-77-AS8M<tspan font-size="12" dx="0.5" dy="-0.7">-</tspan><tspan dy="0.7" textLength="10.05" lengthAdjust="spacingAndGlyphs">T</tspan><tspan dx="-0.75">P</tspan></text>
<text transform="translate(928 666.9) rotate(-90) scale(1 1.16)">LUAD-EE-AIAZ<tspan font-size="12" dx="0.5" dy="-0.7">-</tspan><tspan dy="0.7" textLength="10.05" lengthAdjust="spacingAndGlyphs">T</tspan><tspan dx="-0.75">P</tspan></text>
<text transform="translate(941 666.9) rotate(-90) scale(1 1.16)">LUAD-39-5625<tspan font-size="12" dx="0.5" dy="-0.7">-</tspan><tspan dy="0.7" textLength="10.05" lengthAdjust="spacingAndGlyphs">T</tspan><tspan dx="-0.75">P</tspan></text>
</g>
<g filter="url(#b2)">
<text transform="translate(85 666.9) rotate(-90) scale(1 1.16)">LUAD-GC-ACMK<tspan font-size="12" dx="0.5" dy="-0.7">-</tspan><tspan dy="0.7" textLength="10.05" lengthAdjust="spacingAndGlyphs">T</tspan><tspan dx="-0.75">P</tspan></text>
<text transform="translate(98 666.9) rotate(-90) scale(1 1.16)">LUAD-28-ABR4<tspan font-size="12" dx="0.5" dy="-0.7">-</tspan><tspan dy="0.7" textLength="10.05" lengthAdjust="spacingAndGlyphs">T</tspan><tspan dx="-0.75">P</tspan></text>
<text transform="translate(111 666.9) rotate(-90) scale(1 1.16)">LUAD-B0-0008<tspan font-size="12" dx="0.5" dy="-0.7">-</tspan><tspan dy="0.7" textLength="10.05" lengthAdjust="spacingAndGlyphs">T</tspan><tspan dx="-0.75">P</tspan></text>
<text transform="translate(124 666.9) rotate(-90) scale(1 1.16)">LUAD-79-ABAH<tspan font-size="12" dx="0.5" dy="-0.7">-</tspan><tspan dy="0.7" textLength="10.05" lengthAdjust="spacingAndGlyphs">T</tspan><tspan dx="-0.75">P</tspan></text>
<text transform="translate(137 666.9) rotate(-90) scale(1 1.16)">LUAD-99-1982<tspan font-size="12" dx="0.5" dy="-0.7">-</tspan><tspan dy="0.7" textLength="10.05" lengthAdjust="spacingAndGlyphs">T</tspan><tspan dx="-0.75">P</tspan></text>
<text transform="translate(150 666.9) rotate(-90) scale(1 1.16)">LUAD-F8-A4WY<tspan font-size="12" dx="0.5" dy="-0.7">-</tspan><tspan dy="0.7" textLength="10.05" lengthAdjust="spacingAndGlyphs">T</tspan><tspan dx="-0.75">P</tspan></text>
<text transform="translate(163 666.9) rotate(-90) scale(1 1.16)">LUAD-F9-4777<tspan font-size="12" dx="0.5" dy="-0.7">-</tspan><tspan dy="0.7" textLength="10.05" lengthAdjust="spacingAndGlyphs">T</tspan><tspan dx="-0.75">P</tspan></text>
<text transform="translate(176 666.9) rotate(-90) scale(1 1.16)">LUAD-05-AVSP<tspan font-size="12" dx="0.5" dy="-0.7">-</tspan><tspan dy="0.7" textLength="10.05" lengthAdjust="spacingAndGlyphs">T</tspan><tspan dx="-0.75">P</tspan></text>
<text transform="translate(189 666.9) rotate(-90) scale(1 1.16)">LUAD-78-AKCN<tspan font-size="12" dx="0.5" dy="-0.7">-</tspan><tspan dy="0.7" textLength="10.05" lengthAdjust="spacingAndGlyphs">T</tspan><tspan dx="-0.75">P</tspan></text>
<text transform="translate(202 666.9) rotate(-90) scale(1 1.16)">LUAD-55-AWVZ<tspan font-size="12" dx="0.5" dy="-0.7">-</tspan><tspan dy="0.7" textLength="10.05" lengthAdjust="spacingAndGlyphs">T</tspan><tspan dx="-0.75">P</tspan></text>
<text transform="translate(215 666.9) rotate(-90) scale(1 1.16)">LUAD-G6-AFOP<tspan font-size="12" dx="0.5" dy="-0.7">-</tspan><tspan dy="0.7" textLength="10.05" lengthAdjust="spacingAndGlyphs">T</tspan><tspan dx="-0.75">P</tspan></text>
<text transform="translate(228 666.9) rotate(-90) scale(1 1.16)">LUAD-48-AR76<tspan font-size="12" dx="0.5" dy="-0.7">-</tspan><tspan dy="0.7" textLength="10.05" lengthAdjust="spacingAndGlyphs">T</tspan><tspan dx="-0.75">P</tspan></text>
<text transform="translate(241 666.9) rotate(-90) scale(1 1.16)">LUAD-7D-3705<tspan font-size="12" dx="0.5" dy="-0.7">-</tspan><tspan dy="0.7" textLength="10.05" lengthAdjust="spacingAndGlyphs">T</tspan><tspan dx="-0.75">P</tspan></text>
<text transform="translate(254 666.9) rotate(-90) scale(1 1.16)">LUAD-11-ASK7<tspan font-size="12" dx="0.5" dy="-0.7">-</tspan><tspan dy="0.7" textLength="10.05" lengthAdjust="spacingAndGlyphs">T</tspan><tspan dx="-0.75">P</tspan></text>
<text transform="translate(267 666.9) rotate(-90) scale(1 1.16)">LUAD-HE-ANU1<tspan font-size="12" dx="0.5" dy="-0.7">-</tspan><tspan dy="0.7" textLength="10.05" lengthAdjust="spacingAndGlyphs">T</tspan><tspan dx="-0.75">P</tspan></text>
<text transform="translate(280 666.9) rotate(-90) scale(1 1.16)">LUAD-F4-2042<tspan font-size="12" dx="0.5" dy="-0.7">-</tspan><tspan dy="0.7" textLength="10.05" lengthAdjust="spacingAndGlyphs">T</tspan><tspan dx="-0.75">P</tspan></text>
<text transform="translate(293 666.9) rotate(-90) scale(1 1.16)">LUAD-4D-AFY7<tspan font-size="12" dx="0.5" dy="-0.7">-</tspan><tspan dy="0.7" textLength="10.05" lengthAdjust="spacingAndGlyphs">T</tspan><tspan dx="-0.75">P</tspan></text>
<text transform="translate(306 666.9) rotate(-90) scale(1 1.16)">LUAD-B1-3103<tspan font-size="12" dx="0.5" dy="-0.7">-</tspan><tspan dy="0.7" textLength="10.05" lengthAdjust="spacingAndGlyphs">T</tspan><tspan dx="-0.75">P</tspan></text>
<text transform="translate(319 666.9) rotate(-90) scale(1 1.16)">LUAD-1F-A4Q6<tspan font-size="12" dx="0.5" dy="-0.7">-</tspan><tspan dy="0.7" textLength="10.05" lengthAdjust="spacingAndGlyphs">T</tspan><tspan dx="-0.75">P</tspan></text>
<text transform="translate(332 666.9) rotate(-90) scale(1 1.16)">LUAD-E5-A3Z9<tspan font-size="12" dx="0.5" dy="-0.7">-</tspan><tspan dy="0.7" textLength="10.05" lengthAdjust="spacingAndGlyphs">T</tspan><tspan dx="-0.75">P</tspan></text>
<text transform="translate(345 666.9) rotate(-90) scale(1 1.16)">LUAD-I6-AXAO<tspan font-size="12" dx="0.5" dy="-0.7">-</tspan><tspan dy="0.7" textLength="10.05" lengthAdjust="spacingAndGlyphs">T</tspan><tspan dx="-0.75">P</tspan></text>
<text transform="translate(358 666.9) rotate(-90) scale(1 1.16)">LUAD-C3-AMRN<tspan font-size="12" dx="0.5" dy="-0.7">-</tspan><tspan dy="0.7" textLength="10.05" lengthAdjust="spacingAndGlyphs">T</tspan><tspan dx="-0.75">P</tspan></text>
<text transform="translate(371 666.9) rotate(-90) scale(1 1.16)">LUAD-E4-AUDG<tspan font-size="12" dx="0.5" dy="-0.7">-</tspan><tspan dy="0.7" textLength="10.05" lengthAdjust="spacingAndGlyphs">T</tspan><tspan dx="-0.75">P</tspan></text>
<text transform="translate(384 666.9) rotate(-90) scale(1 1.16)">LUAD-A2-AB3I<tspan font-size="12" dx="0.5" dy="-0.7">-</tspan><tspan dy="0.7" textLength="10.05" lengthAdjust="spacingAndGlyphs">T</tspan><tspan dx="-0.75">P</tspan></text>
<text transform="translate(397 666.9) rotate(-90) scale(1 1.16)">LUAD-BJ-2203<tspan font-size="12" dx="0.5" dy="-0.7">-</tspan><tspan dy="0.7" textLength="10.05" lengthAdjust="spacingAndGlyphs">T</tspan><tspan dx="-0.75">P</tspan></text>
<text transform="translate(410 666.9) rotate(-90) scale(1 1.16)">LUAD-D6-AWQB<tspan font-size="12" dx="0.5" dy="-0.7">-</tspan><tspan dy="0.7" textLength="10.05" lengthAdjust="spacingAndGlyphs">T</tspan><tspan dx="-0.75">P</tspan></text>
<text transform="translate(423 666.9) rotate(-90) scale(1 1.16)">LUAD-58-3253<tspan font-size="12" dx="0.5" dy="-0.7">-</tspan><tspan dy="0.7" textLength="10.05" lengthAdjust="spacingAndGlyphs">T</tspan><tspan dx="-0.75">P</tspan></text>
<text transform="translate(436 666.9) rotate(-90) scale(1 1.16)">LUAD-2I-3816<tspan font-size="12" dx="0.5" dy="-0.7">-</tspan><tspan dy="0.7" textLength="10.05" lengthAdjust="spacingAndGlyphs">T</tspan><tspan dx="-0.75">P</tspan></text>
<text transform="translate(449 666.9) rotate(-90) scale(1 1.16)">LUAD-G3-A3YD<tspan font-size="12" dx="0.5" dy="-0.7">-</tspan><tspan dy="0.7" textLength="10.05" lengthAdjust="spacingAndGlyphs">T</tspan><tspan dx="-0.75">P</tspan></text>
<text transform="translate(462 666.9) rotate(-90) scale(1 1.16)">LUAD-3A-APP5<tspan font-size="12" dx="0.5" dy="-0.7">-</tspan><tspan dy="0.7" textLength="10.05" lengthAdjust="spacingAndGlyphs">T</tspan><tspan dx="-0.75">P</tspan></text>
<text transform="translate(475 666.9) rotate(-90) scale(1 1.16)">LUAD-AE-3834<tspan font-size="12" dx="0.5" dy="-0.7">-</tspan><tspan dy="0.7" textLength="10.05" lengthAdjust="spacingAndGlyphs">T</tspan><tspan dx="-0.75">P</tspan></text>
<text transform="translate(488 666.9) rotate(-90) scale(1 1.16)">LUAD-0C-6384<tspan font-size="12" dx="0.5" dy="-0.7">-</tspan><tspan dy="0.7" textLength="10.05" lengthAdjust="spacingAndGlyphs">T</tspan><tspan dx="-0.75">P</tspan></text>
<text transform="translate(501 666.9) rotate(-90) scale(1 1.16)">LUAD-0C-1048<tspan font-size="12" dx="0.5" dy="-0.7">-</tspan><tspan dy="0.7" textLength="10.05" lengthAdjust="spacingAndGlyphs">T</tspan><tspan dx="-0.75">P</tspan></text>
<text transform="translate(514 666.9) rotate(-90) scale(1 1.16)">LUAD-DD-5941<tspan font-size="12" dx="0.5" dy="-0.7">-</tspan><tspan dy="0.7" textLength="10.05" lengthAdjust="spacingAndGlyphs">T</tspan><tspan dx="-0.75">P</tspan></text>
<text transform="translate(527 666.9) rotate(-90) scale(1 1.16)">LUAD-B7-5776<tspan font-size="12" dx="0.5" dy="-0.7">-</tspan><tspan dy="0.7" textLength="10.05" lengthAdjust="spacingAndGlyphs">T</tspan><tspan dx="-0.75">P</tspan></text>
<text transform="translate(540 666.9) rotate(-90) scale(1 1.16)">LUAD-JJ-1843<tspan font-size="12" dx="0.5" dy="-0.7">-</tspan><tspan dy="0.7" textLength="10.05" lengthAdjust="spacingAndGlyphs">T</tspan><tspan dx="-0.75">P</tspan></text>
<text transform="translate(553 666.9) rotate(-90) scale(1 1.16)">LUAD-DD-1250<tspan font-size="12" dx="0.5" dy="-0.7">-</tspan><tspan dy="0.7" textLength="10.05" lengthAdjust="spacingAndGlyphs">T</tspan><tspan dx="-0.75">P</tspan></text>
<text transform="translate(566 666.9) rotate(-90) scale(1 1.16)">LUAD-FC-AHWM<tspan font-size="12" dx="0.5" dy="-0.7">-</tspan><tspan dy="0.7" textLength="10.05" lengthAdjust="spacingAndGlyphs">T</tspan><tspan dx="-0.75">P</tspan></text>
<text transform="translate(579 666.9) rotate(-90) scale(1 1.16)">LUAD-1E-2120<tspan font-size="12" dx="0.5" dy="-0.7">-</tspan><tspan dy="0.7" textLength="10.05" lengthAdjust="spacingAndGlyphs">T</tspan><tspan dx="-0.75">P</tspan></text>
<text transform="translate(592 666.9) rotate(-90) scale(1 1.16)">LUAD-DH-AUD9<tspan font-size="12" dx="0.5" dy="-0.7">-</tspan><tspan dy="0.7" textLength="10.05" lengthAdjust="spacingAndGlyphs">T</tspan><tspan dx="-0.75">P</tspan></text>
<text transform="translate(605 666.9) rotate(-90) scale(1 1.16)">LUAD-9J-AV3K<tspan font-size="12" dx="0.5" dy="-0.7">-</tspan><tspan dy="0.7" textLength="10.05" lengthAdjust="spacingAndGlyphs">T</tspan><tspan dx="-0.75">P</tspan></text>
<text transform="translate(618 666.9) rotate(-90) scale(1 1.16)">LUAD-90-AHRA<tspan font-size="12" dx="0.5" dy="-0.7">-</tspan><tspan dy="0.7" textLength="10.05" lengthAdjust="spacingAndGlyphs">T</tspan><tspan dx="-0.75">P</tspan></text>
<text transform="translate(631 666.9) rotate(-90) scale(1 1.16)">LUAD-CI-AGXK<tspan font-size="12" dx="0.5" dy="-0.7">-</tspan><tspan dy="0.7" textLength="10.05" lengthAdjust="spacingAndGlyphs">T</tspan><tspan dx="-0.75">P</tspan></text>
<text transform="translate(644 666.9) rotate(-90) scale(1 1.16)">LUAD-31-AVDG<tspan font-size="12" dx="0.5" dy="-0.7">-</tspan><tspan dy="0.7" textLength="10.05" lengthAdjust="spacingAndGlyphs">T</tspan><tspan dx="-0.75">P</tspan></text>
<text transform="translate(657 666.9) rotate(-90) scale(1 1.16)">LUAD-5B-3204<tspan font-size="12" dx="0.5" dy="-0.7">-</tspan><tspan dy="0.7" textLength="10.05" lengthAdjust="spacingAndGlyphs">T</tspan><tspan dx="-0.75">P</tspan></text>
<text transform="translate(670 666.9) rotate(-90) scale(1 1.16)">LUAD-61-AE4N<tspan font-size="12" dx="0.5" dy="-0.7">-</tspan><tspan dy="0.7" textLength="10.05" lengthAdjust="spacingAndGlyphs">T</tspan><tspan dx="-0.75">P</tspan></text>
<text transform="translate(683 666.9) rotate(-90) scale(1 1.16)">LUAD-8F-ATU7<tspan font-size="12" dx="0.5" dy="-0.7">-</tspan><tspan dy="0.7" textLength="10.05" lengthAdjust="spacingAndGlyphs">T</tspan><tspan dx="-0.75">P</tspan></text>
<text transform="translate(696 666.9) rotate(-90) scale(1 1.16)">LUAD-95-A2QD<tspan font-size="12" dx="0.5" dy="-0.7">-</tspan><tspan dy="0.7" textLength="10.05" lengthAdjust="spacingAndGlyphs">T</tspan><tspan dx="-0.75">P</tspan></text>
<text transform="translate(709 666.9) rotate(-90) scale(1 1.16)">LUAD-DF-AHFB<tspan font-size="12" dx="0.5" dy="-0.7">-</tspan><tspan dy="0.7" textLength="10.05" lengthAdjust="spacingAndGlyphs">T</tspan><tspan dx="-0.75">P</tspan></text>
<text transform="translate(722 666.9) rotate(-90) scale(1 1.16)">LUAD-39-A116<tspan font-size="12" dx="0.5" dy="-0.7">-</tspan><tspan dy="0.7" textLength="10.05" lengthAdjust="spacingAndGlyphs">T</tspan><tspan dx="-0.75">P</tspan></text>
<text transform="translate(735 666.9) rotate(-90) scale(1 1.16)">LUAD-CD-AX2P<tspan font-size="12" dx="0.5" dy="-0.7">-</tspan><tspan dy="0.7" textLength="10.05" lengthAdjust="spacingAndGlyphs">T</tspan><tspan dx="-0.75">P</tspan></text>
<text transform="translate(748 666.9) rotate(-90) scale(1 1.16)">LUAD-11-AHHY<tspan font-size="12" dx="0.5" dy="-0.7">-</tspan><tspan dy="0.7" textLength="10.05" lengthAdjust="spacingAndGlyphs">T</tspan><tspan dx="-0.75">P</tspan></text>
<text transform="translate(761 666.9) rotate(-90) scale(1 1.16)">LUAD-72-4799<tspan font-size="12" dx="0.5" dy="-0.7">-</tspan><tspan dy="0.7" textLength="10.05" lengthAdjust="spacingAndGlyphs">T</tspan><tspan dx="-0.75">P</tspan></text>
<text transform="translate(774 666.9) rotate(-90) scale(1 1.16)">LUAD-05-AMS3<tspan font-size="12" dx="0.5" dy="-0.7">-</tspan><tspan dy="0.7" textLength="10.05" lengthAdjust="spacingAndGlyphs">T</tspan><tspan dx="-0.75">P</tspan></text>
<text transform="translate(787 666.9) rotate(-90) scale(1 1.16)">LUAD-JJ-ASTI<tspan font-size="12" dx="0.5" dy="-0.7">-</tspan><tspan dy="0.7" textLength="10.05" lengthAdjust="spacingAndGlyphs">T</tspan><tspan dx="-0.75">P</tspan></text>
<text transform="translate(800 666.9) rotate(-90) scale(1 1.16)">LUAD-IF-AYJY<tspan font-size="12" dx="0.5" dy="-0.7">-</tspan><tspan dy="0.7" textLength="10.05" lengthAdjust="spacingAndGlyphs">T</tspan><tspan dx="-0.75">P</tspan></text>
<text transform="translate(813 666.9) rotate(-90) scale(1 1.16)">LUAD-5B-A4JW<tspan font-size="12" dx="0.5" dy="-0.7">-</tspan><tspan dy="0.7" textLength="10.05" lengthAdjust="spacingAndGlyphs">T</tspan><tspan dx="-0.75">P</tspan></text>
<text transform="translate(826 666.9) rotate(-90) scale(1 1.16)">LUAD-FH-AYW9<tspan font-size="12" dx="0.5" dy="-0.7">-</tspan><tspan dy="0.7" textLength="10.05" lengthAdjust="spacingAndGlyphs">T</tspan><tspan dx="-0.75">P</tspan></text>
<text transform="translate(839 666.9) rotate(-90) scale(1 1.16)">LUAD-6E-0036<tspan font-size="12" dx="0.5" dy="-0.7">-</tspan><tspan dy="0.7" textLength="10.05" lengthAdjust="spacingAndGlyphs">T</tspan><tspan dx="-0.75">P</tspan></text>
<text transform="translate(852 666.9) rotate(-90) scale(1 1.16)">LUAD-09-AN7L<tspan font-size="12" dx="0.5" dy="-0.7">-</tspan><tspan dy="0.7" textLength="10.05" lengthAdjust="spacingAndGlyphs">T</tspan><tspan dx="-0.75">P</tspan></text>
<text transform="translate(865 666.9) rotate(-90) scale(1 1.16)">LUAD-B6-6934<tspan font-size="12" dx="0.5" dy="-0.7">-</tspan><tspan dy="0.7" textLength="10.05" lengthAdjust="spacingAndGlyphs">T</tspan><tspan dx="-0.75">P</tspan></text>
<text transform="translate(878 666.9) rotate(-90) scale(1 1.16)">LUAD-A6-1185<tspan font-size="12" dx="0.5" dy="-0.7">-</tspan><tspan dy="0.7" textLength="10.05" lengthAdjust="spacingAndGlyphs">T</tspan><tspan dx="-0.75">P</tspan></text>
<text transform="translate(891 666.9) rotate(-90) scale(1 1.16)">LUAD-C1-6342<tspan font-size="12" dx="0.5" dy="-0.7">-</tspan><tspan dy="0.7" textLength="10.05" lengthAdjust="spacingAndGlyphs">T</tspan><tspan dx="-0.75">P</tspan></text>
<text transform="translate(904 666.9) rotate(-90) scale(1 1.16)">LUAD-DE-8780<tspan font-size="12" dx="0.5" dy="-0.7">-</tspan><tspan dy="0.7" textLength="10.05" lengthAdjust="spacingAndGlyphs">T</tspan><tspan dx="-0.75">P</tspan></text>
<text transform="translate(917 666.9) rotate(-90) scale(1 1.16)">LUAD-94-2993<tspan font-size="12" dx="0.5" dy="-0.7">-</tspan><tspan dy="0.7" textLength="10.05" lengthAdjust="spacingAndGlyphs">T</tspan><tspan dx="-0.75">P</tspan></text>
<text transform="translate(930 666.9) rotate(-90) scale(1 1.16)">LUAD-21-AV5L<tspan font-size="12" dx="0.5" dy="-0.7">-</tspan><tspan dy="0.7" textLength="10.05" lengthAdjust="spacingAndGlyphs">T</tspan><tspan dx="-0.75">P</tspan></text>
<text transform="translate(943 666.9) rotate(-90) scale(1 1.16)">LUAD-A7-AZNG<tspan font-size="12" dx="0.5" dy="-0.7">-</tspan><tspan dy="0.7" textLength="10.05" lengthAdjust="spacingAndGlyphs">T</tspan><tspan dx="-0.75">P</tspan></text>
</g>
</g>
</svg></body></html>
